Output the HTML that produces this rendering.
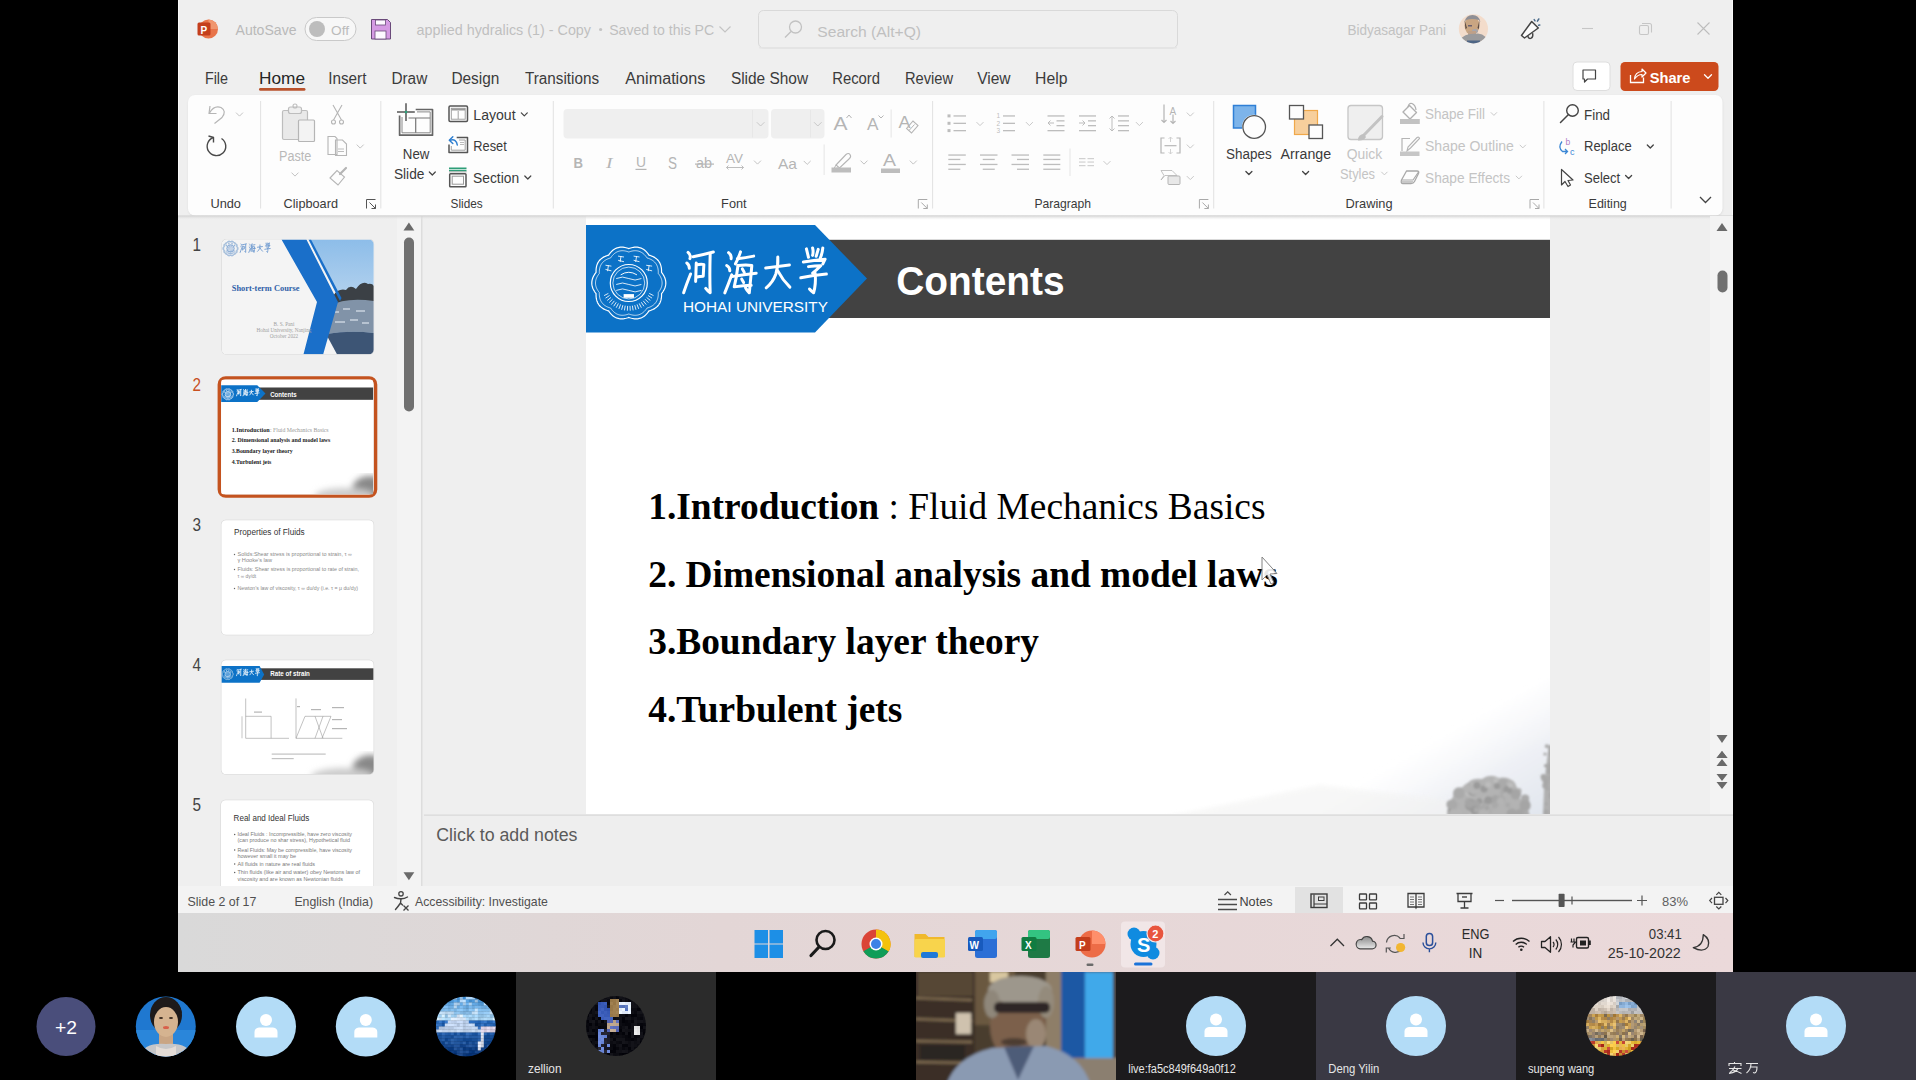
<!DOCTYPE html>
<html><head><meta charset="utf-8"><style>html,body{margin:0;padding:0;background:#000;overflow:hidden}svg{display:block;font-family:"Liberation Sans",sans-serif}</style></head><body><svg width="1916" height="1080" viewBox="0 0 1916 1080">
<rect x="0" y="0" width="1916" height="1080" fill="#000" />
<rect x="178" y="0" width="1555" height="972" fill="#efefef" />
<rect x="178" y="0" width="1" height="913" fill="#fafafa" />
<rect x="1732" y="0" width="1" height="913" fill="#fafafa" />
<circle cx="208.5" cy="29" r="9.5" fill="#e8744a" />
<path d="M208.5,19.5 A9.5,9.5 0 0 1 218,29 L208.5,29 Z" fill="#f0966e"/>
<rect x="197.5" y="22.5" width="13" height="13" fill="#c43e1c" rx="1.5" />
<text x="200.5" y="33.5" font-size="10" fill="#fff" font-weight="bold" >P</text>
<text x="235.5" y="35.0" font-size="15" fill="#b9b9b9" textLength="61.0" lengthAdjust="spacingAndGlyphs" >AutoSave</text>
<rect x="305" y="17.5" width="51" height="23" fill="#f7f7f7" rx="11.5" stroke="#c9c9c9" stroke-width="1" />
<circle cx="317" cy="29" r="8" fill="#bdbdbd" />
<text x="331.0" y="34.5" font-size="13" fill="#bbbbbb" textLength="18.0" lengthAdjust="spacingAndGlyphs" >Off</text>
<path d="M371.5,19.5 h16 l3,3 v16.5 h-19 z" fill="#d59ae3" stroke="#6a4a7a" stroke-width="1"/>
<rect x="375.5" y="20" width="10" height="5" fill="#fdf8ff" stroke="#6a4a7a" stroke-width="0.8" />
<rect x="375" y="31" width="11" height="8" fill="#fdf8ff" stroke="#6a4a7a" stroke-width="0.8" />
<text x="416.5" y="34.7" font-size="14.5" fill="#bfbfbf" textLength="174.5" lengthAdjust="spacingAndGlyphs" >applied hydralics (1) - Copy</text>
<circle cx="600.6" cy="29.5" r="1.6" fill="#c4c4c4" />
<text x="609.2" y="34.7" font-size="14.5" fill="#bfbfbf" textLength="105.0" lengthAdjust="spacingAndGlyphs" >Saved to this PC</text>
<path d="M719.5,26.5 L725,32 L730.5,26.5" stroke="#c4c4c4" stroke-width="1.2" fill="none" />
<rect x="758.5" y="10.5" width="419" height="37.5" fill="#efefef" rx="5" stroke="#d9d9d9" stroke-width="1" />
<rect x="759" y="47" width="418" height="1.5" fill="#e4e4e4" rx="0.7" />
<circle cx="795.5" cy="27" r="6" fill="none" stroke="#c2c2c2" stroke-width="1.3" />
<path d="M791,31.5 L785,37.5" stroke="#c2c2c2" stroke-width="1.5" fill="none" />
<text x="817.3" y="36.5" font-size="15.5" fill="#c0c0c0" textLength="103.7" lengthAdjust="spacingAndGlyphs" >Search (Alt+Q)</text>
<text x="1347.4" y="35.1" font-size="14.5" fill="#c2c2c2" textLength="98.6" lengthAdjust="spacingAndGlyphs" >Bidyasagar Pani</text>
<defs><clipPath id="avc"><circle cx="1473.4" cy="28.8" r="14.6"/></clipPath><filter id="avb"><feGaussianBlur stdDeviation="0.6"/></filter></defs>
<circle cx="1473.4" cy="28.8" r="14.6" fill="#f3dccb" />
<g clip-path="url(#avc)"><g filter="url(#avb)"><ellipse cx="1472" cy="25.5" rx="7.5" ry="9.5" fill="#c9a582"/><path d="M1464.5,22 Q1466,15 1472.5,15 Q1479,15 1480.5,22 L1479,20 Q1472,18 1466,20 Z" fill="#8f8f95"/><path d="M1464.5,20 L1465.5,29 L1467,28 Z M1479.5,20 L1479,29 L1477.5,28 Z" fill="#5b4a42"/><rect x="1468" y="25" width="4" height="1.5" fill="#6a6070"/><ellipse cx="1475" cy="31" rx="3" ry="2" fill="#a7a7ad"/><rect x="1468" y="31" width="8" height="6" fill="#bfa088"/><path d="M1458,46 Q1460,35 1470,34 L1478,33.5 Q1487,34 1490,46 Z" fill="#9a9a9c"/><rect x="1467" y="40.5" width="13" height="4" fill="#4d6585"/></g></g>
<path d="M1521.5,35.5 L1531.7,21.5 L1538.3,28 L1524.5,38 Z" stroke="#444" stroke-width="1.5" fill="#fbfbfb" stroke-linejoin="round"/>
<path d="M1527.8,36 Q1528.5,39.2 1531.2,38.2 Q1533.5,37 1532.6,33.2" stroke="#444" stroke-width="1.4" fill="none" />
<path d="M1534.2,19.6 L1535,20.8 M1538.8,19 L1537.4,21.2 M1539.8,25 L1538.6,25.2" stroke="#4a6a8a" stroke-width="1.5" fill="none" stroke-linecap="round"/>
<path d="M1582,28.5 L1593,28.5" stroke="#c6c6c6" stroke-width="1.1" fill="none" />
<rect x="1639.5" y="25.5" width="9" height="9" fill="none" rx="1.5" stroke="#c6c6c6" stroke-width="1.1" />
<path d="M1642,23.5 L1649.5,23.5 Q1651.5,23.5 1651.5,25.5 L1651.5,32.5" stroke="#c6c6c6" stroke-width="1.1" fill="none" />
<path d="M1697.5,22.5 L1709.5,34.5 M1709.5,22.5 L1697.5,34.5" stroke="#bdbdbd" stroke-width="1.1" fill="none" />
<text x="204.9" y="83.7" font-size="16" fill="#3b3b3b" textLength="23.1" lengthAdjust="spacingAndGlyphs" >File</text>
<text x="259.0" y="83.7" font-size="16" fill="#262626" textLength="46.0" lengthAdjust="spacingAndGlyphs" >Home</text>
<text x="328.2" y="83.7" font-size="16" fill="#3b3b3b" textLength="38.2" lengthAdjust="spacingAndGlyphs" >Insert</text>
<text x="391.4" y="83.7" font-size="16" fill="#3b3b3b" textLength="35.9" lengthAdjust="spacingAndGlyphs" >Draw</text>
<text x="451.4" y="83.7" font-size="16" fill="#3b3b3b" textLength="48.0" lengthAdjust="spacingAndGlyphs" >Design</text>
<text x="525.0" y="83.7" font-size="16" fill="#3b3b3b" textLength="74.0" lengthAdjust="spacingAndGlyphs" >Transitions</text>
<text x="625.3" y="83.7" font-size="16" fill="#3b3b3b" textLength="80.0" lengthAdjust="spacingAndGlyphs" >Animations</text>
<text x="730.9" y="83.7" font-size="16" fill="#3b3b3b" textLength="77.2" lengthAdjust="spacingAndGlyphs" >Slide Show</text>
<text x="832.2" y="83.7" font-size="16" fill="#3b3b3b" textLength="47.8" lengthAdjust="spacingAndGlyphs" >Record</text>
<text x="905.0" y="83.7" font-size="16" fill="#3b3b3b" textLength="48.0" lengthAdjust="spacingAndGlyphs" >Review</text>
<text x="977.2" y="83.7" font-size="16" fill="#3b3b3b" textLength="33.4" lengthAdjust="spacingAndGlyphs" >View</text>
<text x="1035.0" y="83.7" font-size="16" fill="#3b3b3b" textLength="32.4" lengthAdjust="spacingAndGlyphs" >Help</text>
<rect x="259" y="88" width="46.5" height="2.8" fill="#b9522c" rx="1.4" />
<rect x="1573" y="62" width="37" height="28.5" fill="#ffffff" rx="4" stroke="#dedede" stroke-width="1" />
<path d="M1583,70 h12.5 v9 h-8 l-3,3 v-3 h-1.5 z" stroke="#444" stroke-width="1.2" fill="none" stroke-linejoin="round"/>
<rect x="1620.5" y="62" width="98" height="29" fill="#cc4a1c" rx="4.5" />
<path d="M1630.5,75 v7.5 h13 v-5" stroke="#fff" stroke-width="1.3" fill="none" />
<path d="M1634.5,79 Q1635,72 1642,71.5 L1642,69 L1646,73 L1642,77 L1642,74.5 Q1637.5,74.5 1634.5,79 Z" stroke="#fff" stroke-width="1.2" fill="none" stroke-linejoin="round"/>
<text x="1649.7" y="82.5" font-size="15.5" fill="#ffffff" font-weight="bold" textLength="40.8" lengthAdjust="spacingAndGlyphs" >Share</text>
<path d="M1704.5,74.8 L1708.0,78.2 L1711.5,74.8" stroke="#fff" stroke-width="1.3" fill="none" stroke-linecap="round" stroke-linejoin="round"/>
<defs><filter id="rsh" x="-2%" y="-10%" width="104%" height="125%"><feGaussianBlur stdDeviation="1.2"/></filter></defs>
<rect x="188.5" y="96" width="1534" height="120.5" fill="#d0d0d0" rx="7" filter="url(#rsh)" opacity="0.7"/>
<defs><linearGradient id="rshg" x1="0" y1="0" x2="0" y2="1"><stop offset="0" stop-color="#cfcfcf"/><stop offset="1" stop-color="#efefef" stop-opacity="0"/></linearGradient></defs>
<rect x="188" y="95" width="1534.5" height="120.5" fill="#fdfdfd" rx="7" />
<rect x="260.1" y="101" width="1" height="107.5" fill="#e1e1e1" />
<rect x="380.3" y="101" width="1" height="107.5" fill="#e1e1e1" />
<rect x="552.8" y="101" width="1" height="107.5" fill="#e1e1e1" />
<rect x="932.1" y="101" width="1" height="107.5" fill="#e1e1e1" />
<rect x="1213.2" y="101" width="1" height="107.5" fill="#e1e1e1" />
<rect x="1543.4" y="101" width="1" height="107.5" fill="#e1e1e1" />
<rect x="1670.6" y="101" width="1" height="107.5" fill="#e1e1e1" />
<text x="210.4" y="208.3" font-size="13.5" fill="#3a3a3a" textLength="30.6" lengthAdjust="spacingAndGlyphs" >Undo</text>
<text x="283.6" y="208.3" font-size="13.5" fill="#3a3a3a" textLength="54.4" lengthAdjust="spacingAndGlyphs" >Clipboard</text>
<text x="450.6" y="208.3" font-size="13.5" fill="#3a3a3a" textLength="32.2" lengthAdjust="spacingAndGlyphs" >Slides</text>
<text x="721.1" y="208.3" font-size="13.5" fill="#3a3a3a" textLength="25.5" lengthAdjust="spacingAndGlyphs" >Font</text>
<text x="1034.4" y="208.3" font-size="13.5" fill="#3a3a3a" textLength="56.7" lengthAdjust="spacingAndGlyphs" >Paragraph</text>
<text x="1345.6" y="208.3" font-size="13.5" fill="#3a3a3a" textLength="47.0" lengthAdjust="spacingAndGlyphs" >Drawing</text>
<text x="1588.6" y="208.3" font-size="13.5" fill="#3a3a3a" textLength="38.2" lengthAdjust="spacingAndGlyphs" >Editing</text>
<path d="M366.5,208.5 L366.5,199.5 L375.5,199.5" stroke="#555" stroke-width="1" fill="none" />
<path d="M369.5,202.5 L375.5,208.5 M375.5,204.5 L375.5,208.5 L371.5,208.5" stroke="#555" stroke-width="1" fill="none" />
<path d="M918.3,208.5 L918.3,199.5 L927.3,199.5" stroke="#a9a9a9" stroke-width="1" fill="none" />
<path d="M921.3,202.5 L927.3,208.5 M927.3,204.5 L927.3,208.5 L923.3,208.5" stroke="#a9a9a9" stroke-width="1" fill="none" />
<path d="M1199.4,208.5 L1199.4,199.5 L1208.4,199.5" stroke="#a9a9a9" stroke-width="1" fill="none" />
<path d="M1202.4,202.5 L1208.4,208.5 M1208.4,204.5 L1208.4,208.5 L1204.4,208.5" stroke="#a9a9a9" stroke-width="1" fill="none" />
<path d="M1530,208.5 L1530,199.5 L1539,199.5" stroke="#a9a9a9" stroke-width="1" fill="none" />
<path d="M1533,202.5 L1539,208.5 M1539,204.5 L1539,208.5 L1535,208.5" stroke="#a9a9a9" stroke-width="1" fill="none" />
<path d="M210,106 L209,113.5 L216.5,113.5" stroke="#b5b5b5" stroke-width="1.2" fill="none" stroke-linejoin="round"/>
<path d="M209.5,113 Q214,105 221,107.5 Q227,111 222,117.5 L214.5,123.5" stroke="#b5b5b5" stroke-width="1.2" fill="none" />
<path d="M236.3,112.9 L239.5,116.1 L242.7,112.9" stroke="#c5c5c5" stroke-width="1" fill="none" stroke-linecap="round" stroke-linejoin="round"/>
<path d="M213.5,137.5 A9.3,9.3 0 1 0 221.5,138.5" stroke="#4a4a4a" stroke-width="1.4" fill="none" />
<path d="M208.5,136 L213.5,137.5 L213.5,142.5" stroke="#4a4a4a" stroke-width="1.4" fill="none" stroke-linejoin="round"/>
<rect x="282.5" y="110.5" width="25" height="29" fill="#e9e9e9" rx="1.5" stroke="#bdbdbd" stroke-width="1.2" />
<rect x="288.5" y="107" width="13" height="6.5" fill="#efefef" rx="2" stroke="#bdbdbd" stroke-width="1.2" />
<circle cx="295" cy="106" r="2" fill="none" stroke="#bdbdbd" stroke-width="1.1" />
<rect x="298.5" y="120" width="16" height="21.5" fill="#f3f3f3" rx="1" stroke="#b5b5b5" stroke-width="1.2" />
<text x="279.0" y="160.6" font-size="14" fill="#b9b9b9" textLength="32.3" lengthAdjust="spacingAndGlyphs" >Paste</text>
<path d="M291.8,172.9 L295.0,176.1 L298.2,172.9" stroke="#c3c3c3" stroke-width="1" fill="none" stroke-linecap="round" stroke-linejoin="round"/>
<path d="M333,105 L341.5,120 M342,105 L333.5,120" stroke="#b5b5b5" stroke-width="1.1" fill="none" />
<circle cx="333.5" cy="122" r="2" fill="none" stroke="#b5b5b5" stroke-width="1.1" />
<circle cx="341.5" cy="122" r="2" fill="none" stroke="#b5b5b5" stroke-width="1.1" />
<path d="M328,136.5 h7 l2,2 v16 h-9 z" stroke="#b5b5b5" stroke-width="1.1" fill="none" fill="#f4f4f4"/>
<path d="M335.5,140 h7 l4,4 v11.5 h-11 z" stroke="#b5b5b5" stroke-width="1.1" fill="none" fill="#f7f7f7"/>
<path d="M338,149 h6 M338,151.5 h6" stroke="#b5b5b5" stroke-width="0.9" fill="none" />
<path d="M357.0,144.9 L360.2,148.1 L363.4,144.9" stroke="#c3c3c3" stroke-width="1" fill="none" stroke-linecap="round" stroke-linejoin="round"/>
<path d="M330,178 L337,170.5 L344.5,177 L338,185 Z" stroke="#b5b5b5" stroke-width="1.1" fill="none" fill="#e9e9e9"/>
<path d="M340,174 L346,168" stroke="#b5b5b5" stroke-width="2.2" fill="none" stroke-linecap="round"/>
<path d="M415.7,109.5 L432.5,109.5 L432.5,135.2 L399.6,135.2 L399.6,115.5" stroke="#666" stroke-width="1.7" fill="none" stroke-linejoin="round"/>
<path d="M417,111.9 L430.2,111.9 L430.2,132.8 L402,132.8 L402,117" stroke="#8a8a8a" stroke-width="1.0" fill="none" />
<path d="M408.5,118 H430.2 M415.7,118 V132.8" stroke="#777" stroke-width="1.2" fill="none" />
<path d="M397,112.1 L414.8,112.1 M406,103.3 L406,121" stroke="#555" stroke-width="1.5" fill="none" />
<circle cx="406" cy="112.1" r="1.3" fill="#2ca27a" />
<text x="402.8" y="159.2" font-size="14" fill="#3a3a3a" textLength="26.6" lengthAdjust="spacingAndGlyphs" >New</text>
<text x="393.9" y="178.6" font-size="14" fill="#3a3a3a" textLength="30.5" lengthAdjust="spacingAndGlyphs" >Slide</text>
<path d="M429.3,172.0 L432.3,175.0 L435.3,172.0" stroke="#444" stroke-width="1.2" fill="none" stroke-linecap="round" stroke-linejoin="round"/>
<rect x="449" y="106" width="18.5" height="15.5" fill="none" rx="1.2" stroke="#555" stroke-width="1.5" />
<rect x="451.3" y="108.3" width="13.9" height="10.9" fill="none" stroke="#999" stroke-width="0.9" />
<rect x="451.5" y="108.5" width="13.5" height="2" fill="#999" />
<path d="M458.2,111 v8" stroke="#999" stroke-width="0.9" fill="none" />
<text x="473.3" y="119.7" font-size="14" fill="#3a3a3a" textLength="42.3" lengthAdjust="spacingAndGlyphs" >Layout</text>
<path d="M521.3,112.8 L524.3,115.8 L527.3,112.8" stroke="#444" stroke-width="1.2" fill="none" stroke-linecap="round" stroke-linejoin="round"/>
<path d="M456.7,137.5 H467.5 V152.5 H449 V144.5" stroke="#555" stroke-width="1.5" fill="none" stroke-linejoin="round"/>
<path d="M459,140 H465.2 V150.2 H451.3 V146" stroke="#999" stroke-width="0.9" fill="none" />
<path d="M460,142.5 h4 M460,144.5 h4" stroke="#aaa" stroke-width="0.8" fill="none" />
<path d="M450,140.2 Q456.5,138.5 457.3,145" stroke="#2f7fd0" stroke-width="1.5" fill="none" stroke-linecap="round"/>
<path d="M452.8,136.8 L449.3,140.2 L452.8,143.5" stroke="#2f7fd0" stroke-width="1.5" fill="none" stroke-linecap="round" stroke-linejoin="round"/>
<text x="473.3" y="151.1" font-size="14" fill="#3a3a3a" textLength="33.4" lengthAdjust="spacingAndGlyphs" >Reset</text>
<rect x="449" y="167.5" width="17.5" height="1.6" fill="#2e9e78" />
<rect x="449" y="169.8" width="17.5" height="1.6" fill="#2e9e78" />
<rect x="449" y="171.4" width="17.5" height="1" fill="#b0b0b0" />
<rect x="449.7" y="173.7" width="16.3" height="13" fill="none" rx="0.8" stroke="#555" stroke-width="1.5" />
<rect x="452.2" y="176.2" width="11.3" height="8" fill="none" stroke="#999" stroke-width="1" />
<text x="473.1" y="182.8" font-size="14" fill="#3a3a3a" textLength="46.0" lengthAdjust="spacingAndGlyphs" >Section</text>
<path d="M524.8,176.0 L527.8,179.0 L530.8,176.0" stroke="#444" stroke-width="1.2" fill="none" stroke-linecap="round" stroke-linejoin="round"/>
<rect x="563.5" y="109" width="205" height="29.5" fill="#efefef" rx="4" />
<rect x="752" y="110" width="1" height="27.5" fill="#e7e7e7" />
<path d="M757.1,122.5 L760.6,126.0 L764.1,122.5" stroke="#c8c8c8" stroke-width="1" fill="none" stroke-linecap="round" stroke-linejoin="round"/>
<rect x="771" y="109" width="53.5" height="29.5" fill="#efefef" rx="4" />
<rect x="810" y="110" width="1" height="27.5" fill="#e7e7e7" />
<path d="M814.3,122.5 L817.8,126.0 L821.3,122.5" stroke="#c8c8c8" stroke-width="1" fill="none" stroke-linecap="round" stroke-linejoin="round"/>
<text x="833.5" y="130.0" font-size="19" fill="#b5b5b5" textLength="14.0" lengthAdjust="spacingAndGlyphs" >A</text>
<path d="M846.5,118 L849,115 L851.5,118" stroke="#b5b5b5" stroke-width="1" fill="none" />
<text x="867.0" y="130.0" font-size="16" fill="#b5b5b5" textLength="11.5" lengthAdjust="spacingAndGlyphs" >A</text>
<path d="M878.5,115.5 L881,118 L883.5,115.5" stroke="#b5b5b5" stroke-width="1" fill="none" />
<rect x="890.6" y="109.5" width="1" height="28" fill="#e5e5e5" />
<text x="898.5" y="127.5" font-size="17" fill="#b5b5b5" textLength="12.0" lengthAdjust="spacingAndGlyphs" >A</text>
<path d="M906.5,128.5 L913,121 L918,125.5 L911.5,133 Z" stroke="#b5b5b5" stroke-width="1.1" fill="none" />
<path d="M909,130.5 L914.5,124.5" stroke="#b5b5b5" stroke-width="1" fill="none" />
<text x="573.5" y="167.8" font-size="15" fill="#b5b5b5" font-weight="bold" textLength="9.5" lengthAdjust="spacingAndGlyphs" >B</text>
<text x="606.0" y="167.8" font-size="15" fill="#b5b5b5" font-family="Liberation Serif" textLength="6.5" lengthAdjust="spacingAndGlyphs" font-style="italic">I</text>
<text x="636.0" y="166.5" font-size="14" fill="#b5b5b5" textLength="10.0" lengthAdjust="spacingAndGlyphs" >U</text>
<rect x="635.5" y="168.8" width="11" height="1.2" fill="#b5b5b5" />
<text x="668.0" y="168.5" font-size="16" fill="#b5b5b5" textLength="9.0" lengthAdjust="spacingAndGlyphs" >S</text>
<text x="696.0" y="167.5" font-size="14" fill="#b5b5b5" textLength="16.0" lengthAdjust="spacingAndGlyphs" >ab</text>
<rect x="695" y="163.5" width="19" height="1.2" fill="#b5b5b5" />
<text x="726.0" y="163.0" font-size="13" fill="#b5b5b5" textLength="17.0" lengthAdjust="spacingAndGlyphs" >AV</text>
<path d="M726.5,167.5 h17 M728.5,165.5 l-2,2 l2,2 M741.5,165.5 l2,2 l-2,2" stroke="#b5b5b5" stroke-width="0.9" fill="none" />
<path d="M754.3,160.9 L757.5,164.1 L760.7,160.9" stroke="#c3c3c3" stroke-width="1" fill="none" stroke-linecap="round" stroke-linejoin="round"/>
<text x="778.0" y="168.9" font-size="15" fill="#b5b5b5" textLength="19.0" lengthAdjust="spacingAndGlyphs" >Aa</text>
<path d="M804.0,161.2 L807.2,164.4 L810.4,161.2" stroke="#c3c3c3" stroke-width="1" fill="none" stroke-linecap="round" stroke-linejoin="round"/>
<rect x="823.6" y="144.5" width="1" height="30.5" fill="#e5e5e5" />
<path d="M836,165 L846,154.5 Q848.5,152.5 850,154.5 Q851.5,156.5 849.5,158.5 L839.5,168 Z" stroke="#b5b5b5" stroke-width="1.1" fill="none" />
<path d="M836,165 L834,168.5 L838,168" stroke="#b5b5b5" stroke-width="1" fill="none" />
<rect x="831.5" y="167.5" width="19.5" height="5" fill="#bdbdbd" />
<path d="M860.8,160.9 L864.0,164.1 L867.2,160.9" stroke="#c3c3c3" stroke-width="1" fill="none" stroke-linecap="round" stroke-linejoin="round"/>
<text x="883.0" y="166.0" font-size="16" fill="#b5b5b5" textLength="13.0" lengthAdjust="spacingAndGlyphs" >A</text>
<rect x="881" y="168.5" width="19" height="4.5" fill="#bdbdbd" />
<path d="M910.1,160.9 L913.3,164.1 L916.5,160.9" stroke="#c3c3c3" stroke-width="1" fill="none" stroke-linecap="round" stroke-linejoin="round"/>
<rect x="947.5" y="114.4" width="3" height="3" fill="#bdbdbd" />
<rect x="953.5" y="115.30000000000001" width="12.5" height="1.3" fill="#bdbdbd" />
<rect x="947.5" y="121.8" width="3" height="3" fill="#bdbdbd" />
<rect x="953.5" y="122.7" width="12.5" height="1.3" fill="#bdbdbd" />
<rect x="947.5" y="129.1" width="3" height="3" fill="#bdbdbd" />
<rect x="953.5" y="130.0" width="12.5" height="1.3" fill="#bdbdbd" />
<path d="M976.8,122.4 L980.0,125.6 L983.2,122.4" stroke="#c9c9c9" stroke-width="1" fill="none" stroke-linecap="round" stroke-linejoin="round"/>
<text x="996.5" y="118.4" font-size="6.5" fill="#bdbdbd" >1</text>
<rect x="1003" y="115.30000000000001" width="12" height="1.3" fill="#bdbdbd" />
<text x="996.5" y="125.8" font-size="6.5" fill="#bdbdbd" >2</text>
<rect x="1003" y="122.7" width="12" height="1.3" fill="#bdbdbd" />
<text x="996.5" y="133.1" font-size="6.5" fill="#bdbdbd" >3</text>
<rect x="1003" y="130.0" width="12" height="1.3" fill="#bdbdbd" />
<path d="M1026.2,122.4 L1029.4,125.6 L1032.6,122.4" stroke="#c9c9c9" stroke-width="1" fill="none" stroke-linecap="round" stroke-linejoin="round"/>
<rect x="1047.5" y="115.3" width="17" height="1.3" fill="#bdbdbd" />
<rect x="1056.5" y="120.2" width="8" height="1.3" fill="#bdbdbd" />
<rect x="1056.5" y="125" width="8" height="1.3" fill="#bdbdbd" />
<rect x="1047.5" y="130" width="17" height="1.3" fill="#bdbdbd" />
<path d="M1054,123 h-6 M1050.5,120.5 l-2.5,2.5 l2.5,2.5" stroke="#bdbdbd" stroke-width="1" fill="none" />
<rect x="1079" y="115.3" width="17" height="1.3" fill="#bdbdbd" />
<rect x="1088" y="120.2" width="8" height="1.3" fill="#bdbdbd" />
<rect x="1088" y="125" width="8" height="1.3" fill="#bdbdbd" />
<rect x="1079" y="130" width="17" height="1.3" fill="#bdbdbd" />
<path d="M1079,123 h6 M1082.5,120.5 l2.5,2.5 l-2.5,2.5" stroke="#bdbdbd" stroke-width="1" fill="none" />
<rect x="1118" y="115.3" width="11" height="1.3" fill="#bdbdbd" />
<rect x="1118" y="120.2" width="11" height="1.3" fill="#bdbdbd" />
<rect x="1118" y="125" width="11" height="1.3" fill="#bdbdbd" />
<rect x="1118" y="130" width="11" height="1.3" fill="#bdbdbd" />
<path d="M1112,116 v15 M1109.5,118.5 l2.5,-2.5 l2.5,2.5 M1109.5,128.5 l2.5,2.5 l2.5,-2.5" stroke="#bdbdbd" stroke-width="1" fill="none" />
<path d="M1136.2,122.4 L1139.4,125.6 L1142.6,122.4" stroke="#c9c9c9" stroke-width="1" fill="none" stroke-linecap="round" stroke-linejoin="round"/>
<rect x="948.3" y="154.4" width="17.5" height="1.3" fill="#bdbdbd" />
<rect x="948.3" y="158.8" width="12" height="1.3" fill="#bdbdbd" />
<rect x="948.3" y="163.8" width="17.5" height="1.3" fill="#bdbdbd" />
<rect x="948.3" y="168.6" width="12" height="1.3" fill="#bdbdbd" />
<rect x="980.0" y="154.4" width="17.5" height="1.3" fill="#bdbdbd" />
<rect x="982.75" y="158.8" width="12" height="1.3" fill="#bdbdbd" />
<rect x="980.0" y="163.8" width="17.5" height="1.3" fill="#bdbdbd" />
<rect x="982.75" y="168.6" width="12" height="1.3" fill="#bdbdbd" />
<rect x="1011.5" y="154.4" width="17.5" height="1.3" fill="#bdbdbd" />
<rect x="1017.0" y="158.8" width="12" height="1.3" fill="#bdbdbd" />
<rect x="1011.5" y="163.8" width="17.5" height="1.3" fill="#bdbdbd" />
<rect x="1017.0" y="168.6" width="12" height="1.3" fill="#bdbdbd" />
<rect x="1043.3" y="154.4" width="17" height="1.3" fill="#bdbdbd" />
<rect x="1043.3" y="158.8" width="17" height="1.3" fill="#bdbdbd" />
<rect x="1043.3" y="163.8" width="17" height="1.3" fill="#bdbdbd" />
<rect x="1043.3" y="168.6" width="17" height="1.3" fill="#bdbdbd" />
<rect x="1069.5" y="148.5" width="1" height="27.5" fill="#e5e5e5" />
<rect x="1079" y="158.1" width="6.5" height="1.1" fill="#cdcdcd" />
<rect x="1087.5" y="158.1" width="6.5" height="1.1" fill="#cdcdcd" />
<rect x="1079" y="161.5" width="6.5" height="1.1" fill="#cdcdcd" />
<rect x="1087.5" y="161.5" width="6.5" height="1.1" fill="#cdcdcd" />
<rect x="1079" y="165.1" width="6.5" height="1.1" fill="#cdcdcd" />
<rect x="1087.5" y="165.1" width="6.5" height="1.1" fill="#cdcdcd" />
<path d="M1103.8,161.4 L1107.0,164.6 L1110.2,161.4" stroke="#c9c9c9" stroke-width="1" fill="none" stroke-linecap="round" stroke-linejoin="round"/>
<path d="M1164,104.5 v18 M1161.5,120 l2.5,2.5 l2.5,-2.5" stroke="#b5b5b5" stroke-width="1.2" fill="none" />
<text x="1169.5" y="114.5" font-size="10" fill="#b5b5b5" >A</text>
<path d="M1173,114.5 v9 M1170.5,121 l2.5,2.5 l2.5,-2.5" stroke="#b5b5b5" stroke-width="1.2" fill="none" />
<path d="M1187.1,112.9 L1190.3,116.1 L1193.5,112.9" stroke="#c9c9c9" stroke-width="1" fill="none" stroke-linecap="round" stroke-linejoin="round"/>
<path d="M1164.5,138 h-3.5 v15 h3.5 M1176.5,138 h3.5 v15 h-3.5" stroke="#b5b5b5" stroke-width="1.2" fill="none" />
<rect x="1164.5" y="145" width="12" height="1.3" fill="#bdbdbd" />
<path d="M1170.5,137 v5 M1168.5,139 l2,-2 l2,2 M1170.5,149 v5 M1168.5,152 l2,2 l2,-2" stroke="#cdcdcd" stroke-width="0.9" fill="none" />
<path d="M1187.1,144.9 L1190.3,148.1 L1193.5,144.9" stroke="#c9c9c9" stroke-width="1" fill="none" stroke-linecap="round" stroke-linejoin="round"/>
<path d="M1161,170.5 h11 l5,5 h-8 l-4,0 l-4,4.5 l3,-4.5 z" stroke="#b5b5b5" stroke-width="0.8" fill="none" fill="#c8c8c8"/>
<rect x="1168" y="176" width="12" height="8.5" fill="#e8e8e8" rx="1" stroke="#b5b5b5" stroke-width="1" />
<path d="M1187.1,176.4 L1190.3,179.6 L1193.5,176.4" stroke="#c9c9c9" stroke-width="1" fill="none" stroke-linecap="round" stroke-linejoin="round"/>
<rect x="1233.5" y="105.5" width="22" height="22.5" fill="#7db4ea" stroke="#2f7fd6" stroke-width="1.5" />
<circle cx="1254.2" cy="127" r="12.2" fill="#ffffff" />
<circle cx="1254.2" cy="127" r="11.3" fill="#fdfdfd" stroke="#555" stroke-width="1.3" />
<text x="1226.1" y="159.4" font-size="14" fill="#3a3a3a" textLength="45.6" lengthAdjust="spacingAndGlyphs" >Shapes</text>
<path d="M1245.9,171.5 L1248.9,174.5 L1251.9,171.5" stroke="#444" stroke-width="1.3" fill="none" stroke-linecap="round" stroke-linejoin="round"/>
<rect x="1294.5" y="110.5" width="23" height="24" fill="#f7cf9c" stroke="#f0a84a" stroke-width="1.2" />
<rect x="1289.5" y="105.5" width="14" height="13.5" fill="#fdfdfd" stroke="#555" stroke-width="1.3" />
<rect x="1309" y="125" width="13.5" height="13.5" fill="#fdfdfd" stroke="#555" stroke-width="1.3" />
<text x="1280.6" y="159.4" font-size="14" fill="#3a3a3a" textLength="50.5" lengthAdjust="spacingAndGlyphs" >Arrange</text>
<path d="M1302.6,171.5 L1305.6,174.5 L1308.6,171.5" stroke="#444" stroke-width="1.3" fill="none" stroke-linecap="round" stroke-linejoin="round"/>
<rect x="1348" y="105.5" width="34.5" height="34" fill="#efefef" rx="3" stroke="#c6c6c6" stroke-width="1.3" />
<path d="M1363,136 L1382,116.5" stroke="#c3c3c3" stroke-width="3" fill="none" stroke-linecap="round"/>
<path d="M1358,140.5 Q1358,134 1364,134 L1366,137 Q1364,141 1358,140.5 Z" stroke="none" stroke-width="0" fill="#c0c0c0" />
<text x="1346.7" y="159.4" font-size="14" fill="#c4c4c4" textLength="35.5" lengthAdjust="spacingAndGlyphs" >Quick</text>
<text x="1340.0" y="178.9" font-size="14" fill="#c4c4c4" textLength="35.0" lengthAdjust="spacingAndGlyphs" >Styles</text>
<path d="M1381.6,172.1 L1384.4,174.9 L1387.2,172.1" stroke="#c9c9c9" stroke-width="1" fill="none" stroke-linecap="round" stroke-linejoin="round"/>
<path d="M1403,112 L1409.5,105.5 L1416.5,112.5 L1410,119 Z" stroke="#b0b0b0" stroke-width="1.4" fill="none" stroke-linejoin="round" fill="#f6f6f6"/>
<path d="M1408,107 Q1409,102.5 1412,103.5 Q1415.5,105 1416,110" stroke="#b0b0b0" stroke-width="1.2" fill="none" />
<rect x="1400" y="119" width="19.8" height="5" fill="#c2c2c2" />
<text x="1425.0" y="119.4" font-size="14" fill="#c4c4c4" textLength="60.0" lengthAdjust="spacingAndGlyphs" >Shape Fill</text>
<path d="M1491.1,112.6 L1493.9,115.4 L1496.7,112.6" stroke="#c9c9c9" stroke-width="1" fill="none" stroke-linecap="round" stroke-linejoin="round"/>
<path d="M1402,151 L1402,138.5 L1410,138.5" stroke="#b5b5b5" stroke-width="1.2" fill="none" />
<path d="M1407,151 L1408,147 L1417,137.5 Q1419,136.5 1419.5,138.5 L1410.5,148 Z" stroke="#b5b5b5" stroke-width="1.1" fill="none" />
<rect x="1400" y="151.5" width="19.5" height="4.5" fill="#c6c6c6" />
<text x="1425.0" y="151.1" font-size="14" fill="#c4c4c4" textLength="88.9" lengthAdjust="spacingAndGlyphs" >Shape Outline</text>
<path d="M1520.0,145.1 L1522.8,147.9 L1525.6,145.1" stroke="#c9c9c9" stroke-width="1" fill="none" stroke-linecap="round" stroke-linejoin="round"/>
<path d="M1401.5,180 L1406.5,171 H1417 Q1419.5,171 1418.5,173.5 L1414.5,181.5 Q1413.5,183.5 1411,183.5 H1403 Q1400.5,183.5 1401.5,180 Z" stroke="#a8a8a8" stroke-width="1.3" fill="none" fill="#f4f4f4" stroke-linejoin="round"/>
<path d="M1401.8,180 H1413 L1418.5,172" stroke="#a8a8a8" stroke-width="1.1" fill="none" />
<path d="M1402,182 H1413" stroke="#c8c8c8" stroke-width="2" fill="none" />
<text x="1425.0" y="182.8" font-size="14" fill="#c4c4c4" textLength="85.0" lengthAdjust="spacingAndGlyphs" >Shape Effects</text>
<path d="M1516.1,176.1 L1518.9,178.9 L1521.7,176.1" stroke="#c9c9c9" stroke-width="1" fill="none" stroke-linecap="round" stroke-linejoin="round"/>
<circle cx="1572.5" cy="110.5" r="5.8" fill="none" stroke="#444" stroke-width="1.4" />
<path d="M1568.5,114.5 L1560.5,122.5" stroke="#444" stroke-width="1.5" fill="none" stroke-linecap="round"/>
<text x="1584.0" y="120.0" font-size="14" fill="#3a3a3a" textLength="26.0" lengthAdjust="spacingAndGlyphs" >Find</text>
<text x="1565.5" y="144.5" font-size="8.5" fill="#b07cc6" >b</text>
<text x="1570.0" y="154.5" font-size="9" fill="#3b87d5" >c</text>
<path d="M1562,141.5 Q1557.5,147.5 1562.5,151.5 L1567.5,151.5 M1565,149 L1567.5,151.5 L1565,154" stroke="#3b87d5" stroke-width="1.3" fill="none" />
<text x="1584.0" y="151.3" font-size="14" fill="#3a3a3a" textLength="47.7" lengthAdjust="spacingAndGlyphs" >Replace</text>
<path d="M1647.3,145.0 L1650.3,148.0 L1653.3,145.0" stroke="#444" stroke-width="1.3" fill="none" stroke-linecap="round" stroke-linejoin="round"/>
<path d="M1561.5,169.5 L1561.5,185 L1565,181.5 L1568,186.5 L1570.5,185 L1568,180.5 L1573,180 Z" stroke="#444" stroke-width="1.2" fill="none" stroke-linejoin="round"/>
<text x="1584.0" y="182.6" font-size="14" fill="#3a3a3a" textLength="36.2" lengthAdjust="spacingAndGlyphs" >Select</text>
<path d="M1625.6,175.5 L1628.6,178.5 L1631.6,175.5" stroke="#444" stroke-width="1.3" fill="none" stroke-linecap="round" stroke-linejoin="round"/>
<path d="M1700,197 L1705.5,202.5 L1711,197" stroke="#444" stroke-width="1.3" fill="none" />
<rect x="178" y="216" width="219" height="670" fill="#efefef" />
<rect x="397" y="216" width="25" height="670" fill="#f3f3f3" />
<rect x="421" y="216" width="1.5" height="670" fill="#dddddd" />
<rect x="423" y="216" width="1310" height="598" fill="#efefef" />
<rect x="423" y="814" width="1310" height="72" fill="#eeeeee" />
<rect x="424" y="814.5" width="1309" height="1.3" fill="#dadada" />
<text x="436.3" y="841.0" font-size="17.5" fill="#5a5a5a" textLength="141.2" lengthAdjust="spacingAndGlyphs" >Click to add notes</text>
<polygon points="403.5,230.5 414.3,230.5 408.9,222.5" fill="#6a6a6a"/>
<rect x="404" y="237.5" width="10" height="174" fill="#707070" rx="5" />
<polygon points="403.5,872.3 414.3,872.3 408.9,880.3" fill="#6a6a6a"/>
<text x="192.5" y="250.8" font-size="17.5" fill="#444" textLength="8.5" lengthAdjust="spacingAndGlyphs" >1</text>
<text x="192.5" y="390.8" font-size="17.5" fill="#c8501f" textLength="8.5" lengthAdjust="spacingAndGlyphs" >2</text>
<text x="192.5" y="531.0" font-size="17.5" fill="#444" textLength="8.5" lengthAdjust="spacingAndGlyphs" >3</text>
<text x="192.5" y="671.0" font-size="17.5" fill="#444" textLength="8.5" lengthAdjust="spacingAndGlyphs" >4</text>
<text x="192.5" y="811.0" font-size="17.5" fill="#444" textLength="8.5" lengthAdjust="spacingAndGlyphs" >5</text>
<defs><clipPath id="thumbclip"><rect x="178" y="216" width="219" height="670"/></clipPath></defs>
<g clip-path="url(#thumbclip)">
<rect x="221.5" y="239.1" width="152.6" height="115.6" fill="#d4d4d4" rx="5" />
<rect x="222" y="239.6" width="151.6" height="114.6" fill="#ffffff" rx="4.5" />
<defs><clipPath id="t1"><rect x="222" y="239.6" width="151.6" height="114.6" rx="4.5"/></clipPath><linearGradient id="sky" x1="0" y1="0" x2="0" y2="1"><stop offset="0" stop-color="#8dbde9"/><stop offset="1" stop-color="#d8e6f3"/></linearGradient></defs>
<g clip-path="url(#t1)">
<rect x="222" y="239.6" width="151.6" height="114.6" fill="#f4f4f4" />
<defs><filter id="pb"><feGaussianBlur stdDeviation="0.7"/></filter></defs>
<g filter="url(#pb)">
<polygon points="310,239.6 374,239.6 374,354.2 337,354.2 324,328 341,302" fill="url(#sky)"/>
<path d="M333,296 Q338,288 346,290 Q350,284 356,289 Q362,280 368,284 Q372,283 374,286 L374,305 L332,305 Z" fill="#3a4045"/>
<path d="M330,306 Q345,297 374,301 L374,333 Q350,330 326,334 L330,318 Z" fill="#8193a8"/>
<path d="M331,312 h8 M343,309 h7 M356,311 h9 M335,322 h10 M350,320 h8 M362,323 h7" stroke="#c9d3de" stroke-width="1.6"/>
<path d="M326,334 Q350,330 374,333 L374,354.2 L337,354.2 Z" fill="#3c5475"/>
</g>
<polygon points="281.5,239.6 306.4,239.6 338,302 323.2,354.2 303.5,354.2 317,302" fill="#1a6fc9"/>
<polygon points="308.5,239.6 311,239.6 341.5,298 340,301" fill="#1a6fc9"/>
<polyline points="238.00,248.50 237.99,248.70 237.97,248.89 237.94,249.09 237.89,249.28 237.83,249.46 237.76,249.65 237.67,249.83 237.58,250.00 237.48,250.18 237.37,250.34 237.25,250.50 237.13,250.66 237.14,250.85 237.14,251.05 237.13,251.25 237.11,251.44 237.08,251.64 237.05,251.84 237.00,252.03 236.93,252.21 236.86,252.40 236.78,252.58 236.68,252.75 236.57,252.91 236.45,253.06 236.31,253.21 236.17,253.34 236.02,253.47 235.86,253.59 235.69,253.69 235.52,253.79 235.34,253.88 235.16,253.96 234.98,254.03 234.79,254.09 234.60,254.14 234.49,254.30 234.37,254.46 234.25,254.62 234.12,254.77 233.98,254.91 233.84,255.05 233.68,255.17 233.52,255.29 233.35,255.39 233.18,255.49 233.00,255.57 232.82,255.63 232.63,255.69 232.44,255.73 232.24,255.75 232.04,255.77 231.85,255.77 231.65,255.76 231.45,255.73 231.26,255.70 231.06,255.65 230.87,255.60 230.68,255.54 230.50,255.47 230.32,255.54 230.13,255.60 229.94,255.65 229.74,255.70 229.55,255.73 229.35,255.76 229.15,255.77 228.96,255.77 228.76,255.75 228.56,255.73 228.37,255.69 228.18,255.63 228.00,255.57 227.82,255.49 227.65,255.39 227.48,255.29 227.32,255.17 227.16,255.05 227.02,254.91 226.88,254.77 226.75,254.62 226.63,254.46 226.51,254.30 226.40,254.14 226.21,254.09 226.02,254.03 225.84,253.96 225.66,253.88 225.48,253.79 225.31,253.69 225.14,253.59 224.98,253.47 224.83,253.34 224.69,253.21 224.55,253.06 224.43,252.91 224.32,252.75 224.22,252.58 224.14,252.40 224.07,252.21 224.00,252.03 223.95,251.84 223.92,251.64 223.89,251.44 223.87,251.25 223.86,251.05 223.86,250.85 223.87,250.66 223.75,250.50 223.63,250.34 223.52,250.18 223.42,250.00 223.33,249.83 223.24,249.65 223.17,249.46 223.11,249.28 223.06,249.09 223.03,248.89 223.01,248.70 223.00,248.50 223.01,248.30 223.03,248.11 223.06,247.91 223.11,247.72 223.17,247.54 223.24,247.35 223.33,247.17 223.42,247.00 223.52,246.82 223.63,246.66 223.75,246.50 223.87,246.34 223.86,246.15 223.86,245.95 223.87,245.75 223.89,245.56 223.92,245.36 223.95,245.16 224.00,244.97 224.07,244.79 224.14,244.60 224.22,244.42 224.32,244.25 224.43,244.09 224.55,243.94 224.69,243.79 224.83,243.66 224.98,243.53 225.14,243.41 225.31,243.31 225.48,243.21 225.66,243.12 225.84,243.04 226.02,242.97 226.21,242.91 226.40,242.86 226.51,242.70 226.63,242.54 226.75,242.38 226.88,242.23 227.02,242.09 227.16,241.95 227.32,241.83 227.48,241.71 227.65,241.61 227.82,241.51 228.00,241.43 228.18,241.37 228.37,241.31 228.56,241.27 228.76,241.25 228.96,241.23 229.15,241.23 229.35,241.24 229.55,241.27 229.74,241.30 229.94,241.35 230.13,241.40 230.32,241.46 230.50,241.53 230.68,241.46 230.87,241.40 231.06,241.35 231.26,241.30 231.45,241.27 231.65,241.24 231.85,241.23 232.04,241.23 232.24,241.25 232.44,241.27 232.63,241.31 232.82,241.37 233.00,241.43 233.18,241.51 233.35,241.61 233.52,241.71 233.68,241.83 233.84,241.95 233.98,242.09 234.12,242.23 234.25,242.38 234.37,242.54 234.49,242.70 234.60,242.86 234.79,242.91 234.98,242.97 235.16,243.04 235.34,243.12 235.52,243.21 235.69,243.31 235.86,243.41 236.02,243.53 236.17,243.66 236.31,243.79 236.45,243.94 236.57,244.09 236.68,244.25 236.78,244.42 236.86,244.60 236.93,244.79 237.00,244.97 237.05,245.16 237.08,245.36 237.11,245.56 237.13,245.75 237.14,245.95 237.14,246.15 237.13,246.34 237.25,246.50 237.37,246.66 237.48,246.82 237.58,247.00 237.67,247.17 237.76,247.35 237.83,247.54 237.89,247.72 237.94,247.91 237.97,248.11 237.99,248.30 238.00,248.50" fill="none" stroke="#6f9bd0" stroke-width="0.7"/>
<polyline points="237.25,248.50 237.24,248.68 237.22,248.85 237.19,249.03 237.15,249.20 237.10,249.37 237.03,249.53 236.96,249.70 236.87,249.85 236.78,250.01 236.68,250.16 236.58,250.30 236.47,250.44 236.48,250.62 236.47,250.79 236.47,250.97 236.45,251.15 236.43,251.33 236.39,251.50 236.35,251.67 236.29,251.84 236.22,252.01 236.15,252.17 236.06,252.32 235.96,252.47 235.85,252.61 235.73,252.74 235.61,252.86 235.47,252.97 235.33,253.08 235.18,253.18 235.02,253.26 234.86,253.34 234.69,253.41 234.53,253.47 234.36,253.53 234.19,253.58 234.09,253.72 233.99,253.87 233.87,254.01 233.76,254.14 233.63,254.27 233.50,254.39 233.36,254.50 233.22,254.61 233.07,254.70 232.91,254.79 232.75,254.86 232.59,254.92 232.42,254.97 232.24,255.00 232.07,255.03 231.89,255.04 231.71,255.04 231.53,255.03 231.36,255.01 231.18,254.98 231.01,254.94 230.83,254.89 230.67,254.84 230.50,254.78 230.33,254.84 230.17,254.89 229.99,254.94 229.82,254.98 229.64,255.01 229.47,255.03 229.29,255.04 229.11,255.04 228.93,255.03 228.76,255.00 228.58,254.97 228.41,254.92 228.25,254.86 228.09,254.79 227.93,254.70 227.78,254.61 227.64,254.50 227.50,254.39 227.37,254.27 227.24,254.14 227.13,254.01 227.01,253.87 226.91,253.72 226.81,253.58 226.64,253.53 226.47,253.47 226.31,253.41 226.14,253.34 225.98,253.26 225.82,253.18 225.67,253.08 225.53,252.97 225.39,252.86 225.27,252.74 225.15,252.61 225.04,252.47 224.94,252.32 224.85,252.17 224.78,252.01 224.71,251.84 224.65,251.67 224.61,251.50 224.57,251.33 224.55,251.15 224.53,250.97 224.53,250.79 224.52,250.62 224.53,250.44 224.42,250.30 224.32,250.16 224.22,250.01 224.13,249.85 224.04,249.70 223.97,249.53 223.90,249.37 223.85,249.20 223.81,249.03 223.78,248.85 223.76,248.68 223.75,248.50 223.76,248.32 223.78,248.15 223.81,247.97 223.85,247.80 223.90,247.63 223.97,247.47 224.04,247.30 224.13,247.15 224.22,246.99 224.32,246.84 224.42,246.70 224.53,246.56 224.52,246.38 224.53,246.21 224.53,246.03 224.55,245.85 224.57,245.67 224.61,245.50 224.65,245.33 224.71,245.16 224.78,244.99 224.85,244.83 224.94,244.68 225.04,244.53 225.15,244.39 225.27,244.26 225.39,244.14 225.53,244.03 225.67,243.92 225.82,243.82 225.98,243.74 226.14,243.66 226.31,243.59 226.47,243.53 226.64,243.47 226.81,243.42 226.91,243.28 227.01,243.13 227.13,242.99 227.24,242.86 227.37,242.73 227.50,242.61 227.64,242.50 227.78,242.39 227.93,242.30 228.09,242.21 228.25,242.14 228.41,242.08 228.58,242.03 228.76,242.00 228.93,241.97 229.11,241.96 229.29,241.96 229.47,241.97 229.64,241.99 229.82,242.02 229.99,242.06 230.17,242.11 230.33,242.16 230.50,242.22 230.67,242.16 230.83,242.11 231.01,242.06 231.18,242.02 231.36,241.99 231.53,241.97 231.71,241.96 231.89,241.96 232.07,241.97 232.24,242.00 232.42,242.03 232.59,242.08 232.75,242.14 232.91,242.21 233.07,242.30 233.22,242.39 233.36,242.50 233.50,242.61 233.63,242.73 233.76,242.86 233.87,242.99 233.99,243.13 234.09,243.28 234.19,243.42 234.36,243.47 234.53,243.53 234.69,243.59 234.86,243.66 235.02,243.74 235.18,243.82 235.33,243.92 235.47,244.03 235.61,244.14 235.73,244.26 235.85,244.39 235.96,244.53 236.06,244.68 236.15,244.83 236.22,244.99 236.29,245.16 236.35,245.33 236.39,245.50 236.43,245.67 236.45,245.85 236.47,246.03 236.47,246.21 236.48,246.38 236.47,246.56 236.58,246.70 236.68,246.84 236.78,246.99 236.87,247.15 236.96,247.30 237.03,247.47 237.10,247.63 237.15,247.80 237.19,247.97 237.22,248.15 237.24,248.32 237.25,248.50" fill="none" stroke="#6f9bd0" stroke-width="0.42"/>
<circle cx="230.5" cy="248.5" r="3.75" fill="none" stroke="#6f9bd0" stroke-width="0.7" />
<circle cx="230.5" cy="248.5" r="3.225" fill="none" stroke="#6f9bd0" stroke-width="0.42" />
<line x1="234.64" y1="250.61" x2="235.51" y2="251.05" stroke="#6f9bd0" stroke-width="0.48999999999999994"/>
<line x1="234.40" y1="251.03" x2="235.22" y2="251.56" stroke="#6f9bd0" stroke-width="0.48999999999999994"/>
<line x1="234.11" y1="251.43" x2="234.87" y2="252.04" stroke="#6f9bd0" stroke-width="0.48999999999999994"/>
<line x1="233.79" y1="251.79" x2="234.48" y2="252.48" stroke="#6f9bd0" stroke-width="0.48999999999999994"/>
<line x1="233.43" y1="252.11" x2="234.04" y2="252.87" stroke="#6f9bd0" stroke-width="0.48999999999999994"/>
<line x1="233.03" y1="252.40" x2="233.56" y2="253.22" stroke="#6f9bd0" stroke-width="0.48999999999999994"/>
<line x1="232.61" y1="252.64" x2="233.05" y2="253.51" stroke="#6f9bd0" stroke-width="0.48999999999999994"/>
<line x1="232.17" y1="252.84" x2="232.52" y2="253.75" stroke="#6f9bd0" stroke-width="0.48999999999999994"/>
<line x1="231.70" y1="252.99" x2="231.96" y2="253.93" stroke="#6f9bd0" stroke-width="0.48999999999999994"/>
<line x1="231.23" y1="253.09" x2="231.38" y2="254.06" stroke="#6f9bd0" stroke-width="0.48999999999999994"/>
<line x1="230.74" y1="253.14" x2="230.79" y2="254.12" stroke="#6f9bd0" stroke-width="0.48999999999999994"/>
<line x1="230.26" y1="253.14" x2="230.21" y2="254.12" stroke="#6f9bd0" stroke-width="0.48999999999999994"/>
<line x1="229.77" y1="253.09" x2="229.62" y2="254.06" stroke="#6f9bd0" stroke-width="0.48999999999999994"/>
<line x1="229.30" y1="252.99" x2="229.04" y2="253.93" stroke="#6f9bd0" stroke-width="0.48999999999999994"/>
<line x1="228.83" y1="252.84" x2="228.48" y2="253.75" stroke="#6f9bd0" stroke-width="0.48999999999999994"/>
<line x1="228.39" y1="252.64" x2="227.95" y2="253.51" stroke="#6f9bd0" stroke-width="0.48999999999999994"/>
<line x1="227.97" y1="252.40" x2="227.44" y2="253.22" stroke="#6f9bd0" stroke-width="0.48999999999999994"/>
<line x1="227.57" y1="252.11" x2="226.96" y2="252.87" stroke="#6f9bd0" stroke-width="0.48999999999999994"/>
<line x1="227.21" y1="251.79" x2="226.52" y2="252.48" stroke="#6f9bd0" stroke-width="0.48999999999999994"/>
<line x1="226.89" y1="251.43" x2="226.13" y2="252.04" stroke="#6f9bd0" stroke-width="0.48999999999999994"/>
<line x1="226.60" y1="251.03" x2="225.78" y2="251.56" stroke="#6f9bd0" stroke-width="0.48999999999999994"/>
<line x1="226.36" y1="250.61" x2="225.49" y2="251.05" stroke="#6f9bd0" stroke-width="0.48999999999999994"/>
<path d="M225.77,244.90 l1.20,0.18 M226.37,244.90 l-0.18,1.20 M225.77,245.74 l1.20,0.30" stroke="#6f9bd0" stroke-width="0.48999999999999994" fill="none"/>
<path d="M228.32,243.05 l1.20,0.18 M228.92,243.05 l-0.18,1.20 M228.32,243.89 l1.20,0.30" stroke="#6f9bd0" stroke-width="0.48999999999999994" fill="none"/>
<path d="M231.48,243.05 l1.20,0.18 M232.08,243.05 l-0.18,1.20 M231.48,243.89 l1.20,0.30" stroke="#6f9bd0" stroke-width="0.48999999999999994" fill="none"/>
<path d="M234.03,244.90 l1.20,0.18 M234.63,244.90 l-0.18,1.20 M234.03,245.74 l1.20,0.30" stroke="#6f9bd0" stroke-width="0.48999999999999994" fill="none"/>
<path d="M227.95,247.60 q1.28,-0.60 2.55,0 t2.55,0" stroke="#6f9bd0" stroke-width="0.48999999999999994" fill="none"/>
<path d="M227.95,248.80 q1.28,-0.60 2.55,0 t2.55,0" stroke="#6f9bd0" stroke-width="0.48999999999999994" fill="none"/>
<path d="M227.95,250.00 q1.28,-0.60 2.55,0 t2.55,0" stroke="#6f9bd0" stroke-width="0.48999999999999994" fill="none"/>
<path d="M228.85,246.85 q1.65,-1.05 3.30,0" stroke="#6f9bd0" stroke-width="0.5599999999999999" fill="none"/>
<rect x="229.45" y="250.75" width="2.1" height="0.75" fill="#6f9bd0" />
<path d="M0.16,0.06 Q0.26,0.12 0.22,0.2" transform="translate(240.00,243.38) scale(6.662,9.255)" stroke="#6f9bd0" stroke-width="0.90" vector-effect="non-scaling-stroke" fill="none" stroke-linecap="round" stroke-linejoin="round"/>
<path d="M0.12,0.3 Q0.2,0.34 0.2,0.42" transform="translate(240.00,243.38) scale(6.662,9.255)" stroke="#6f9bd0" stroke-width="0.90" vector-effect="non-scaling-stroke" fill="none" stroke-linecap="round" stroke-linejoin="round"/>
<path d="M0.02,0.98 Q0.1,0.8 0.24,0.55" transform="translate(240.00,243.38) scale(6.662,9.255)" stroke="#6f9bd0" stroke-width="0.90" vector-effect="non-scaling-stroke" fill="none" stroke-linecap="round" stroke-linejoin="round"/>
<path d="M0.32,0.16 Q0.6,0.12 0.96,0.05" transform="translate(240.00,243.38) scale(6.662,9.255)" stroke="#6f9bd0" stroke-width="0.90" vector-effect="non-scaling-stroke" fill="none" stroke-linecap="round" stroke-linejoin="round"/>
<path d="M0.86,0.1 Q0.84,0.6 0.86,0.98 Q0.78,0.94 0.72,0.88" transform="translate(240.00,243.38) scale(6.662,9.255)" stroke="#6f9bd0" stroke-width="0.90" vector-effect="non-scaling-stroke" fill="none" stroke-linecap="round" stroke-linejoin="round"/>
<path d="M0.42,0.3 L0.4,0.72" transform="translate(240.00,243.38) scale(6.662,9.255)" stroke="#6f9bd0" stroke-width="0.90" vector-effect="non-scaling-stroke" fill="none" stroke-linecap="round" stroke-linejoin="round"/>
<path d="M0.44,0.34 Q0.6,0.32 0.66,0.34 L0.64,0.6 Q0.52,0.6 0.44,0.62" transform="translate(240.00,243.38) scale(6.662,9.255)" stroke="#6f9bd0" stroke-width="0.90" vector-effect="non-scaling-stroke" fill="none" stroke-linecap="round" stroke-linejoin="round"/>
<path d="M0.12,0.04 Q0.22,0.1 0.2,0.18" transform="translate(248.81,243.63) scale(6.619,9.002)" stroke="#6f9bd0" stroke-width="0.90" vector-effect="non-scaling-stroke" fill="none" stroke-linecap="round" stroke-linejoin="round"/>
<path d="M0.06,0.34 Q0.16,0.38 0.16,0.46" transform="translate(248.81,243.63) scale(6.619,9.002)" stroke="#6f9bd0" stroke-width="0.90" vector-effect="non-scaling-stroke" fill="none" stroke-linecap="round" stroke-linejoin="round"/>
<path d="M0.0,0.98 Q0.1,0.8 0.22,0.56" transform="translate(248.81,243.63) scale(6.619,9.002)" stroke="#6f9bd0" stroke-width="0.90" vector-effect="non-scaling-stroke" fill="none" stroke-linecap="round" stroke-linejoin="round"/>
<path d="M0.5,0.02 Q0.44,0.16 0.34,0.3" transform="translate(248.81,243.63) scale(6.619,9.002)" stroke="#6f9bd0" stroke-width="0.90" vector-effect="non-scaling-stroke" fill="none" stroke-linecap="round" stroke-linejoin="round"/>
<path d="M0.4,0.18 Q0.66,0.16 0.92,0.12" transform="translate(248.81,243.63) scale(6.619,9.002)" stroke="#6f9bd0" stroke-width="0.90" vector-effect="non-scaling-stroke" fill="none" stroke-linecap="round" stroke-linejoin="round"/>
<path d="M0.42,0.34 Q0.38,0.6 0.3,0.84 Q0.6,0.8 0.84,0.8" transform="translate(248.81,243.63) scale(6.619,9.002)" stroke="#6f9bd0" stroke-width="0.90" vector-effect="non-scaling-stroke" fill="none" stroke-linecap="round" stroke-linejoin="round"/>
<path d="M0.42,0.34 Q0.7,0.32 0.86,0.34 Q0.82,0.7 0.78,0.98 Q0.7,0.92 0.66,0.86" transform="translate(248.81,243.63) scale(6.619,9.002)" stroke="#6f9bd0" stroke-width="0.90" vector-effect="non-scaling-stroke" fill="none" stroke-linecap="round" stroke-linejoin="round"/>
<path d="M0.22,0.6 Q0.6,0.55 1.0,0.52" transform="translate(248.81,243.63) scale(6.619,9.002)" stroke="#6f9bd0" stroke-width="0.90" vector-effect="non-scaling-stroke" fill="none" stroke-linecap="round" stroke-linejoin="round"/>
<path d="M0.56,0.42 L0.62,0.5" transform="translate(248.81,243.63) scale(6.619,9.002)" stroke="#6f9bd0" stroke-width="0.90" vector-effect="non-scaling-stroke" fill="none" stroke-linecap="round" stroke-linejoin="round"/>
<path d="M0.54,0.66 L0.6,0.74" transform="translate(248.81,243.63) scale(6.619,9.002)" stroke="#6f9bd0" stroke-width="0.90" vector-effect="non-scaling-stroke" fill="none" stroke-linecap="round" stroke-linejoin="round"/>
<path d="M0.0,0.36 Q0.5,0.3 0.98,0.26" transform="translate(257.43,244.90) scale(5.102,6.493)" stroke="#6f9bd0" stroke-width="0.90" vector-effect="non-scaling-stroke" fill="none" stroke-linecap="round" stroke-linejoin="round"/>
<path d="M0.5,0.0 Q0.52,0.3 0.42,0.55 Q0.3,0.82 0.02,1.0" transform="translate(257.43,244.90) scale(5.102,6.493)" stroke="#6f9bd0" stroke-width="0.90" vector-effect="non-scaling-stroke" fill="none" stroke-linecap="round" stroke-linejoin="round"/>
<path d="M0.5,0.45 Q0.7,0.75 1.0,0.98" transform="translate(257.43,244.90) scale(5.102,6.493)" stroke="#6f9bd0" stroke-width="0.90" vector-effect="non-scaling-stroke" fill="none" stroke-linecap="round" stroke-linejoin="round"/>
<path d="M0.22,0.04 L0.3,0.22" transform="translate(264.83,242.79) scale(5.397,9.845)" stroke="#6f9bd0" stroke-width="0.90" vector-effect="non-scaling-stroke" fill="none" stroke-linecap="round" stroke-linejoin="round"/>
<path d="M0.46,0.02 Q0.5,0.1 0.46,0.18" transform="translate(264.83,242.79) scale(5.397,9.845)" stroke="#6f9bd0" stroke-width="0.90" vector-effect="non-scaling-stroke" fill="none" stroke-linecap="round" stroke-linejoin="round"/>
<path d="M0.68,0.05 L0.6,0.2" transform="translate(264.83,242.79) scale(5.397,9.845)" stroke="#6f9bd0" stroke-width="0.90" vector-effect="non-scaling-stroke" fill="none" stroke-linecap="round" stroke-linejoin="round"/>
<path d="M0.86,0.02 Q0.84,0.14 0.76,0.24" transform="translate(264.83,242.79) scale(5.397,9.845)" stroke="#6f9bd0" stroke-width="0.90" vector-effect="non-scaling-stroke" fill="none" stroke-linecap="round" stroke-linejoin="round"/>
<path d="M0.1,0.32 Q0.5,0.28 0.95,0.26 L0.86,0.36" transform="translate(264.83,242.79) scale(5.397,9.845)" stroke="#6f9bd0" stroke-width="0.90" vector-effect="non-scaling-stroke" fill="none" stroke-linecap="round" stroke-linejoin="round"/>
<path d="M0.3,0.42 Q0.55,0.4 0.78,0.4 Q0.6,0.5 0.46,0.56" transform="translate(264.83,242.79) scale(5.397,9.845)" stroke="#6f9bd0" stroke-width="0.90" vector-effect="non-scaling-stroke" fill="none" stroke-linecap="round" stroke-linejoin="round"/>
<path d="M0.0,0.66 Q0.5,0.6 1.0,0.58" transform="translate(264.83,242.79) scale(5.397,9.845)" stroke="#6f9bd0" stroke-width="0.90" vector-effect="non-scaling-stroke" fill="none" stroke-linecap="round" stroke-linejoin="round"/>
<path d="M0.56,0.56 Q0.6,0.8 0.5,0.98 Q0.4,0.94 0.34,0.9" transform="translate(264.83,242.79) scale(5.397,9.845)" stroke="#6f9bd0" stroke-width="0.90" vector-effect="non-scaling-stroke" fill="none" stroke-linecap="round" stroke-linejoin="round"/>
<text x="231.8" y="290.8" font-size="8.5" fill="#2f5fa8" font-family="Liberation Serif" font-weight="bold" textLength="67.7" lengthAdjust="spacingAndGlyphs" >Short-term Course</text>
<text x="284.0" y="326.0" font-size="5.2" fill="#a0a0a0" font-family="Liberation Serif" text-anchor="middle" >B. S. Pani</text>
<text x="284.0" y="332.0" font-size="5.2" fill="#a0a0a0" font-family="Liberation Serif" text-anchor="middle" >Hohai University, Nanjing</text>
<text x="284.0" y="338.0" font-size="5.2" fill="#a0a0a0" font-family="Liberation Serif" text-anchor="middle" >October 2022</text>
</g>
<rect x="219.3" y="377.9" width="156.3" height="118.2" fill="none" rx="6.5" stroke="#c4531f" stroke-width="3.4" />
<rect x="221.2" y="379.8" width="151.9" height="114.4" fill="#ffffff" rx="2" />
<rect x="257.28412863070537" y="387.48954356846474" width="115.81587136929465" height="12.322178423236494" fill="#424242" />
<polygon points="221.20,385.16 257.28,385.16 265.48,393.60 257.28,402.10 221.20,402.10" fill="#0c72c7"/>
<polyline points="233.57,394.30 233.56,394.45 233.55,394.59 233.52,394.74 233.49,394.88 233.44,395.03 233.38,395.17 233.32,395.30 233.25,395.43 233.17,395.56 233.09,395.69 233.00,395.81 232.91,395.93 232.92,396.07 232.92,396.22 232.91,396.37 232.90,396.52 232.88,396.67 232.85,396.82 232.81,396.96 232.76,397.11 232.71,397.24 232.64,397.38 232.57,397.51 232.49,397.63 232.39,397.75 232.29,397.86 232.19,397.96 232.07,398.06 231.95,398.14 231.83,398.23 231.69,398.30 231.56,398.36 231.42,398.42 231.28,398.48 231.14,398.52 231.00,398.56 230.91,398.69 230.83,398.81 230.73,398.92 230.63,399.04 230.53,399.15 230.42,399.25 230.30,399.34 230.18,399.43 230.06,399.51 229.92,399.58 229.79,399.64 229.65,399.69 229.51,399.73 229.36,399.76 229.21,399.78 229.07,399.79 228.92,399.79 228.77,399.78 228.62,399.77 228.47,399.74 228.32,399.71 228.18,399.67 228.04,399.62 227.90,399.57 227.76,399.62 227.62,399.67 227.47,399.71 227.32,399.74 227.18,399.77 227.03,399.78 226.88,399.79 226.73,399.79 226.58,399.78 226.43,399.76 226.29,399.73 226.14,399.69 226.00,399.64 225.87,399.58 225.74,399.51 225.61,399.43 225.49,399.34 225.37,399.25 225.26,399.15 225.16,399.04 225.06,398.92 224.97,398.81 224.88,398.69 224.80,398.56 224.65,398.52 224.51,398.48 224.37,398.42 224.23,398.36 224.10,398.30 223.97,398.23 223.84,398.14 223.72,398.06 223.61,397.96 223.50,397.86 223.40,397.75 223.31,397.63 223.22,397.51 223.15,397.38 223.09,397.24 223.03,397.11 222.98,396.96 222.95,396.82 222.92,396.67 222.90,396.52 222.88,396.37 222.88,396.22 222.88,396.07 222.88,395.93 222.79,395.81 222.70,395.69 222.62,395.56 222.54,395.43 222.47,395.30 222.41,395.17 222.35,395.03 222.31,394.88 222.27,394.74 222.25,394.59 222.23,394.45 222.22,394.30 222.23,394.15 222.25,394.00 222.27,393.85 222.31,393.71 222.35,393.57 222.41,393.43 222.47,393.29 222.54,393.16 222.62,393.03 222.70,392.90 222.79,392.78 222.88,392.67 222.88,392.52 222.88,392.37 222.88,392.22 222.90,392.07 222.92,391.92 222.95,391.77 222.98,391.63 223.03,391.49 223.09,391.35 223.15,391.21 223.22,391.09 223.31,390.96 223.40,390.85 223.50,390.74 223.61,390.63 223.72,390.54 223.84,390.45 223.97,390.37 224.10,390.29 224.23,390.23 224.37,390.17 224.51,390.12 224.65,390.07 224.80,390.03 224.88,389.91 224.97,389.79 225.06,389.67 225.16,389.56 225.26,389.45 225.37,389.35 225.49,389.25 225.61,389.16 225.74,389.08 225.87,389.01 226.00,388.95 226.14,388.90 226.29,388.86 226.43,388.83 226.58,388.81 226.73,388.80 226.88,388.80 227.03,388.81 227.18,388.83 227.32,388.85 227.47,388.89 227.62,388.93 227.76,388.97 227.90,389.02 228.04,388.97 228.18,388.93 228.32,388.89 228.47,388.85 228.62,388.83 228.77,388.81 228.92,388.80 229.07,388.80 229.21,388.81 229.36,388.83 229.51,388.86 229.65,388.90 229.79,388.95 229.92,389.01 230.06,389.08 230.18,389.16 230.30,389.25 230.42,389.35 230.53,389.45 230.63,389.56 230.73,389.67 230.83,389.79 230.91,389.91 231.00,390.03 231.14,390.07 231.28,390.12 231.42,390.17 231.56,390.23 231.69,390.29 231.83,390.37 231.95,390.45 232.07,390.54 232.19,390.63 232.29,390.74 232.39,390.85 232.49,390.96 232.57,391.09 232.64,391.21 232.71,391.35 232.76,391.49 232.81,391.63 232.85,391.77 232.88,391.92 232.90,392.07 232.91,392.22 232.92,392.37 232.92,392.52 232.91,392.67 233.00,392.78 233.09,392.90 233.17,393.03 233.25,393.16 233.32,393.29 233.38,393.43 233.44,393.57 233.49,393.71 233.52,393.85 233.55,394.00 233.56,394.15 233.57,394.30" fill="none" stroke="#e9f2fb" stroke-width="0.7"/>
<polyline points="233.00,394.30 233.00,394.43 232.98,394.56 232.96,394.70 232.93,394.83 232.89,394.95 232.84,395.08 232.78,395.20 232.72,395.32 232.65,395.44 232.57,395.55 232.49,395.66 232.41,395.76 232.42,395.90 232.42,396.03 232.41,396.17 232.40,396.30 232.38,396.43 232.35,396.57 232.32,396.70 232.28,396.83 232.23,396.95 232.17,397.07 232.10,397.19 232.03,397.30 231.94,397.40 231.85,397.50 231.76,397.59 231.66,397.68 231.55,397.76 231.43,397.83 231.31,397.90 231.19,397.96 231.07,398.01 230.94,398.06 230.82,398.10 230.69,398.14 230.61,398.25 230.53,398.36 230.45,398.46 230.36,398.56 230.27,398.66 230.17,398.75 230.06,398.84 229.95,398.92 229.84,398.99 229.72,399.05 229.60,399.11 229.47,399.15 229.35,399.19 229.22,399.22 229.08,399.23 228.95,399.24 228.81,399.24 228.68,399.24 228.54,399.22 228.41,399.20 228.28,399.17 228.15,399.13 228.02,399.09 227.90,399.04 227.77,399.09 227.64,399.13 227.51,399.17 227.38,399.20 227.25,399.22 227.11,399.24 226.98,399.24 226.85,399.24 226.71,399.23 226.58,399.22 226.45,399.19 226.32,399.15 226.19,399.11 226.07,399.05 225.95,398.99 225.84,398.92 225.73,398.84 225.63,398.75 225.53,398.66 225.43,398.56 225.34,398.46 225.26,398.36 225.18,398.25 225.11,398.14 224.98,398.10 224.85,398.06 224.72,398.01 224.60,397.96 224.48,397.90 224.36,397.83 224.25,397.76 224.14,397.68 224.04,397.59 223.94,397.50 223.85,397.40 223.77,397.30 223.69,397.19 223.63,397.07 223.57,396.95 223.52,396.83 223.48,396.70 223.44,396.57 223.42,396.43 223.40,396.30 223.38,396.17 223.38,396.03 223.38,395.90 223.38,395.76 223.30,395.66 223.22,395.55 223.15,395.44 223.08,395.32 223.01,395.20 222.96,395.08 222.91,394.95 222.87,394.83 222.83,394.70 222.81,394.56 222.80,394.43 222.79,394.30 222.80,394.16 222.81,394.03 222.83,393.90 222.87,393.77 222.91,393.64 222.96,393.51 223.01,393.39 223.08,393.27 223.15,393.16 223.22,393.04 223.30,392.93 223.38,392.83 223.38,392.70 223.38,392.56 223.38,392.43 223.40,392.29 223.42,392.16 223.44,392.03 223.48,391.90 223.52,391.77 223.57,391.64 223.63,391.52 223.69,391.41 223.77,391.30 223.85,391.19 223.94,391.09 224.04,391.00 224.14,390.91 224.25,390.83 224.36,390.76 224.48,390.69 224.60,390.64 224.72,390.58 224.85,390.53 224.98,390.49 225.11,390.46 225.18,390.35 225.26,390.24 225.34,390.13 225.43,390.03 225.53,389.93 225.63,389.84 225.73,389.76 225.84,389.68 225.95,389.61 226.07,389.54 226.19,389.49 226.32,389.44 226.45,389.40 226.58,389.38 226.71,389.36 226.85,389.35 226.98,389.35 227.11,389.36 227.25,389.37 227.38,389.40 227.51,389.43 227.64,389.46 227.77,389.50 227.90,389.55 228.02,389.50 228.15,389.46 228.28,389.43 228.41,389.40 228.54,389.37 228.68,389.36 228.81,389.35 228.95,389.35 229.08,389.36 229.22,389.38 229.35,389.40 229.47,389.44 229.60,389.49 229.72,389.54 229.84,389.61 229.95,389.68 230.06,389.76 230.17,389.84 230.27,389.93 230.36,390.03 230.45,390.13 230.53,390.24 230.61,390.35 230.69,390.46 230.82,390.49 230.94,390.53 231.07,390.58 231.19,390.64 231.31,390.69 231.43,390.76 231.55,390.83 231.66,390.91 231.76,391.00 231.85,391.09 231.94,391.19 232.03,391.30 232.10,391.41 232.17,391.52 232.23,391.64 232.28,391.77 232.32,391.90 232.35,392.03 232.38,392.16 232.40,392.29 232.41,392.43 232.42,392.56 232.42,392.70 232.41,392.83 232.49,392.93 232.57,393.04 232.65,393.16 232.72,393.27 232.78,393.39 232.84,393.51 232.89,393.64 232.93,393.77 232.96,393.90 232.98,394.03 233.00,394.16 233.00,394.30" fill="none" stroke="#e9f2fb" stroke-width="0.42"/>
<circle cx="227.89683609958504" cy="394.2966804979253" r="2.8363070539419084" fill="none" stroke="#e9f2fb" stroke-width="0.7" />
<circle cx="227.89683609958504" cy="394.2966804979253" r="2.4392240663900413" fill="none" stroke="#e9f2fb" stroke-width="0.42" />
<line x1="231.03" y1="395.89" x2="231.69" y2="396.23" stroke="#e9f2fb" stroke-width="0.48999999999999994"/>
<line x1="230.85" y1="396.21" x2="231.46" y2="396.61" stroke="#e9f2fb" stroke-width="0.48999999999999994"/>
<line x1="230.63" y1="396.51" x2="231.20" y2="396.97" stroke="#e9f2fb" stroke-width="0.48999999999999994"/>
<line x1="230.38" y1="396.78" x2="230.91" y2="397.31" stroke="#e9f2fb" stroke-width="0.48999999999999994"/>
<line x1="230.11" y1="397.03" x2="230.57" y2="397.60" stroke="#e9f2fb" stroke-width="0.48999999999999994"/>
<line x1="229.81" y1="397.25" x2="230.21" y2="397.86" stroke="#e9f2fb" stroke-width="0.48999999999999994"/>
<line x1="229.49" y1="397.43" x2="229.83" y2="398.09" stroke="#e9f2fb" stroke-width="0.48999999999999994"/>
<line x1="229.16" y1="397.58" x2="229.42" y2="398.27" stroke="#e9f2fb" stroke-width="0.48999999999999994"/>
<line x1="228.81" y1="397.69" x2="229.00" y2="398.41" stroke="#e9f2fb" stroke-width="0.48999999999999994"/>
<line x1="228.45" y1="397.77" x2="228.56" y2="398.50" stroke="#e9f2fb" stroke-width="0.48999999999999994"/>
<line x1="228.08" y1="397.81" x2="228.12" y2="398.55" stroke="#e9f2fb" stroke-width="0.48999999999999994"/>
<line x1="227.71" y1="397.81" x2="227.67" y2="398.55" stroke="#e9f2fb" stroke-width="0.48999999999999994"/>
<line x1="227.35" y1="397.77" x2="227.23" y2="398.50" stroke="#e9f2fb" stroke-width="0.48999999999999994"/>
<line x1="226.99" y1="397.69" x2="226.80" y2="398.41" stroke="#e9f2fb" stroke-width="0.48999999999999994"/>
<line x1="226.64" y1="397.58" x2="226.37" y2="398.27" stroke="#e9f2fb" stroke-width="0.48999999999999994"/>
<line x1="226.30" y1="397.43" x2="225.97" y2="398.09" stroke="#e9f2fb" stroke-width="0.48999999999999994"/>
<line x1="225.98" y1="397.25" x2="225.58" y2="397.86" stroke="#e9f2fb" stroke-width="0.48999999999999994"/>
<line x1="225.68" y1="397.03" x2="225.22" y2="397.60" stroke="#e9f2fb" stroke-width="0.48999999999999994"/>
<line x1="225.41" y1="396.78" x2="224.89" y2="397.31" stroke="#e9f2fb" stroke-width="0.48999999999999994"/>
<line x1="225.16" y1="396.51" x2="224.59" y2="396.97" stroke="#e9f2fb" stroke-width="0.48999999999999994"/>
<line x1="224.95" y1="396.21" x2="224.33" y2="396.61" stroke="#e9f2fb" stroke-width="0.48999999999999994"/>
<line x1="224.76" y1="395.89" x2="224.11" y2="396.23" stroke="#e9f2fb" stroke-width="0.48999999999999994"/>
<path d="M224.32,391.58 l0.91,0.14 M224.78,391.58 l-0.14,0.91 M224.32,392.21 l0.91,0.23" stroke="#e9f2fb" stroke-width="0.48999999999999994" fill="none"/>
<path d="M226.25,390.17 l0.91,0.14 M226.70,390.17 l-0.14,0.91 M226.25,390.81 l0.91,0.23" stroke="#e9f2fb" stroke-width="0.48999999999999994" fill="none"/>
<path d="M228.64,390.17 l0.91,0.14 M229.09,390.17 l-0.14,0.91 M228.64,390.81 l0.91,0.23" stroke="#e9f2fb" stroke-width="0.48999999999999994" fill="none"/>
<path d="M230.56,391.58 l0.91,0.14 M231.02,391.58 l-0.14,0.91 M230.56,392.21 l0.91,0.23" stroke="#e9f2fb" stroke-width="0.48999999999999994" fill="none"/>
<path d="M225.97,393.62 q0.96,-0.45 1.93,0 t1.93,0" stroke="#e9f2fb" stroke-width="0.48999999999999994" fill="none"/>
<path d="M225.97,394.52 q0.96,-0.45 1.93,0 t1.93,0" stroke="#e9f2fb" stroke-width="0.48999999999999994" fill="none"/>
<path d="M225.97,395.43 q0.96,-0.45 1.93,0 t1.93,0" stroke="#e9f2fb" stroke-width="0.48999999999999994" fill="none"/>
<path d="M226.65,393.05 q1.25,-0.79 2.50,0" stroke="#e9f2fb" stroke-width="0.5599999999999999" fill="none"/>
<rect x="227.1" y="396.0" width="1.59" height="0.57" fill="#e9f2fb" />
<path d="M0.16,0.06 Q0.26,0.12 0.22,0.2" transform="translate(236.48,389.07) scale(4.979,6.917)" stroke="#e9f2fb" stroke-width="0.90" vector-effect="non-scaling-stroke" fill="none" stroke-linecap="round" stroke-linejoin="round"/>
<path d="M0.12,0.3 Q0.2,0.34 0.2,0.42" transform="translate(236.48,389.07) scale(4.979,6.917)" stroke="#e9f2fb" stroke-width="0.90" vector-effect="non-scaling-stroke" fill="none" stroke-linecap="round" stroke-linejoin="round"/>
<path d="M0.02,0.98 Q0.1,0.8 0.24,0.55" transform="translate(236.48,389.07) scale(4.979,6.917)" stroke="#e9f2fb" stroke-width="0.90" vector-effect="non-scaling-stroke" fill="none" stroke-linecap="round" stroke-linejoin="round"/>
<path d="M0.32,0.16 Q0.6,0.12 0.96,0.05" transform="translate(236.48,389.07) scale(4.979,6.917)" stroke="#e9f2fb" stroke-width="0.90" vector-effect="non-scaling-stroke" fill="none" stroke-linecap="round" stroke-linejoin="round"/>
<path d="M0.86,0.1 Q0.84,0.6 0.86,0.98 Q0.78,0.94 0.72,0.88" transform="translate(236.48,389.07) scale(4.979,6.917)" stroke="#e9f2fb" stroke-width="0.90" vector-effect="non-scaling-stroke" fill="none" stroke-linecap="round" stroke-linejoin="round"/>
<path d="M0.42,0.3 L0.4,0.72" transform="translate(236.48,389.07) scale(4.979,6.917)" stroke="#e9f2fb" stroke-width="0.90" vector-effect="non-scaling-stroke" fill="none" stroke-linecap="round" stroke-linejoin="round"/>
<path d="M0.44,0.34 Q0.6,0.32 0.66,0.34 L0.64,0.6 Q0.52,0.6 0.44,0.62" transform="translate(236.48,389.07) scale(4.979,6.917)" stroke="#e9f2fb" stroke-width="0.90" vector-effect="non-scaling-stroke" fill="none" stroke-linecap="round" stroke-linejoin="round"/>
<path d="M0.12,0.04 Q0.22,0.1 0.2,0.18" transform="translate(243.07,389.25) scale(4.948,6.728)" stroke="#e9f2fb" stroke-width="0.90" vector-effect="non-scaling-stroke" fill="none" stroke-linecap="round" stroke-linejoin="round"/>
<path d="M0.06,0.34 Q0.16,0.38 0.16,0.46" transform="translate(243.07,389.25) scale(4.948,6.728)" stroke="#e9f2fb" stroke-width="0.90" vector-effect="non-scaling-stroke" fill="none" stroke-linecap="round" stroke-linejoin="round"/>
<path d="M0.0,0.98 Q0.1,0.8 0.22,0.56" transform="translate(243.07,389.25) scale(4.948,6.728)" stroke="#e9f2fb" stroke-width="0.90" vector-effect="non-scaling-stroke" fill="none" stroke-linecap="round" stroke-linejoin="round"/>
<path d="M0.5,0.02 Q0.44,0.16 0.34,0.3" transform="translate(243.07,389.25) scale(4.948,6.728)" stroke="#e9f2fb" stroke-width="0.90" vector-effect="non-scaling-stroke" fill="none" stroke-linecap="round" stroke-linejoin="round"/>
<path d="M0.4,0.18 Q0.66,0.16 0.92,0.12" transform="translate(243.07,389.25) scale(4.948,6.728)" stroke="#e9f2fb" stroke-width="0.90" vector-effect="non-scaling-stroke" fill="none" stroke-linecap="round" stroke-linejoin="round"/>
<path d="M0.42,0.34 Q0.38,0.6 0.3,0.84 Q0.6,0.8 0.84,0.8" transform="translate(243.07,389.25) scale(4.948,6.728)" stroke="#e9f2fb" stroke-width="0.90" vector-effect="non-scaling-stroke" fill="none" stroke-linecap="round" stroke-linejoin="round"/>
<path d="M0.42,0.34 Q0.7,0.32 0.86,0.34 Q0.82,0.7 0.78,0.98 Q0.7,0.92 0.66,0.86" transform="translate(243.07,389.25) scale(4.948,6.728)" stroke="#e9f2fb" stroke-width="0.90" vector-effect="non-scaling-stroke" fill="none" stroke-linecap="round" stroke-linejoin="round"/>
<path d="M0.22,0.6 Q0.6,0.55 1.0,0.52" transform="translate(243.07,389.25) scale(4.948,6.728)" stroke="#e9f2fb" stroke-width="0.90" vector-effect="non-scaling-stroke" fill="none" stroke-linecap="round" stroke-linejoin="round"/>
<path d="M0.56,0.42 L0.62,0.5" transform="translate(243.07,389.25) scale(4.948,6.728)" stroke="#e9f2fb" stroke-width="0.90" vector-effect="non-scaling-stroke" fill="none" stroke-linecap="round" stroke-linejoin="round"/>
<path d="M0.54,0.66 L0.6,0.74" transform="translate(243.07,389.25) scale(4.948,6.728)" stroke="#e9f2fb" stroke-width="0.90" vector-effect="non-scaling-stroke" fill="none" stroke-linecap="round" stroke-linejoin="round"/>
<path d="M0.0,0.36 Q0.5,0.3 0.98,0.26" transform="translate(249.52,390.20) scale(3.813,4.853)" stroke="#e9f2fb" stroke-width="0.90" vector-effect="non-scaling-stroke" fill="none" stroke-linecap="round" stroke-linejoin="round"/>
<path d="M0.5,0.0 Q0.52,0.3 0.42,0.55 Q0.3,0.82 0.02,1.0" transform="translate(249.52,390.20) scale(3.813,4.853)" stroke="#e9f2fb" stroke-width="0.90" vector-effect="non-scaling-stroke" fill="none" stroke-linecap="round" stroke-linejoin="round"/>
<path d="M0.5,0.45 Q0.7,0.75 1.0,0.98" transform="translate(249.52,390.20) scale(3.813,4.853)" stroke="#e9f2fb" stroke-width="0.90" vector-effect="non-scaling-stroke" fill="none" stroke-linecap="round" stroke-linejoin="round"/>
<path d="M0.22,0.04 L0.3,0.22" transform="translate(255.05,388.62) scale(4.034,7.359)" stroke="#e9f2fb" stroke-width="0.90" vector-effect="non-scaling-stroke" fill="none" stroke-linecap="round" stroke-linejoin="round"/>
<path d="M0.46,0.02 Q0.5,0.1 0.46,0.18" transform="translate(255.05,388.62) scale(4.034,7.359)" stroke="#e9f2fb" stroke-width="0.90" vector-effect="non-scaling-stroke" fill="none" stroke-linecap="round" stroke-linejoin="round"/>
<path d="M0.68,0.05 L0.6,0.2" transform="translate(255.05,388.62) scale(4.034,7.359)" stroke="#e9f2fb" stroke-width="0.90" vector-effect="non-scaling-stroke" fill="none" stroke-linecap="round" stroke-linejoin="round"/>
<path d="M0.86,0.02 Q0.84,0.14 0.76,0.24" transform="translate(255.05,388.62) scale(4.034,7.359)" stroke="#e9f2fb" stroke-width="0.90" vector-effect="non-scaling-stroke" fill="none" stroke-linecap="round" stroke-linejoin="round"/>
<path d="M0.1,0.32 Q0.5,0.28 0.95,0.26 L0.86,0.36" transform="translate(255.05,388.62) scale(4.034,7.359)" stroke="#e9f2fb" stroke-width="0.90" vector-effect="non-scaling-stroke" fill="none" stroke-linecap="round" stroke-linejoin="round"/>
<path d="M0.3,0.42 Q0.55,0.4 0.78,0.4 Q0.6,0.5 0.46,0.56" transform="translate(255.05,388.62) scale(4.034,7.359)" stroke="#e9f2fb" stroke-width="0.90" vector-effect="non-scaling-stroke" fill="none" stroke-linecap="round" stroke-linejoin="round"/>
<path d="M0.0,0.66 Q0.5,0.6 1.0,0.58" transform="translate(255.05,388.62) scale(4.034,7.359)" stroke="#e9f2fb" stroke-width="0.90" vector-effect="non-scaling-stroke" fill="none" stroke-linecap="round" stroke-linejoin="round"/>
<path d="M0.56,0.56 Q0.6,0.8 0.5,0.98 Q0.4,0.94 0.34,0.9" transform="translate(255.05,388.62) scale(4.034,7.359)" stroke="#e9f2fb" stroke-width="0.90" vector-effect="non-scaling-stroke" fill="none" stroke-linecap="round" stroke-linejoin="round"/>
<text x="270.2" y="396.7" font-size="7" fill="#fff" font-weight="bold" textLength="26.5" lengthAdjust="spacingAndGlyphs" >Contents</text>
<text x="231.7" y="431.6" font-size="5.9" fill="#222" font-family="Liberation Serif" font-weight="bold" textLength="38.0" lengthAdjust="spacingAndGlyphs" >1.Introduction</text>
<text x="270.0" y="431.6" font-size="5.9" fill="#9a9a9a" font-family="Liberation Serif" textLength="58.6" lengthAdjust="spacingAndGlyphs" > : Fluid Mechanics Basics</text>
<text x="231.7" y="442.2" font-size="5.9" fill="#222" font-family="Liberation Serif" font-weight="bold" textLength="98.7" lengthAdjust="spacingAndGlyphs" >2. Dimensional analysis and model laws</text>
<text x="231.7" y="453.3" font-size="5.9" fill="#222" font-family="Liberation Serif" font-weight="bold" textLength="61.0" lengthAdjust="spacingAndGlyphs" >3.Boundary layer theory</text>
<text x="231.7" y="463.9" font-size="5.9" fill="#222" font-family="Liberation Serif" font-weight="bold" textLength="39.7" lengthAdjust="spacingAndGlyphs" >4.Turbulent jets</text>
<defs><radialGradient id="fogt" cx="85%" cy="90%" r="60%"><stop offset="0" stop-color="#555"/><stop offset="0.35" stop-color="#999" stop-opacity="0.8"/><stop offset="1" stop-color="#fff" stop-opacity="0"/></radialGradient></defs>
<defs><clipPath id="t2"><rect x="221.2" y="379.8" width="151.9" height="114.4"/></clipPath><filter id="tb"><feGaussianBlur stdDeviation="3"/></filter></defs>
<g clip-path="url(#t2)"><g filter="url(#tb)"><ellipse cx="370" cy="490" rx="18" ry="14" fill="#888"/><ellipse cx="345" cy="496" rx="30" ry="8" fill="#ccc"/></g></g>
<rect x="220.9" y="519.7" width="153.2" height="115.6" fill="#d4d4d4" rx="5" />
<rect x="221.4" y="520.2" width="152.2" height="114.6" fill="#ffffff" rx="4.5" />
<text x="234.1" y="534.7" font-size="8.3" fill="#333" textLength="70.6" lengthAdjust="spacingAndGlyphs" >Properties of Fluids</text>
<circle cx="234.5" cy="554.5" r="0.7" fill="#666" />
<text x="237.5" y="556.0" font-size="4.6" fill="#8a8a8a" textLength="114.5" lengthAdjust="spacingAndGlyphs" >Solids:Shear stress is proportional to strain, τ ∞</text>
<text x="237.5" y="562.0" font-size="4.6" fill="#8a8a8a" textLength="34.5" lengthAdjust="spacingAndGlyphs" >γ  Hooke’s law</text>
<circle cx="234.5" cy="569.5" r="0.7" fill="#666" />
<text x="237.5" y="571.0" font-size="4.6" fill="#8a8a8a" textLength="121.5" lengthAdjust="spacingAndGlyphs" >Fluids: Shear stress is proportional to rate of strain,</text>
<text x="237.5" y="578.0" font-size="4.6" fill="#8a8a8a" textLength="18.5" lengthAdjust="spacingAndGlyphs" >τ ∞ dγ/dt</text>
<circle cx="234.5" cy="588.5" r="0.7" fill="#666" />
<text x="237.5" y="590.0" font-size="4.6" fill="#8a8a8a" textLength="120.5" lengthAdjust="spacingAndGlyphs" >Newton’s law of viscosity, τ ∞ du/dy (i.e. τ = μ du/dy)</text>
<rect x="220.9" y="659.7" width="153.2" height="115" fill="#d4d4d4" rx="5" />
<rect x="221.4" y="660.2" width="152.2" height="114" fill="#ffffff" rx="4.5" />
<defs><clipPath id="t4"><rect x="221.4" y="660.2" width="152.2" height="114" rx="4.5"/></clipPath></defs>
<g clip-path="url(#t4)">
<rect x="259.6" y="668.3" width="114" height="11.6" fill="#424242" />
<polygon points="221.4,666 259.6,666 264.2,674.4 259.6,682.8 221.4,682.8" fill="#0c72c7"/>
<polyline points="233.30,674.20 233.29,674.35 233.28,674.49 233.25,674.64 233.22,674.78 233.17,674.92 233.12,675.06 233.06,675.19 232.99,675.32 232.91,675.45 232.83,675.57 232.74,675.69 232.65,675.81 232.66,675.96 232.66,676.10 232.65,676.25 232.64,676.40 232.62,676.54 232.59,676.69 232.55,676.83 232.50,676.97 232.45,677.11 232.39,677.24 232.31,677.37 232.23,677.49 232.14,677.61 232.04,677.72 231.94,677.82 231.82,677.91 231.70,678.00 231.58,678.08 231.45,678.15 231.32,678.22 231.18,678.27 231.04,678.33 230.90,678.37 230.76,678.41 230.68,678.53 230.59,678.65 230.50,678.77 230.40,678.88 230.30,678.99 230.19,679.09 230.08,679.18 229.96,679.27 229.83,679.35 229.70,679.42 229.57,679.48 229.43,679.53 229.29,679.57 229.15,679.60 229.00,679.62 228.85,679.63 228.71,679.63 228.56,679.62 228.41,679.60 228.26,679.57 228.12,679.54 227.98,679.50 227.84,679.46 227.70,679.41 227.56,679.46 227.42,679.50 227.28,679.54 227.14,679.57 226.99,679.60 226.84,679.62 226.69,679.63 226.55,679.63 226.40,679.62 226.25,679.60 226.11,679.57 225.97,679.53 225.83,679.48 225.70,679.42 225.57,679.35 225.44,679.27 225.32,679.18 225.21,679.09 225.10,678.99 225.00,678.88 224.90,678.77 224.81,678.65 224.72,678.53 224.64,678.41 224.50,678.37 224.36,678.33 224.22,678.27 224.08,678.22 223.95,678.15 223.82,678.08 223.70,678.00 223.58,677.91 223.46,677.82 223.36,677.72 223.26,677.61 223.17,677.49 223.09,677.37 223.01,677.24 222.95,677.11 222.90,676.97 222.85,676.83 222.81,676.69 222.78,676.54 222.76,676.40 222.75,676.25 222.74,676.10 222.74,675.96 222.75,675.81 222.66,675.69 222.57,675.57 222.49,675.45 222.41,675.32 222.34,675.19 222.28,675.06 222.23,674.92 222.18,674.78 222.15,674.64 222.12,674.49 222.11,674.35 222.10,674.20 222.11,674.05 222.12,673.91 222.15,673.76 222.18,673.62 222.23,673.48 222.28,673.34 222.34,673.21 222.41,673.08 222.49,672.95 222.57,672.83 222.66,672.71 222.75,672.59 222.74,672.44 222.74,672.30 222.75,672.15 222.76,672.00 222.78,671.86 222.81,671.71 222.85,671.57 222.90,671.43 222.95,671.29 223.01,671.16 223.09,671.03 223.17,670.91 223.26,670.79 223.36,670.68 223.46,670.58 223.58,670.49 223.70,670.40 223.82,670.32 223.95,670.25 224.08,670.18 224.22,670.13 224.36,670.07 224.50,670.03 224.64,669.99 224.72,669.87 224.81,669.75 224.90,669.63 225.00,669.52 225.10,669.41 225.21,669.31 225.32,669.22 225.44,669.13 225.57,669.05 225.70,668.98 225.83,668.92 225.97,668.87 226.11,668.83 226.25,668.80 226.40,668.78 226.55,668.77 226.69,668.77 226.84,668.78 226.99,668.80 227.14,668.83 227.28,668.86 227.42,668.90 227.56,668.94 227.70,668.99 227.84,668.94 227.98,668.90 228.12,668.86 228.26,668.83 228.41,668.80 228.56,668.78 228.71,668.77 228.85,668.77 229.00,668.78 229.15,668.80 229.29,668.83 229.43,668.87 229.57,668.92 229.70,668.98 229.83,669.05 229.96,669.13 230.08,669.22 230.19,669.31 230.30,669.41 230.40,669.52 230.50,669.63 230.59,669.75 230.68,669.87 230.76,669.99 230.90,670.03 231.04,670.07 231.18,670.13 231.32,670.18 231.45,670.25 231.58,670.32 231.70,670.40 231.82,670.49 231.94,670.58 232.04,670.68 232.14,670.79 232.23,670.91 232.31,671.03 232.39,671.16 232.45,671.29 232.50,671.43 232.55,671.57 232.59,671.71 232.62,671.86 232.64,672.00 232.65,672.15 232.66,672.30 232.66,672.44 232.65,672.59 232.74,672.71 232.83,672.83 232.91,672.95 232.99,673.08 233.06,673.21 233.12,673.34 233.17,673.48 233.22,673.62 233.25,673.76 233.28,673.91 233.29,674.05 233.30,674.20" fill="none" stroke="#e9f2fb" stroke-width="0.55"/>
<polyline points="232.74,674.20 232.74,674.33 232.72,674.46 232.70,674.59 232.67,674.72 232.62,674.85 232.58,674.97 232.52,675.09 232.46,675.21 232.39,675.33 232.32,675.44 232.24,675.54 232.16,675.65 232.16,675.78 232.16,675.91 232.16,676.05 232.14,676.18 232.12,676.31 232.10,676.44 232.07,676.57 232.02,676.70 231.97,676.82 231.92,676.94 231.85,677.05 231.78,677.16 231.70,677.27 231.61,677.36 231.51,677.46 231.41,677.54 231.30,677.62 231.19,677.69 231.07,677.76 230.95,677.81 230.83,677.87 230.71,677.91 230.58,677.96 230.46,677.99 230.38,678.10 230.30,678.21 230.22,678.31 230.13,678.41 230.04,678.51 229.94,678.60 229.84,678.68 229.73,678.76 229.62,678.83 229.50,678.89 229.38,678.95 229.26,678.99 229.13,679.03 229.00,679.06 228.87,679.07 228.74,679.08 228.61,679.08 228.47,679.08 228.34,679.06 228.21,679.04 228.08,679.01 227.95,678.97 227.82,678.93 227.70,678.89 227.58,678.93 227.45,678.97 227.32,679.01 227.19,679.04 227.06,679.06 226.93,679.08 226.79,679.08 226.66,679.08 226.53,679.07 226.40,679.06 226.27,679.03 226.14,678.99 226.02,678.95 225.90,678.89 225.78,678.83 225.67,678.76 225.56,678.68 225.46,678.60 225.36,678.51 225.27,678.41 225.18,678.31 225.10,678.21 225.02,678.10 224.94,677.99 224.82,677.96 224.69,677.91 224.57,677.87 224.45,677.81 224.33,677.76 224.21,677.69 224.10,677.62 223.99,677.54 223.89,677.46 223.79,677.36 223.70,677.27 223.62,677.16 223.55,677.05 223.48,676.94 223.43,676.82 223.38,676.70 223.33,676.57 223.30,676.44 223.28,676.31 223.26,676.18 223.24,676.05 223.24,675.91 223.24,675.78 223.24,675.65 223.16,675.54 223.08,675.44 223.01,675.33 222.94,675.21 222.88,675.09 222.82,674.97 222.78,674.85 222.73,674.72 222.70,674.59 222.68,674.46 222.66,674.33 222.66,674.20 222.66,674.07 222.68,673.94 222.70,673.81 222.73,673.68 222.78,673.55 222.82,673.43 222.88,673.31 222.94,673.19 223.01,673.07 223.08,672.96 223.16,672.86 223.24,672.75 223.24,672.62 223.24,672.49 223.24,672.35 223.26,672.22 223.28,672.09 223.30,671.96 223.33,671.83 223.38,671.70 223.43,671.58 223.48,671.46 223.55,671.35 223.62,671.24 223.70,671.13 223.79,671.04 223.89,670.94 223.99,670.86 224.10,670.78 224.21,670.71 224.33,670.64 224.45,670.59 224.57,670.53 224.69,670.49 224.82,670.44 224.94,670.41 225.02,670.30 225.10,670.19 225.18,670.09 225.27,669.99 225.36,669.89 225.46,669.80 225.56,669.72 225.67,669.64 225.78,669.57 225.90,669.51 226.02,669.45 226.14,669.41 226.27,669.37 226.40,669.34 226.53,669.33 226.66,669.32 226.79,669.32 226.93,669.32 227.06,669.34 227.19,669.36 227.32,669.39 227.45,669.43 227.58,669.47 227.70,669.51 227.82,669.47 227.95,669.43 228.08,669.39 228.21,669.36 228.34,669.34 228.47,669.32 228.61,669.32 228.74,669.32 228.87,669.33 229.00,669.34 229.13,669.37 229.26,669.41 229.38,669.45 229.50,669.51 229.62,669.57 229.73,669.64 229.84,669.72 229.94,669.80 230.04,669.89 230.13,669.99 230.22,670.09 230.30,670.19 230.38,670.30 230.46,670.41 230.58,670.44 230.71,670.49 230.83,670.53 230.95,670.59 231.07,670.64 231.19,670.71 231.30,670.78 231.41,670.86 231.51,670.94 231.61,671.04 231.70,671.13 231.78,671.24 231.85,671.35 231.92,671.46 231.97,671.58 232.02,671.70 232.07,671.83 232.10,671.96 232.12,672.09 232.14,672.22 232.16,672.35 232.16,672.49 232.16,672.62 232.16,672.75 232.24,672.86 232.32,672.96 232.39,673.07 232.46,673.19 232.52,673.31 232.58,673.43 232.62,673.55 232.67,673.68 232.70,673.81 232.72,673.94 232.74,674.07 232.74,674.20" fill="none" stroke="#e9f2fb" stroke-width="0.33"/>
<circle cx="227.7" cy="674.2" r="2.8" fill="none" stroke="#e9f2fb" stroke-width="0.55" />
<circle cx="227.7" cy="674.2" r="2.408" fill="none" stroke="#e9f2fb" stroke-width="0.33" />
<line x1="230.79" y1="675.78" x2="231.44" y2="676.11" stroke="#e9f2fb" stroke-width="0.385"/>
<line x1="230.61" y1="676.09" x2="231.22" y2="676.49" stroke="#e9f2fb" stroke-width="0.385"/>
<line x1="230.40" y1="676.39" x2="230.96" y2="676.84" stroke="#e9f2fb" stroke-width="0.385"/>
<line x1="230.16" y1="676.66" x2="230.67" y2="677.17" stroke="#e9f2fb" stroke-width="0.385"/>
<line x1="229.89" y1="676.90" x2="230.34" y2="677.46" stroke="#e9f2fb" stroke-width="0.385"/>
<line x1="229.59" y1="677.11" x2="229.99" y2="677.72" stroke="#e9f2fb" stroke-width="0.385"/>
<line x1="229.28" y1="677.29" x2="229.61" y2="677.94" stroke="#e9f2fb" stroke-width="0.385"/>
<line x1="228.94" y1="677.44" x2="229.21" y2="678.12" stroke="#e9f2fb" stroke-width="0.385"/>
<line x1="228.60" y1="677.55" x2="228.79" y2="678.26" stroke="#e9f2fb" stroke-width="0.385"/>
<line x1="228.24" y1="677.63" x2="228.36" y2="678.35" stroke="#e9f2fb" stroke-width="0.385"/>
<line x1="227.88" y1="677.67" x2="227.92" y2="678.39" stroke="#e9f2fb" stroke-width="0.385"/>
<line x1="227.52" y1="677.67" x2="227.48" y2="678.39" stroke="#e9f2fb" stroke-width="0.385"/>
<line x1="227.16" y1="677.63" x2="227.04" y2="678.35" stroke="#e9f2fb" stroke-width="0.385"/>
<line x1="226.80" y1="677.55" x2="226.61" y2="678.26" stroke="#e9f2fb" stroke-width="0.385"/>
<line x1="226.46" y1="677.44" x2="226.19" y2="678.12" stroke="#e9f2fb" stroke-width="0.385"/>
<line x1="226.12" y1="677.29" x2="225.79" y2="677.94" stroke="#e9f2fb" stroke-width="0.385"/>
<line x1="225.81" y1="677.11" x2="225.41" y2="677.72" stroke="#e9f2fb" stroke-width="0.385"/>
<line x1="225.51" y1="676.90" x2="225.06" y2="677.46" stroke="#e9f2fb" stroke-width="0.385"/>
<line x1="225.24" y1="676.66" x2="224.73" y2="677.17" stroke="#e9f2fb" stroke-width="0.385"/>
<line x1="225.00" y1="676.39" x2="224.44" y2="676.84" stroke="#e9f2fb" stroke-width="0.385"/>
<line x1="224.79" y1="676.09" x2="224.18" y2="676.49" stroke="#e9f2fb" stroke-width="0.385"/>
<line x1="224.61" y1="675.78" x2="223.96" y2="676.11" stroke="#e9f2fb" stroke-width="0.385"/>
<path d="M224.17,671.51 l0.90,0.13 M224.62,671.51 l-0.13,0.90 M224.17,672.14 l0.90,0.22" stroke="#e9f2fb" stroke-width="0.385" fill="none"/>
<path d="M226.08,670.13 l0.90,0.13 M226.52,670.13 l-0.13,0.90 M226.08,670.76 l0.90,0.22" stroke="#e9f2fb" stroke-width="0.385" fill="none"/>
<path d="M228.43,670.13 l0.90,0.13 M228.88,670.13 l-0.13,0.90 M228.43,670.76 l0.90,0.22" stroke="#e9f2fb" stroke-width="0.385" fill="none"/>
<path d="M230.33,671.51 l0.90,0.13 M230.78,671.51 l-0.13,0.90 M230.33,672.14 l0.90,0.22" stroke="#e9f2fb" stroke-width="0.385" fill="none"/>
<path d="M225.80,673.53 q0.95,-0.45 1.90,0 t1.90,0" stroke="#e9f2fb" stroke-width="0.385" fill="none"/>
<path d="M225.80,674.42 q0.95,-0.45 1.90,0 t1.90,0" stroke="#e9f2fb" stroke-width="0.385" fill="none"/>
<path d="M225.80,675.32 q0.95,-0.45 1.90,0 t1.90,0" stroke="#e9f2fb" stroke-width="0.385" fill="none"/>
<path d="M226.47,672.97 q1.23,-0.78 2.46,0" stroke="#e9f2fb" stroke-width="0.44000000000000006" fill="none"/>
<rect x="226.92" y="675.88" width="1.57" height="0.56" fill="#e9f2fb" />
<path d="M0.16,0.06 Q0.26,0.12 0.22,0.2" transform="translate(236.40,668.79) scale(5.082,7.060)" stroke="#e9f2fb" stroke-width="0.80" vector-effect="non-scaling-stroke" fill="none" stroke-linecap="round" stroke-linejoin="round"/>
<path d="M0.12,0.3 Q0.2,0.34 0.2,0.42" transform="translate(236.40,668.79) scale(5.082,7.060)" stroke="#e9f2fb" stroke-width="0.80" vector-effect="non-scaling-stroke" fill="none" stroke-linecap="round" stroke-linejoin="round"/>
<path d="M0.02,0.98 Q0.1,0.8 0.24,0.55" transform="translate(236.40,668.79) scale(5.082,7.060)" stroke="#e9f2fb" stroke-width="0.80" vector-effect="non-scaling-stroke" fill="none" stroke-linecap="round" stroke-linejoin="round"/>
<path d="M0.32,0.16 Q0.6,0.12 0.96,0.05" transform="translate(236.40,668.79) scale(5.082,7.060)" stroke="#e9f2fb" stroke-width="0.80" vector-effect="non-scaling-stroke" fill="none" stroke-linecap="round" stroke-linejoin="round"/>
<path d="M0.86,0.1 Q0.84,0.6 0.86,0.98 Q0.78,0.94 0.72,0.88" transform="translate(236.40,668.79) scale(5.082,7.060)" stroke="#e9f2fb" stroke-width="0.80" vector-effect="non-scaling-stroke" fill="none" stroke-linecap="round" stroke-linejoin="round"/>
<path d="M0.42,0.3 L0.4,0.72" transform="translate(236.40,668.79) scale(5.082,7.060)" stroke="#e9f2fb" stroke-width="0.80" vector-effect="non-scaling-stroke" fill="none" stroke-linecap="round" stroke-linejoin="round"/>
<path d="M0.44,0.34 Q0.6,0.32 0.66,0.34 L0.64,0.6 Q0.52,0.6 0.44,0.62" transform="translate(236.40,668.79) scale(5.082,7.060)" stroke="#e9f2fb" stroke-width="0.80" vector-effect="non-scaling-stroke" fill="none" stroke-linecap="round" stroke-linejoin="round"/>
<path d="M0.12,0.04 Q0.22,0.1 0.2,0.18" transform="translate(243.12,668.98) scale(5.049,6.867)" stroke="#e9f2fb" stroke-width="0.80" vector-effect="non-scaling-stroke" fill="none" stroke-linecap="round" stroke-linejoin="round"/>
<path d="M0.06,0.34 Q0.16,0.38 0.16,0.46" transform="translate(243.12,668.98) scale(5.049,6.867)" stroke="#e9f2fb" stroke-width="0.80" vector-effect="non-scaling-stroke" fill="none" stroke-linecap="round" stroke-linejoin="round"/>
<path d="M0.0,0.98 Q0.1,0.8 0.22,0.56" transform="translate(243.12,668.98) scale(5.049,6.867)" stroke="#e9f2fb" stroke-width="0.80" vector-effect="non-scaling-stroke" fill="none" stroke-linecap="round" stroke-linejoin="round"/>
<path d="M0.5,0.02 Q0.44,0.16 0.34,0.3" transform="translate(243.12,668.98) scale(5.049,6.867)" stroke="#e9f2fb" stroke-width="0.80" vector-effect="non-scaling-stroke" fill="none" stroke-linecap="round" stroke-linejoin="round"/>
<path d="M0.4,0.18 Q0.66,0.16 0.92,0.12" transform="translate(243.12,668.98) scale(5.049,6.867)" stroke="#e9f2fb" stroke-width="0.80" vector-effect="non-scaling-stroke" fill="none" stroke-linecap="round" stroke-linejoin="round"/>
<path d="M0.42,0.34 Q0.38,0.6 0.3,0.84 Q0.6,0.8 0.84,0.8" transform="translate(243.12,668.98) scale(5.049,6.867)" stroke="#e9f2fb" stroke-width="0.80" vector-effect="non-scaling-stroke" fill="none" stroke-linecap="round" stroke-linejoin="round"/>
<path d="M0.42,0.34 Q0.7,0.32 0.86,0.34 Q0.82,0.7 0.78,0.98 Q0.7,0.92 0.66,0.86" transform="translate(243.12,668.98) scale(5.049,6.867)" stroke="#e9f2fb" stroke-width="0.80" vector-effect="non-scaling-stroke" fill="none" stroke-linecap="round" stroke-linejoin="round"/>
<path d="M0.22,0.6 Q0.6,0.55 1.0,0.52" transform="translate(243.12,668.98) scale(5.049,6.867)" stroke="#e9f2fb" stroke-width="0.80" vector-effect="non-scaling-stroke" fill="none" stroke-linecap="round" stroke-linejoin="round"/>
<path d="M0.56,0.42 L0.62,0.5" transform="translate(243.12,668.98) scale(5.049,6.867)" stroke="#e9f2fb" stroke-width="0.80" vector-effect="non-scaling-stroke" fill="none" stroke-linecap="round" stroke-linejoin="round"/>
<path d="M0.54,0.66 L0.6,0.74" transform="translate(243.12,668.98) scale(5.049,6.867)" stroke="#e9f2fb" stroke-width="0.80" vector-effect="non-scaling-stroke" fill="none" stroke-linecap="round" stroke-linejoin="round"/>
<path d="M0.0,0.36 Q0.5,0.3 0.98,0.26" transform="translate(249.70,669.95) scale(3.892,4.953)" stroke="#e9f2fb" stroke-width="0.80" vector-effect="non-scaling-stroke" fill="none" stroke-linecap="round" stroke-linejoin="round"/>
<path d="M0.5,0.0 Q0.52,0.3 0.42,0.55 Q0.3,0.82 0.02,1.0" transform="translate(249.70,669.95) scale(3.892,4.953)" stroke="#e9f2fb" stroke-width="0.80" vector-effect="non-scaling-stroke" fill="none" stroke-linecap="round" stroke-linejoin="round"/>
<path d="M0.5,0.45 Q0.7,0.75 1.0,0.98" transform="translate(249.70,669.95) scale(3.892,4.953)" stroke="#e9f2fb" stroke-width="0.80" vector-effect="non-scaling-stroke" fill="none" stroke-linecap="round" stroke-linejoin="round"/>
<path d="M0.22,0.04 L0.3,0.22" transform="translate(255.34,668.34) scale(4.117,7.510)" stroke="#e9f2fb" stroke-width="0.80" vector-effect="non-scaling-stroke" fill="none" stroke-linecap="round" stroke-linejoin="round"/>
<path d="M0.46,0.02 Q0.5,0.1 0.46,0.18" transform="translate(255.34,668.34) scale(4.117,7.510)" stroke="#e9f2fb" stroke-width="0.80" vector-effect="non-scaling-stroke" fill="none" stroke-linecap="round" stroke-linejoin="round"/>
<path d="M0.68,0.05 L0.6,0.2" transform="translate(255.34,668.34) scale(4.117,7.510)" stroke="#e9f2fb" stroke-width="0.80" vector-effect="non-scaling-stroke" fill="none" stroke-linecap="round" stroke-linejoin="round"/>
<path d="M0.86,0.02 Q0.84,0.14 0.76,0.24" transform="translate(255.34,668.34) scale(4.117,7.510)" stroke="#e9f2fb" stroke-width="0.80" vector-effect="non-scaling-stroke" fill="none" stroke-linecap="round" stroke-linejoin="round"/>
<path d="M0.1,0.32 Q0.5,0.28 0.95,0.26 L0.86,0.36" transform="translate(255.34,668.34) scale(4.117,7.510)" stroke="#e9f2fb" stroke-width="0.80" vector-effect="non-scaling-stroke" fill="none" stroke-linecap="round" stroke-linejoin="round"/>
<path d="M0.3,0.42 Q0.55,0.4 0.78,0.4 Q0.6,0.5 0.46,0.56" transform="translate(255.34,668.34) scale(4.117,7.510)" stroke="#e9f2fb" stroke-width="0.80" vector-effect="non-scaling-stroke" fill="none" stroke-linecap="round" stroke-linejoin="round"/>
<path d="M0.0,0.66 Q0.5,0.6 1.0,0.58" transform="translate(255.34,668.34) scale(4.117,7.510)" stroke="#e9f2fb" stroke-width="0.80" vector-effect="non-scaling-stroke" fill="none" stroke-linecap="round" stroke-linejoin="round"/>
<path d="M0.56,0.56 Q0.6,0.8 0.5,0.98 Q0.4,0.94 0.34,0.9" transform="translate(255.34,668.34) scale(4.117,7.510)" stroke="#e9f2fb" stroke-width="0.80" vector-effect="non-scaling-stroke" fill="none" stroke-linecap="round" stroke-linejoin="round"/>
<text x="270.3" y="676.4" font-size="6.8" fill="#fff" font-weight="bold" textLength="39.6" lengthAdjust="spacingAndGlyphs" >Rate of strain</text>
<path d="M245.7,698.5 L245.7,738.3 L289,738.3 M245.7,716.3 L271.1,716.3 L271.1,738.3" stroke="#999" stroke-width="0.6" fill="none" />
<path d="M242,716.3 L242,738.3" stroke="#888" stroke-width="0.5" fill="none" />
<path d="M296,698.4 L296,738.3 L342.3,738.3 M296,738.3 L305,716.3 L323,716.3 L315,738.3 M315,716.3 L323,738.3" stroke="#999" stroke-width="0.6" fill="none" />
<path d="M323,716.3 L331,716.3 L322,738.3" stroke="#999" stroke-width="0.6" fill="none" />
<rect x="254" y="711.5" width="8" height="1.2" fill="#b5b5b5" />
<rect x="311" y="709" width="10" height="1.2" fill="#b5b5b5" />
<rect x="332" y="707" width="12" height="1.2" fill="#b5b5b5" />
<rect x="332" y="719" width="10" height="1.2" fill="#b5b5b5" />
<rect x="332" y="728" width="15" height="1.2" fill="#b5b5b5" />
<rect x="297" y="706" width="3" height="1.2" fill="#b5b5b5" />
<rect x="271.7" y="753.5" width="54" height="1.2" fill="#c2c2c2" />
<rect x="271.7" y="758" width="22" height="1.2" fill="#c2c2c2" />
<g filter="url(#tb)"><ellipse cx="370" cy="770" rx="18" ry="15" fill="#888"/><ellipse cx="343" cy="777" rx="32" ry="9" fill="#ccc"/></g>
</g>
<rect x="220.5" y="799.8" width="153.4" height="115" fill="#d4d4d4" rx="5" />
<rect x="221" y="800.3" width="152.4" height="114" fill="#ffffff" rx="4.5" />
<text x="233.6" y="820.8" font-size="8.3" fill="#333" textLength="75.7" lengthAdjust="spacingAndGlyphs" >Real and Ideal Fluids</text>
<circle cx="234.7" cy="834.5" r="0.7" fill="#555" />
<text x="237.5" y="836.0" font-size="4.8" fill="#7a7a7a" textLength="114.5" lengthAdjust="spacingAndGlyphs" >Ideal Fluids : Incompressible, have zero viscosity</text>
<text x="237.5" y="842.3" font-size="4.8" fill="#7a7a7a" textLength="112.5" lengthAdjust="spacingAndGlyphs" >(can produce no shar stress), Hypothetical fluid</text>
<circle cx="234.7" cy="850.0" r="0.7" fill="#555" />
<text x="237.5" y="851.5" font-size="4.8" fill="#7a7a7a" textLength="114.5" lengthAdjust="spacingAndGlyphs" >Real Fluids: May be compressible, have viscosity</text>
<text x="237.5" y="857.8" font-size="4.8" fill="#7a7a7a" textLength="58.5" lengthAdjust="spacingAndGlyphs" >however small it may be</text>
<circle cx="234.7" cy="864.0" r="0.7" fill="#555" />
<text x="237.5" y="865.5" font-size="4.8" fill="#7a7a7a" textLength="77.5" lengthAdjust="spacingAndGlyphs" >All fluids in nature are real fluids</text>
<circle cx="234.7" cy="872.5" r="0.7" fill="#555" />
<text x="237.5" y="874.0" font-size="4.8" fill="#7a7a7a" textLength="122.5" lengthAdjust="spacingAndGlyphs" >Thin fluids (like air and water) obey Newtons law of</text>
<text x="237.5" y="880.5" font-size="4.8" fill="#7a7a7a" textLength="105.5" lengthAdjust="spacingAndGlyphs" >viscosity and are known as Newtonian fluids</text>
</g>
<defs><clipPath id="slideclip"><rect x="586" y="216" width="964" height="598"/></clipPath><radialGradient id="fogm" cx="0.5" cy="0.5" r="0.5"><stop offset="0" stop-color="#dfe3ea"/><stop offset="1" stop-color="#ffffff" stop-opacity="0"/></radialGradient></defs>
<g clip-path="url(#slideclip)">
<rect x="586" y="191" width="964" height="723" fill="#ffffff" />
<defs><linearGradient id="fogl" x1="1430" y1="740" x2="1500" y2="860" gradientUnits="userSpaceOnUse"><stop offset="0" stop-color="#f4f5f8" stop-opacity="0"/><stop offset="0.45" stop-color="#eef0f5"/><stop offset="1" stop-color="#dde3ec"/></linearGradient><filter id="blur2"><feGaussianBlur stdDeviation="2"/></filter><filter id="blur1"><feGaussianBlur stdDeviation="0.8"/></filter></defs>
<polygon points="1280,820 1560,672 1560,820" fill="url(#fogl)" filter="url(#blur2)"/>
<polygon points="1150,820 1320,785 1450,800 1450,820" fill="#f3f3f2" filter="url(#blur2)" opacity="0.6"/>
<g filter="url(#blur1)"><path d="M1447,816 Q1447,803 1453,797 Q1455,788 1466,786 Q1470,777 1482,779 Q1490,773 1499,778 Q1508,776 1515,783 Q1519,790 1517,796 Q1526,802 1530,816 Z" fill="#b3b3b3"/><path d="M1543,816 L1544,790 Q1546,765 1549,745 L1552,745 L1552,816 Z" fill="#b0b0b0"/><circle cx="1468.6" cy="801.5" r="3.8" fill="#aaaaaa"/><circle cx="1487.0" cy="800.5" r="4.6" fill="#bdbdbd"/><circle cx="1470.2" cy="791.0" r="6.0" fill="#bdbdbd"/><circle cx="1492.2" cy="799.4" r="3.9" fill="#b4b4b4"/><circle cx="1468.1" cy="789.2" r="5.7" fill="#bdbdbd"/><circle cx="1507.8" cy="805.0" r="2.7" fill="#aaaaaa"/><circle cx="1453.3" cy="811.2" r="5.4" fill="#9a9a9a"/><circle cx="1486.9" cy="805.6" r="5.6" fill="#bdbdbd"/><circle cx="1480.8" cy="808.8" r="4.1" fill="#b4b4b4"/><circle cx="1518.6" cy="790.9" r="3.0" fill="#b4b4b4"/><circle cx="1470.1" cy="805.3" r="5.2" fill="#9a9a9a"/><circle cx="1482.8" cy="809.9" r="4.5" fill="#aaaaaa"/><circle cx="1495.6" cy="800.8" r="5.7" fill="#a5a5a5"/><circle cx="1516.8" cy="815.7" r="4.8" fill="#b4b4b4"/><circle cx="1504.5" cy="792.7" r="4.4" fill="#aaaaaa"/><circle cx="1494.4" cy="805.5" r="3.2" fill="#aaaaaa"/><circle cx="1470.8" cy="787.2" r="4.2" fill="#bdbdbd"/><circle cx="1456.9" cy="811.1" r="3.9" fill="#b4b4b4"/><circle cx="1451.6" cy="804.3" r="4.0" fill="#a5a5a5"/><circle cx="1453.4" cy="807.5" r="2.7" fill="#aaaaaa"/><circle cx="1475.8" cy="811.9" r="5.9" fill="#aaaaaa"/><circle cx="1468.4" cy="785.4" r="2.5" fill="#a5a5a5"/><circle cx="1496.8" cy="780.7" r="3.2" fill="#bdbdbd"/><circle cx="1472.7" cy="791.2" r="4.9" fill="#9a9a9a"/><circle cx="1474.5" cy="814.6" r="5.6" fill="#bdbdbd"/><circle cx="1479.4" cy="811.4" r="3.9" fill="#aaaaaa"/><circle cx="1503.1" cy="784.5" r="5.9" fill="#aaaaaa"/><circle cx="1471.2" cy="803.9" r="5.0" fill="#9a9a9a"/><circle cx="1484.1" cy="788.8" r="3.6" fill="#9a9a9a"/><circle cx="1450.9" cy="804.4" r="4.5" fill="#a5a5a5"/><circle cx="1479.4" cy="801.3" r="3.0" fill="#9a9a9a"/><circle cx="1486.4" cy="804.2" r="3.7" fill="#9a9a9a"/><circle cx="1507.6" cy="783.2" r="2.7" fill="#a5a5a5"/><circle cx="1525.1" cy="798.7" r="4.1" fill="#aaaaaa"/><circle cx="1496.9" cy="786.0" r="3.1" fill="#9a9a9a"/><circle cx="1515.8" cy="794.3" r="5.3" fill="#a5a5a5"/><circle cx="1510.2" cy="784.5" r="4.5" fill="#b4b4b4"/><circle cx="1474.2" cy="789.4" r="5.3" fill="#b4b4b4"/><circle cx="1475.6" cy="804.8" r="4.8" fill="#a5a5a5"/><circle cx="1457.9" cy="798.8" r="3.7" fill="#b4b4b4"/><circle cx="1484.2" cy="810.7" r="3.1" fill="#9a9a9a"/><circle cx="1507.9" cy="789.9" r="4.5" fill="#9a9a9a"/><circle cx="1467.6" cy="788.5" r="4.4" fill="#b4b4b4"/><circle cx="1474.6" cy="810.4" r="4.5" fill="#9a9a9a"/><circle cx="1476.5" cy="810.0" r="2.8" fill="#aaaaaa"/><circle cx="1476.9" cy="785.5" r="3.5" fill="#9a9a9a"/><circle cx="1486.2" cy="802.5" r="3.5" fill="#aaaaaa"/><circle cx="1481.9" cy="813.1" r="3.0" fill="#a5a5a5"/><circle cx="1487.2" cy="809.8" r="4.7" fill="#aaaaaa"/><circle cx="1483.9" cy="814.2" r="5.7" fill="#b4b4b4"/><circle cx="1452.5" cy="804.5" r="5.1" fill="#aaaaaa"/><circle cx="1525.1" cy="805.5" r="5.6" fill="#a5a5a5"/><circle cx="1516.9" cy="815.2" r="2.9" fill="#b4b4b4"/><circle cx="1453.5" cy="813.9" r="4.9" fill="#b4b4b4"/><circle cx="1519.9" cy="813.3" r="4.5" fill="#a5a5a5"/><circle cx="1487.5" cy="783.5" r="4.3" fill="#b4b4b4"/><circle cx="1501.7" cy="799.2" r="3.9" fill="#aaaaaa"/><circle cx="1458.9" cy="793.2" r="5.9" fill="#aaaaaa"/><circle cx="1487.2" cy="808.0" r="3.7" fill="#b4b4b4"/><circle cx="1459.5" cy="813.0" r="2.9" fill="#b4b4b4"/><circle cx="1511.8" cy="813.5" r="5.3" fill="#a5a5a5"/><circle cx="1488.0" cy="800.1" r="3.9" fill="#9a9a9a"/><circle cx="1469.4" cy="803.7" r="4.3" fill="#a5a5a5"/><circle cx="1486.9" cy="807.8" r="2.5" fill="#a5a5a5"/><circle cx="1510.5" cy="785.2" r="2.7" fill="#bdbdbd"/><circle cx="1526.0" cy="812.7" r="2.8" fill="#aaaaaa"/><circle cx="1488.2" cy="784.8" r="2.8" fill="#bdbdbd"/><circle cx="1500.5" cy="801.2" r="3.8" fill="#b4b4b4"/><circle cx="1527.1" cy="803.7" r="2.9" fill="#a5a5a5"/><circle cx="1505.9" cy="794.8" r="2.8" fill="#b4b4b4"/><circle cx="1543.4" cy="776.8" r="2.8" fill="#a8a8a8"/><circle cx="1547.9" cy="788.9" r="1.6" fill="#a8a8a8"/><circle cx="1551.0" cy="748.7" r="2.8" fill="#a8a8a8"/><circle cx="1549.8" cy="766.7" r="3.4" fill="#a8a8a8"/><circle cx="1546.8" cy="746.2" r="1.9" fill="#a8a8a8"/><circle cx="1545.4" cy="785.7" r="3.1" fill="#a8a8a8"/><circle cx="1545.0" cy="754.0" r="1.6" fill="#a8a8a8"/><circle cx="1545.9" cy="811.8" r="2.6" fill="#a8a8a8"/><circle cx="1550.8" cy="753.4" r="2.9" fill="#a8a8a8"/><circle cx="1551.5" cy="795.5" r="3.2" fill="#a8a8a8"/><circle cx="1547.8" cy="771.0" r="1.7" fill="#a8a8a8"/><circle cx="1545.9" cy="781.7" r="3.1" fill="#a8a8a8"/><circle cx="1549.4" cy="777.7" r="2.0" fill="#a8a8a8"/><circle cx="1546.5" cy="781.4" r="2.6" fill="#a8a8a8"/><circle cx="1548.9" cy="770.9" r="3.1" fill="#a8a8a8"/><circle cx="1546.1" cy="803.8" r="1.6" fill="#a8a8a8"/><circle cx="1544.0" cy="778.3" r="2.9" fill="#a8a8a8"/><circle cx="1545.6" cy="765.7" r="1.7" fill="#a8a8a8"/></g>
<rect x="815.0" y="239.8" width="735.0" height="78.19999999999999" fill="#424242" />
<polygon points="586.00,225.00 815.00,225.00 867.00,278.60 815.00,332.50 586.00,332.50" fill="#0c72c7"/>
<polyline points="665.80,283.00 665.77,283.97 665.66,284.93 665.49,285.89 665.25,286.83 664.95,287.76 664.60,288.67 664.18,289.56 663.72,290.42 663.22,291.26 662.69,292.08 662.12,292.87 661.53,293.63 661.55,294.60 661.55,295.57 661.51,296.55 661.42,297.52 661.28,298.49 661.09,299.45 660.85,300.40 660.54,301.33 660.18,302.23 659.76,303.10 659.27,303.94 658.73,304.75 658.14,305.51 657.49,306.23 656.79,306.90 656.04,307.53 655.25,308.10 654.43,308.63 653.57,309.10 652.69,309.53 651.79,309.92 650.88,310.26 649.95,310.57 649.03,310.84 648.48,311.64 647.91,312.42 647.30,313.18 646.65,313.92 645.97,314.63 645.25,315.29 644.50,315.91 643.71,316.48 642.88,317.00 642.03,317.46 641.14,317.86 640.23,318.19 639.30,318.46 638.35,318.65 637.39,318.79 636.42,318.85 635.45,318.85 634.47,318.80 633.50,318.68 632.53,318.51 631.58,318.29 630.64,318.03 629.71,317.74 628.80,317.41 627.89,317.74 626.96,318.03 626.02,318.29 625.07,318.51 624.10,318.68 623.13,318.80 622.15,318.85 621.18,318.85 620.21,318.79 619.25,318.65 618.30,318.46 617.37,318.19 616.46,317.86 615.57,317.46 614.72,317.00 613.89,316.48 613.10,315.91 612.35,315.29 611.63,314.63 610.95,313.92 610.30,313.18 609.69,312.42 609.12,311.64 608.57,310.84 607.65,310.57 606.72,310.26 605.81,309.92 604.91,309.53 604.03,309.10 603.17,308.63 602.35,308.10 601.56,307.53 600.81,306.90 600.11,306.23 599.46,305.51 598.87,304.75 598.33,303.94 597.84,303.10 597.42,302.23 597.06,301.33 596.75,300.40 596.51,299.45 596.32,298.49 596.18,297.52 596.09,296.55 596.05,295.57 596.05,294.60 596.07,293.63 595.48,292.87 594.91,292.08 594.38,291.26 593.88,290.42 593.42,289.56 593.00,288.67 592.65,287.76 592.35,286.83 592.11,285.89 591.94,284.93 591.83,283.97 591.80,283.00 591.83,282.03 591.94,281.07 592.11,280.11 592.35,279.17 592.65,278.24 593.00,277.33 593.42,276.44 593.88,275.58 594.38,274.74 594.91,273.92 595.48,273.13 596.07,272.37 596.05,271.40 596.05,270.43 596.09,269.45 596.18,268.48 596.32,267.51 596.51,266.55 596.75,265.60 597.06,264.67 597.42,263.77 597.84,262.90 598.33,262.06 598.87,261.25 599.46,260.49 600.11,259.77 600.81,259.10 601.56,258.47 602.35,257.90 603.17,257.37 604.03,256.90 604.91,256.47 605.81,256.08 606.72,255.74 607.65,255.43 608.57,255.16 609.12,254.36 609.69,253.58 610.30,252.82 610.95,252.08 611.63,251.37 612.35,250.71 613.10,250.09 613.89,249.52 614.72,249.00 615.57,248.54 616.46,248.14 617.37,247.81 618.30,247.54 619.25,247.35 620.21,247.21 621.18,247.15 622.15,247.15 623.13,247.20 624.10,247.32 625.07,247.49 626.02,247.71 626.96,247.97 627.89,248.26 628.80,248.59 629.71,248.26 630.64,247.97 631.58,247.71 632.53,247.49 633.50,247.32 634.47,247.20 635.45,247.15 636.42,247.15 637.39,247.21 638.35,247.35 639.30,247.54 640.23,247.81 641.14,248.14 642.03,248.54 642.88,249.00 643.71,249.52 644.50,250.09 645.25,250.71 645.97,251.37 646.65,252.08 647.30,252.82 647.91,253.58 648.48,254.36 649.03,255.16 649.95,255.43 650.88,255.74 651.79,256.08 652.69,256.47 653.57,256.90 654.43,257.37 655.25,257.90 656.04,258.47 656.79,259.10 657.49,259.77 658.14,260.49 658.73,261.25 659.27,262.06 659.76,262.90 660.18,263.77 660.54,264.67 660.85,265.60 661.09,266.55 661.28,267.51 661.42,268.48 661.51,269.45 661.55,270.43 661.55,271.40 661.53,272.37 662.12,273.13 662.69,273.92 663.22,274.74 663.72,275.58 664.18,276.44 664.60,277.33 664.95,278.24 665.25,279.17 665.49,280.11 665.66,281.07 665.77,282.03 665.80,283.00" fill="none" stroke="#ffffff" stroke-width="1.2"/>
<polyline points="662.10,283.00 662.07,283.87 661.98,284.74 661.82,285.60 661.61,286.45 661.34,287.28 661.02,288.10 660.65,288.90 660.23,289.68 659.78,290.44 659.30,291.17 658.79,291.88 658.25,292.57 658.28,293.44 658.28,294.31 658.24,295.19 658.16,296.07 658.03,296.94 657.86,297.81 657.64,298.66 657.37,299.49 657.04,300.31 656.66,301.09 656.23,301.85 655.74,302.57 655.20,303.26 654.62,303.91 653.99,304.51 653.31,305.07 652.61,305.59 651.86,306.06 651.09,306.49 650.30,306.88 649.49,307.23 648.67,307.54 647.84,307.81 647.00,308.05 646.51,308.77 646.00,309.48 645.45,310.17 644.87,310.83 644.25,311.46 643.61,312.06 642.93,312.62 642.22,313.14 641.48,313.60 640.71,314.01 639.91,314.37 639.09,314.67 638.25,314.91 637.40,315.09 636.53,315.21 635.66,315.27 634.78,315.27 633.90,315.22 633.03,315.11 632.16,314.96 631.30,314.76 630.45,314.53 629.62,314.26 628.80,313.97 627.98,314.26 627.15,314.53 626.30,314.76 625.44,314.96 624.57,315.11 623.70,315.22 622.82,315.27 621.94,315.27 621.07,315.21 620.20,315.09 619.35,314.91 618.51,314.67 617.69,314.37 616.89,314.01 616.12,313.60 615.38,313.14 614.67,312.62 613.99,312.06 613.35,311.46 612.73,310.83 612.15,310.17 611.60,309.48 611.09,308.77 610.60,308.05 609.76,307.81 608.93,307.54 608.11,307.23 607.30,306.88 606.51,306.49 605.74,306.06 604.99,305.59 604.29,305.07 603.61,304.51 602.98,303.91 602.40,303.26 601.86,302.57 601.37,301.85 600.94,301.09 600.56,300.31 600.23,299.49 599.96,298.66 599.74,297.81 599.57,296.94 599.44,296.07 599.36,295.19 599.32,294.31 599.32,293.44 599.35,292.57 598.81,291.88 598.30,291.17 597.82,290.44 597.37,289.68 596.95,288.90 596.58,288.10 596.26,287.28 595.99,286.45 595.78,285.60 595.62,284.74 595.53,283.87 595.50,283.00 595.53,282.13 595.62,281.26 595.78,280.40 595.99,279.55 596.26,278.72 596.58,277.90 596.95,277.10 597.37,276.32 597.82,275.56 598.30,274.83 598.81,274.12 599.35,273.43 599.32,272.56 599.32,271.69 599.36,270.81 599.44,269.93 599.57,269.06 599.74,268.19 599.96,267.34 600.23,266.51 600.56,265.69 600.94,264.91 601.37,264.15 601.86,263.43 602.40,262.74 602.98,262.09 603.61,261.49 604.29,260.93 604.99,260.41 605.74,259.94 606.51,259.51 607.30,259.12 608.11,258.77 608.93,258.46 609.76,258.19 610.60,257.95 611.09,257.23 611.60,256.52 612.15,255.83 612.73,255.17 613.35,254.54 613.99,253.94 614.67,253.38 615.38,252.86 616.12,252.40 616.89,251.99 617.69,251.63 618.51,251.33 619.35,251.09 620.20,250.91 621.07,250.79 621.94,250.73 622.82,250.73 623.70,250.78 624.57,250.89 625.44,251.04 626.30,251.24 627.15,251.47 627.98,251.74 628.80,252.03 629.62,251.74 630.45,251.47 631.30,251.24 632.16,251.04 633.03,250.89 633.90,250.78 634.78,250.73 635.66,250.73 636.53,250.79 637.40,250.91 638.25,251.09 639.09,251.33 639.91,251.63 640.71,251.99 641.48,252.40 642.22,252.86 642.93,253.38 643.61,253.94 644.25,254.54 644.87,255.17 645.45,255.83 646.00,256.52 646.51,257.23 647.00,257.95 647.84,258.19 648.67,258.46 649.49,258.77 650.30,259.12 651.09,259.51 651.86,259.94 652.61,260.41 653.31,260.93 653.99,261.49 654.62,262.09 655.20,262.74 655.74,263.43 656.23,264.15 656.66,264.91 657.04,265.69 657.37,266.51 657.64,267.34 657.86,268.19 658.03,269.06 658.16,269.93 658.24,270.81 658.28,271.69 658.28,272.56 658.25,273.43 658.79,274.12 659.30,274.83 659.78,275.56 660.23,276.32 660.65,277.10 661.02,277.90 661.34,278.72 661.61,279.55 661.82,280.40 661.98,281.26 662.07,282.13 662.10,283.00" fill="none" stroke="#ffffff" stroke-width="0.72"/>
<circle cx="628.8" cy="283" r="18.5" fill="none" stroke="#ffffff" stroke-width="1.2" />
<circle cx="628.8" cy="283" r="15.91" fill="none" stroke="#ffffff" stroke-width="0.72" />
<line x1="649.24" y1="293.41" x2="653.53" y2="295.60" stroke="#ffffff" stroke-width="0.84"/>
<line x1="648.04" y1="295.49" x2="652.07" y2="298.11" stroke="#ffffff" stroke-width="0.84"/>
<line x1="646.63" y1="297.44" x2="650.37" y2="300.46" stroke="#ffffff" stroke-width="0.84"/>
<line x1="645.02" y1="299.22" x2="648.42" y2="302.62" stroke="#ffffff" stroke-width="0.84"/>
<line x1="643.24" y1="300.83" x2="646.26" y2="304.57" stroke="#ffffff" stroke-width="0.84"/>
<line x1="641.29" y1="302.24" x2="643.91" y2="306.27" stroke="#ffffff" stroke-width="0.84"/>
<line x1="639.21" y1="303.44" x2="641.40" y2="307.73" stroke="#ffffff" stroke-width="0.84"/>
<line x1="637.02" y1="304.42" x2="638.74" y2="308.91" stroke="#ffffff" stroke-width="0.84"/>
<line x1="634.74" y1="305.16" x2="635.98" y2="309.80" stroke="#ffffff" stroke-width="0.84"/>
<line x1="632.39" y1="305.66" x2="633.14" y2="310.41" stroke="#ffffff" stroke-width="0.84"/>
<line x1="630.00" y1="305.91" x2="630.25" y2="310.71" stroke="#ffffff" stroke-width="0.84"/>
<line x1="627.60" y1="305.91" x2="627.35" y2="310.71" stroke="#ffffff" stroke-width="0.84"/>
<line x1="625.21" y1="305.66" x2="624.46" y2="310.41" stroke="#ffffff" stroke-width="0.84"/>
<line x1="622.86" y1="305.16" x2="621.62" y2="309.80" stroke="#ffffff" stroke-width="0.84"/>
<line x1="620.58" y1="304.42" x2="618.86" y2="308.91" stroke="#ffffff" stroke-width="0.84"/>
<line x1="618.39" y1="303.44" x2="616.20" y2="307.73" stroke="#ffffff" stroke-width="0.84"/>
<line x1="616.31" y1="302.24" x2="613.69" y2="306.27" stroke="#ffffff" stroke-width="0.84"/>
<line x1="614.36" y1="300.83" x2="611.34" y2="304.57" stroke="#ffffff" stroke-width="0.84"/>
<line x1="612.58" y1="299.22" x2="609.18" y2="302.62" stroke="#ffffff" stroke-width="0.84"/>
<line x1="610.97" y1="297.44" x2="607.23" y2="300.46" stroke="#ffffff" stroke-width="0.84"/>
<line x1="609.56" y1="295.49" x2="605.53" y2="298.11" stroke="#ffffff" stroke-width="0.84"/>
<line x1="608.36" y1="293.41" x2="604.07" y2="295.60" stroke="#ffffff" stroke-width="0.84"/>
<path d="M605.49,265.25 l5.92,0.89 M608.45,265.25 l-0.89,5.92 M605.49,269.40 l5.92,1.48" stroke="#ffffff" stroke-width="0.84" fill="none"/>
<path d="M618.07,256.11 l5.92,0.89 M621.03,256.11 l-0.89,5.92 M618.07,260.26 l5.92,1.48" stroke="#ffffff" stroke-width="0.84" fill="none"/>
<path d="M633.61,256.11 l5.92,0.89 M636.57,256.11 l-0.89,5.92 M633.61,260.26 l5.92,1.48" stroke="#ffffff" stroke-width="0.84" fill="none"/>
<path d="M646.19,265.25 l5.92,0.89 M649.15,265.25 l-0.89,5.92 M646.19,269.40 l5.92,1.48" stroke="#ffffff" stroke-width="0.84" fill="none"/>
<path d="M616.22,278.56 q6.29,-2.96 12.58,0 t12.58,0" stroke="#ffffff" stroke-width="0.84" fill="none"/>
<path d="M616.22,284.48 q6.29,-2.96 12.58,0 t12.58,0" stroke="#ffffff" stroke-width="0.84" fill="none"/>
<path d="M616.22,290.40 q6.29,-2.96 12.58,0 t12.58,0" stroke="#ffffff" stroke-width="0.84" fill="none"/>
<path d="M620.66,274.86 q8.14,-5.18 16.28,0" stroke="#ffffff" stroke-width="0.96" fill="none"/>
<rect x="623.62" y="294.1" width="10.36" height="3.7" fill="#ffffff" />
<path d="M0.16,0.06 Q0.26,0.12 0.22,0.2" transform="translate(683.00,249.80) scale(31.600,43.900)" stroke="#ffffff" stroke-width="3.00" vector-effect="non-scaling-stroke" fill="none" stroke-linecap="round" stroke-linejoin="round"/>
<path d="M0.12,0.3 Q0.2,0.34 0.2,0.42" transform="translate(683.00,249.80) scale(31.600,43.900)" stroke="#ffffff" stroke-width="3.00" vector-effect="non-scaling-stroke" fill="none" stroke-linecap="round" stroke-linejoin="round"/>
<path d="M0.02,0.98 Q0.1,0.8 0.24,0.55" transform="translate(683.00,249.80) scale(31.600,43.900)" stroke="#ffffff" stroke-width="3.00" vector-effect="non-scaling-stroke" fill="none" stroke-linecap="round" stroke-linejoin="round"/>
<path d="M0.32,0.16 Q0.6,0.12 0.96,0.05" transform="translate(683.00,249.80) scale(31.600,43.900)" stroke="#ffffff" stroke-width="3.00" vector-effect="non-scaling-stroke" fill="none" stroke-linecap="round" stroke-linejoin="round"/>
<path d="M0.86,0.1 Q0.84,0.6 0.86,0.98 Q0.78,0.94 0.72,0.88" transform="translate(683.00,249.80) scale(31.600,43.900)" stroke="#ffffff" stroke-width="3.00" vector-effect="non-scaling-stroke" fill="none" stroke-linecap="round" stroke-linejoin="round"/>
<path d="M0.42,0.3 L0.4,0.72" transform="translate(683.00,249.80) scale(31.600,43.900)" stroke="#ffffff" stroke-width="3.00" vector-effect="non-scaling-stroke" fill="none" stroke-linecap="round" stroke-linejoin="round"/>
<path d="M0.44,0.34 Q0.6,0.32 0.66,0.34 L0.64,0.6 Q0.52,0.6 0.44,0.62" transform="translate(683.00,249.80) scale(31.600,43.900)" stroke="#ffffff" stroke-width="3.00" vector-effect="non-scaling-stroke" fill="none" stroke-linecap="round" stroke-linejoin="round"/>
<path d="M0.12,0.04 Q0.22,0.1 0.2,0.18" transform="translate(724.80,251.00) scale(31.400,42.700)" stroke="#ffffff" stroke-width="3.00" vector-effect="non-scaling-stroke" fill="none" stroke-linecap="round" stroke-linejoin="round"/>
<path d="M0.06,0.34 Q0.16,0.38 0.16,0.46" transform="translate(724.80,251.00) scale(31.400,42.700)" stroke="#ffffff" stroke-width="3.00" vector-effect="non-scaling-stroke" fill="none" stroke-linecap="round" stroke-linejoin="round"/>
<path d="M0.0,0.98 Q0.1,0.8 0.22,0.56" transform="translate(724.80,251.00) scale(31.400,42.700)" stroke="#ffffff" stroke-width="3.00" vector-effect="non-scaling-stroke" fill="none" stroke-linecap="round" stroke-linejoin="round"/>
<path d="M0.5,0.02 Q0.44,0.16 0.34,0.3" transform="translate(724.80,251.00) scale(31.400,42.700)" stroke="#ffffff" stroke-width="3.00" vector-effect="non-scaling-stroke" fill="none" stroke-linecap="round" stroke-linejoin="round"/>
<path d="M0.4,0.18 Q0.66,0.16 0.92,0.12" transform="translate(724.80,251.00) scale(31.400,42.700)" stroke="#ffffff" stroke-width="3.00" vector-effect="non-scaling-stroke" fill="none" stroke-linecap="round" stroke-linejoin="round"/>
<path d="M0.42,0.34 Q0.38,0.6 0.3,0.84 Q0.6,0.8 0.84,0.8" transform="translate(724.80,251.00) scale(31.400,42.700)" stroke="#ffffff" stroke-width="3.00" vector-effect="non-scaling-stroke" fill="none" stroke-linecap="round" stroke-linejoin="round"/>
<path d="M0.42,0.34 Q0.7,0.32 0.86,0.34 Q0.82,0.7 0.78,0.98 Q0.7,0.92 0.66,0.86" transform="translate(724.80,251.00) scale(31.400,42.700)" stroke="#ffffff" stroke-width="3.00" vector-effect="non-scaling-stroke" fill="none" stroke-linecap="round" stroke-linejoin="round"/>
<path d="M0.22,0.6 Q0.6,0.55 1.0,0.52" transform="translate(724.80,251.00) scale(31.400,42.700)" stroke="#ffffff" stroke-width="3.00" vector-effect="non-scaling-stroke" fill="none" stroke-linecap="round" stroke-linejoin="round"/>
<path d="M0.56,0.42 L0.62,0.5" transform="translate(724.80,251.00) scale(31.400,42.700)" stroke="#ffffff" stroke-width="3.00" vector-effect="non-scaling-stroke" fill="none" stroke-linecap="round" stroke-linejoin="round"/>
<path d="M0.54,0.66 L0.6,0.74" transform="translate(724.80,251.00) scale(31.400,42.700)" stroke="#ffffff" stroke-width="3.00" vector-effect="non-scaling-stroke" fill="none" stroke-linecap="round" stroke-linejoin="round"/>
<path d="M0.0,0.36 Q0.5,0.3 0.98,0.26" transform="translate(765.70,257.00) scale(24.200,30.800)" stroke="#ffffff" stroke-width="3.00" vector-effect="non-scaling-stroke" fill="none" stroke-linecap="round" stroke-linejoin="round"/>
<path d="M0.5,0.0 Q0.52,0.3 0.42,0.55 Q0.3,0.82 0.02,1.0" transform="translate(765.70,257.00) scale(24.200,30.800)" stroke="#ffffff" stroke-width="3.00" vector-effect="non-scaling-stroke" fill="none" stroke-linecap="round" stroke-linejoin="round"/>
<path d="M0.5,0.45 Q0.7,0.75 1.0,0.98" transform="translate(765.70,257.00) scale(24.200,30.800)" stroke="#ffffff" stroke-width="3.00" vector-effect="non-scaling-stroke" fill="none" stroke-linecap="round" stroke-linejoin="round"/>
<path d="M0.22,0.04 L0.3,0.22" transform="translate(800.80,247.00) scale(25.600,46.700)" stroke="#ffffff" stroke-width="3.00" vector-effect="non-scaling-stroke" fill="none" stroke-linecap="round" stroke-linejoin="round"/>
<path d="M0.46,0.02 Q0.5,0.1 0.46,0.18" transform="translate(800.80,247.00) scale(25.600,46.700)" stroke="#ffffff" stroke-width="3.00" vector-effect="non-scaling-stroke" fill="none" stroke-linecap="round" stroke-linejoin="round"/>
<path d="M0.68,0.05 L0.6,0.2" transform="translate(800.80,247.00) scale(25.600,46.700)" stroke="#ffffff" stroke-width="3.00" vector-effect="non-scaling-stroke" fill="none" stroke-linecap="round" stroke-linejoin="round"/>
<path d="M0.86,0.02 Q0.84,0.14 0.76,0.24" transform="translate(800.80,247.00) scale(25.600,46.700)" stroke="#ffffff" stroke-width="3.00" vector-effect="non-scaling-stroke" fill="none" stroke-linecap="round" stroke-linejoin="round"/>
<path d="M0.1,0.32 Q0.5,0.28 0.95,0.26 L0.86,0.36" transform="translate(800.80,247.00) scale(25.600,46.700)" stroke="#ffffff" stroke-width="3.00" vector-effect="non-scaling-stroke" fill="none" stroke-linecap="round" stroke-linejoin="round"/>
<path d="M0.3,0.42 Q0.55,0.4 0.78,0.4 Q0.6,0.5 0.46,0.56" transform="translate(800.80,247.00) scale(25.600,46.700)" stroke="#ffffff" stroke-width="3.00" vector-effect="non-scaling-stroke" fill="none" stroke-linecap="round" stroke-linejoin="round"/>
<path d="M0.0,0.66 Q0.5,0.6 1.0,0.58" transform="translate(800.80,247.00) scale(25.600,46.700)" stroke="#ffffff" stroke-width="3.00" vector-effect="non-scaling-stroke" fill="none" stroke-linecap="round" stroke-linejoin="round"/>
<path d="M0.56,0.56 Q0.6,0.8 0.5,0.98 Q0.4,0.94 0.34,0.9" transform="translate(800.80,247.00) scale(25.600,46.700)" stroke="#ffffff" stroke-width="3.00" vector-effect="non-scaling-stroke" fill="none" stroke-linecap="round" stroke-linejoin="round"/>
<text x="683.0" y="312.0" font-size="15.5" fill="#ffffff" textLength="145.0" lengthAdjust="spacingAndGlyphs" >HOHAI UNIVERSITY</text>
<text x="896.2" y="295.4" font-size="41" fill="#ffffff" font-weight="bold" textLength="168.5" lengthAdjust="spacingAndGlyphs" >Contents</text>
<text x="648.2" y="519.2" font-size="37.4" fill="#000" font-family="Liberation Serif" font-weight="bold" >1.Introduction</text>
<text x="888.5" y="519.2" font-size="37.4" fill="#000" font-family="Liberation Serif" > : Fluid Mechanics Basics</text>
<text x="648.2" y="587.1" font-size="37.4" fill="#000" font-family="Liberation Serif" font-weight="bold" >2. Dimensional analysis and model laws</text>
<text x="648.2" y="654.4" font-size="37.4" fill="#000" font-family="Liberation Serif" font-weight="bold" >3.Boundary layer theory</text>
<text x="648.2" y="722.3" font-size="37.4" fill="#000" font-family="Liberation Serif" font-weight="bold" >4.Turbulent jets</text>
</g>
<rect x="178" y="215.5" width="1555" height="4.5" fill="url(#rshg)" />
<path d="M1262,557 L1262,580 L1267,575 L1271,584 L1274,582.5 L1270,574 L1277,573.5 Z" stroke="#777" stroke-width="1" fill="#fff" stroke-linejoin="round" opacity="0.9"/>
<rect x="1710" y="216" width="23" height="598" fill="#f3f3f3" />
<polygon points="1716.5,231 1727.5,231 1722,223" fill="#6a6a6a"/>
<rect x="1717.5" y="270.5" width="10" height="22" fill="#707070" rx="5" />
<polygon points="1716.5,735 1727.5,735 1722,743" fill="#6a6a6a"/>
<polygon points="1716.5,758 1727.5,758 1722,751 M" fill="#6a6a6a"/>
<path d="M1716.5,758 L1722,751 L1727.5,758 Z M1716.5,766 L1722,759 L1727.5,766 Z" fill="#6a6a6a"/>
<path d="M1716.5,774 L1722,781 L1727.5,774 Z M1716.5,782 L1722,789 L1727.5,782 Z" fill="#6a6a6a"/>
<rect x="178" y="886" width="1555" height="27" fill="#f3f3f3" />
<text x="187.5" y="905.5" font-size="13.5" fill="#505050" textLength="68.8" lengthAdjust="spacingAndGlyphs" >Slide 2 of 17</text>
<text x="294.4" y="905.5" font-size="13.5" fill="#505050" textLength="78.6" lengthAdjust="spacingAndGlyphs" >English (India)</text>
<circle cx="401" cy="893.8" r="2.2" fill="none" stroke="#444" stroke-width="1.3" />
<path d="M394.5,897.5 Q398,899 401,898.8 Q404,899 407.5,897 M401,899 L400.5,903 Q398.5,906 395.5,909.5 M400.5,903 L402.5,905" stroke="#444" stroke-width="1.4" fill="none" stroke-linecap="round" stroke-linejoin="round"/>
<path d="M403.5,905.5 L408.5,910.5 M408.5,905.5 L403.5,910.5" stroke="#444" stroke-width="1.3" fill="none" />
<text x="415.0" y="905.5" font-size="13.5" fill="#505050" textLength="132.9" lengthAdjust="spacingAndGlyphs" >Accessibility: Investigate</text>
<path d="M1218,899.5 h19 M1218,904.5 h19 M1218,909.5 h19 M1224.5,895 l3.2,-3.2 l3.2,3.2" stroke="#4a4a4a" stroke-width="1.3" fill="none" />
<text x="1239.5" y="905.5" font-size="13.5" fill="#404040" textLength="33.0" lengthAdjust="spacingAndGlyphs" >Notes</text>
<rect x="1295" y="887" width="48" height="26" fill="#e2e2e2" />
<rect x="1311" y="894" width="16" height="13.5" fill="none" stroke="#3c3c3c" stroke-width="1.4" />
<path d="M1314,894.5 v12.5 M1314,904 h13" stroke="#3c3c3c" stroke-width="1.2" fill="none" />
<rect x="1318.5" y="897" width="5.5" height="3.5" fill="none" stroke="#3c3c3c" stroke-width="1" />
<rect x="1359.5" y="894" width="7" height="5.8" fill="none" rx="0.6" stroke="#3c3c3c" stroke-width="1.3" />
<rect x="1359.5" y="903" width="7" height="5.8" fill="none" rx="0.6" stroke="#3c3c3c" stroke-width="1.3" />
<rect x="1369.5" y="894" width="7" height="5.8" fill="none" rx="0.6" stroke="#3c3c3c" stroke-width="1.3" />
<rect x="1369.5" y="903" width="7" height="5.8" fill="none" rx="0.6" stroke="#3c3c3c" stroke-width="1.3" />
<path d="M1408,893.5 v13.5 h7.5 l0.5,1 l0.5,-1 h7.5 v-13.5 h-7.5 l-0.5,0.5 l-0.5,-0.5 z M1416,894 v13" stroke="#3c3c3c" stroke-width="1.3" fill="none" />
<path d="M1410,897 h4 M1410,899.5 h4 M1410,902 h4 M1410,904.5 h4 M1418,897 h4 M1418,899.5 h4 M1418,902 h4 M1418,904.5 h4" stroke="#555" stroke-width="0.8" fill="none" />
<path d="M1456.5,893.5 h16 M1458,893.5 v8 h13 v-8 M1464.5,901.5 v6.5 M1460.5,908 h8" stroke="#3c3c3c" stroke-width="1.3" fill="none" />
<rect x="1462" y="896" width="5" height="2" fill="#777" />
<path d="M1495,900.5 h9" stroke="#555" stroke-width="1.2" fill="none" />
<rect x="1512" y="899.8" width="120" height="1.4" fill="#555" />
<rect x="1558.6" y="893.8" width="6" height="13.2" fill="#555" rx="0.8" />
<rect x="1571.4" y="896.5" width="1.2" height="8" fill="#555" />
<path d="M1637,900.5 h10 M1642,895.5 v10" stroke="#555" stroke-width="1.2" fill="none" />
<text x="1662.0" y="905.5" font-size="13.5" fill="#606060" textLength="26.0" lengthAdjust="spacingAndGlyphs" >83%</text>
<rect x="1714.5" y="897.3" width="8.5" height="7" fill="none" stroke="#444" stroke-width="1.3" />
<path d="M1712,898 l-2.3,2.6 l2.3,2.6 M1725.5,898 l2.3,2.6 l-2.3,2.6 M1716.3,894.8 l2.5,-2.5 l2.5,2.5 M1716.3,906.5 l2.5,2.5 l2.5,-2.5" stroke="#444" stroke-width="1.2" fill="none" />
<defs><linearGradient id="tbg" x1="0" y1="0" x2="1" y2="0"><stop offset="0" stop-color="#d9d9d9"/><stop offset="0.35" stop-color="#e3d6d6"/><stop offset="1" stop-color="#ebd9da"/></linearGradient></defs>
<rect x="178" y="913" width="1555" height="59" fill="url(#tbg)" />
<rect x="754.5" y="930" width="13.5" height="13.5" fill="#1d8fe6"/>
<rect x="769.5" y="930" width="13.5" height="13.5" fill="#1d8fe6"/>
<rect x="754.5" y="944.5" width="13.5" height="13.5" fill="#1d8fe6"/>
<rect x="769.5" y="944.5" width="13.5" height="13.5" fill="#1d8fe6"/>
<rect x="754.5" y="930" width="28.5" height="28" fill="none"/>
<circle cx="825.5" cy="940" r="9" fill="none" stroke="#1a1a1a" stroke-width="2.6" />
<path d="M819,947 L811,955.5" stroke="#1a1a1a" stroke-width="3.2" fill="none" stroke-linecap="round"/>
<circle cx="876" cy="944" r="14.5" fill="#db4437" />
<path d="M876,944 L876,929.5 A14.5,14.5 0 0 1 888.6,951.3 Z" fill="#f4c20d"/>
<path d="M876,944 L888.6,951.3 A14.5,14.5 0 0 1 863.4,951.3 Z" fill="#0f9d58"/>
<path d="M876,944 L888.6,951.3 A14.5,14.5 0 0 0 890.5,944 L876,929.5 Z" fill="#f4c20d"/>
<circle cx="876" cy="944" r="6.5" fill="#ffffff" />
<circle cx="876" cy="944" r="5" fill="#3b82e6" />
<path d="M914.5,934 h11 l3,3 h16 v20 h-30 z" fill="#f0b92c"/>
<rect x="914.5" y="939" width="30.5" height="18.5" fill="#f8d44c" rx="1.5" />
<rect x="921" y="952" width="17" height="6" fill="#1f79d8" rx="2" />
<rect x="975" y="930" width="22" height="28" fill="#2b6fd6" rx="2.5" />
<rect x="975" y="930" width="22" height="9" fill="#41a5ee" rx="2" />
<rect x="968" y="937" width="15" height="14" fill="#185abd" rx="1.5" />
<text x="969.5" y="948.5" font-size="10" fill="#fff" font-weight="bold" >W</text>
<rect x="1028" y="930" width="22" height="28" fill="#1e7a45" rx="2.5" />
<rect x="1028" y="930" width="22" height="9" fill="#33c481" rx="2" />
<rect x="1021.5" y="937" width="15" height="14" fill="#107c41" rx="1.5" />
<text x="1025.0" y="948.5" font-size="10" fill="#fff" font-weight="bold" >X</text>
<circle cx="1092" cy="944" r="13.5" fill="#ed6c47" />
<path d="M1092,930.5 A13.5,13.5 0 0 1 1105.5,944 L1092,944 Z" fill="#ff8f6b"/>
<rect x="1075.5" y="937" width="15" height="14" fill="#c43e1c" rx="1.5" />
<text x="1079.0" y="948.5" font-size="10" fill="#fff" font-weight="bold" >P</text>
<rect x="1086.5" y="963.5" width="7" height="2.5" fill="#6b6b6b" rx="1.2" />
<rect x="1121" y="921.5" width="44" height="46" fill="#f1e6e7" rx="4" />
<circle cx="1143.5" cy="944" r="13" fill="#0f8be0" />
<circle cx="1134" cy="934" r="6.5" fill="#0f8be0" />
<circle cx="1153" cy="953" r="6.5" fill="#0f8be0" />
<text x="1137.0" y="951.5" font-size="20" fill="#fff" font-weight="bold" >S</text>
<circle cx="1155.5" cy="933.5" r="8.5" fill="#e8553e" />
<circle cx="1155.5" cy="933.5" r="8.5" fill="none" stroke="#f4e7e8" stroke-width="1.2" />
<text x="1152.2" y="937.8" font-size="11" fill="#fff" font-weight="bold" >2</text>
<rect x="1134" y="962.5" width="18.5" height="3" fill="#1a73d9" rx="1.5" />
<path d="M1330.5,946 L1337.3,939.2 L1344,946" stroke="#333" stroke-width="1.3" fill="none" />
<defs><linearGradient id="cloudg" x1="0" y1="0" x2="0" y2="1"><stop offset="0" stop-color="#8a8a8a"/><stop offset="1" stop-color="#e8e8e8"/></linearGradient></defs>
<path d="M1360,948.8 h12 a3.8,3.8 0 0 0 0.5,-7.6 a5.8,5.8 0 0 0 -10.8,-1.6 a4.6,4.6 0 0 0 -1.7,9.2 z" fill="url(#cloudg)" stroke="#444" stroke-width="1.2"/>
<path d="M1386.5,942.5 a7.8,7.8 0 0 1 13.5,-4.5 M1404,934 v4.5 h-4.5 M1401.5,949.5 a7.8,7.8 0 0 1 -13,-1.5 M1386.3,952.5 v-4.5 h4.5" stroke="#555" stroke-width="1.2" fill="none" />
<circle cx="1400.6" cy="947.5" r="4.6" fill="#f2b632" />
<rect x="1426.3" y="933.5" width="6.3" height="12" fill="none" rx="3.1" stroke="#2a4f9a" stroke-width="1.5" />
<path d="M1423,942.5 a6.4,6.4 0 0 0 12.8,0 M1429.4,948.9 v3.3" stroke="#2a4f9a" stroke-width="1.4" fill="none" />
<text x="1461.8" y="939.2" font-size="14" fill="#2a2a2a" textLength="27.8" lengthAdjust="spacingAndGlyphs" >ENG</text>
<text x="1468.8" y="958.0" font-size="14" fill="#2a2a2a" textLength="13.5" lengthAdjust="spacingAndGlyphs" >IN</text>
<path d="M1513,941.5 a12,12 0 0 1 16.5,0 M1515.7,944.5 a8,8 0 0 1 11,0 M1518.4,947.3 a4,4 0 0 1 5.6,0" stroke="#222" stroke-width="1.4" fill="none" />
<circle cx="1521.3" cy="949.8" r="1.3" fill="#222" />
<path d="M1541.5,941.5 h3.5 l5.5,-4.8 v15.6 l-5.5,-4.8 h-3.5 z" stroke="#222" stroke-width="1.3" fill="none" stroke-linejoin="round"/>
<path d="M1553,942 a3.5,3.5 0 0 1 0,5 M1555.8,939.5 a7.5,7.5 0 0 1 0,10 M1558.5,937 a11,11 0 0 1 0,15" stroke="#222" stroke-width="1.2" fill="none" />
<rect x="1576.5" y="937.5" width="12" height="10.5" fill="none" rx="1.5" stroke="#222" stroke-width="1.4" />
<rect x="1580" y="940.5" width="6" height="5" fill="#222" />
<rect x="1589" y="940.5" width="1.8" height="4.5" fill="#222" />
<path d="M1571.5,938.5 v3.5 M1574,938.5 v3.5 M1570.5,942 h5 l-2.5,3 v2.5" stroke="#222" stroke-width="1.2" fill="none" />
<text x="1665.3" y="938.6" font-size="14.5" fill="#333" text-anchor="middle" textLength="33.0" lengthAdjust="spacingAndGlyphs" >03:41</text>
<text x="1644.3" y="957.6" font-size="14.5" fill="#333" text-anchor="middle" textLength="73.0" lengthAdjust="spacingAndGlyphs" >25-10-2022</text>
<path d="M1703.3,934.6 Q1710.5,939 1708,946.5 Q1703.5,953 1693.3,947.6 Q1703.2,946.5 1703.3,934.6 Z" stroke="#333" stroke-width="1.3" fill="none" stroke-linejoin="round"/>
<rect x="0" y="972" width="1916" height="108" fill="#000" />
<circle cx="66" cy="1026.5" r="29.5" fill="#4a4e7b" />
<text x="66.0" y="1033.5" font-size="19" fill="#ffffff" text-anchor="middle" textLength="22.0" lengthAdjust="spacingAndGlyphs" >+2</text>
<defs><clipPath id="av2"><circle cx="165.8" cy="1026.5" r="30"/></clipPath><clipPath id="av5"><circle cx="465.8" cy="1026.5" r="30"/></clipPath><clipPath id="av6"><circle cx="616" cy="1026" r="30"/></clipPath><clipPath id="av7"><circle cx="1616" cy="1026" r="30"/></clipPath><clipPath id="vid"><rect x="916" y="972" width="200" height="108"/></clipPath><linearGradient id="sea" x1="0" y1="0" x2="1" y2="1"><stop offset="0" stop-color="#aad4f5"/><stop offset="0.5" stop-color="#2f6fb5"/><stop offset="1" stop-color="#0c2f66"/></linearGradient><linearGradient id="aut" x1="0" y1="0" x2="0" y2="1"><stop offset="0" stop-color="#d9dde3"/><stop offset="0.35" stop-color="#b89a62"/><stop offset="0.7" stop-color="#8d7a55"/><stop offset="1" stop-color="#d8a52a"/></linearGradient></defs>
<g clip-path="url(#av2)"><rect x="135" y="996" width="62" height="62" fill="#1f78d0"/><rect x="135" y="1030" width="62" height="30" fill="#2a86da"/><ellipse cx="166" cy="1015" rx="16" ry="18" fill="#1e1a1a"/><rect x="159" y="1034" width="14" height="12" fill="#c9a584"/><ellipse cx="166" cy="1022" rx="12" ry="15" fill="#d5b390"/><path d="M151,1012 Q156,998 168,999 Q180,1000 182,1014 Q176,1004 166,1006 Q158,1007 151,1014 Z" fill="#1e1a1a"/><ellipse cx="161" cy="1018" rx="2" ry="1" fill="#3a2a20"/><ellipse cx="171" cy="1018" rx="2" ry="1" fill="#3a2a20"/><ellipse cx="166" cy="1027.5" rx="3" ry="1.5" fill="#d8604a"/><path d="M137,1060 Q142,1042 166,1044 Q190,1042 195,1060 Z" fill="#c6c6c8"/><path d="M156,1046 Q166,1052 176,1046 L176,1060 L156,1060 Z" fill="#e4dcd6"/></g>
<circle cx="266" cy="1026.5" r="30" fill="#b3dcf7" />
<circle cx="266" cy="1020.0" r="6" fill="#ffffff" />
<path d="M254.5,1037.5 L254.5,1032.0 Q254.5,1028.0 259,1027.5 L273,1027.5 Q277.5,1028.0 277.5,1032.0 L277.5,1037.5 Z" fill="#ffffff"/>
<circle cx="365.8" cy="1026.5" r="30" fill="#b3dcf7" />
<circle cx="365.8" cy="1020.0" r="6" fill="#ffffff" />
<path d="M354.3,1037.5 L354.3,1032.0 Q354.3,1028.0 358.8,1027.5 L372.8,1027.5 Q377.3,1028.0 377.3,1032.0 L377.3,1037.5 Z" fill="#ffffff"/>
<g clip-path="url(#av5)">
<rect x="435.8" y="996.5" width="3.3" height="3.3" fill="#4897dd"/><rect x="438.8" y="996.5" width="3.3" height="3.3" fill="#4e9de3"/><rect x="441.8" y="996.5" width="3.3" height="3.3" fill="#4c9be1"/><rect x="444.8" y="996.5" width="3.3" height="3.3" fill="#3382c8"/><rect x="447.8" y="996.5" width="3.3" height="3.3" fill="#53a2e8"/><rect x="450.8" y="996.5" width="3.3" height="3.3" fill="#b6dbfd"/><rect x="453.8" y="996.5" width="3.3" height="3.3" fill="#a6cbed"/><rect x="456.8" y="996.5" width="3.3" height="3.3" fill="#4594da"/><rect x="459.8" y="996.5" width="3.3" height="3.3" fill="#96bbdd"/><rect x="462.8" y="996.5" width="3.3" height="3.3" fill="#3c8bd1"/><rect x="465.8" y="996.5" width="3.3" height="3.3" fill="#b1d6f8"/><rect x="468.8" y="996.5" width="3.3" height="3.3" fill="#b2d7f9"/><rect x="471.8" y="996.5" width="3.3" height="3.3" fill="#acd1f3"/><rect x="474.8" y="996.5" width="3.3" height="3.3" fill="#3281c7"/><rect x="477.8" y="996.5" width="3.3" height="3.3" fill="#9dc2e4"/><rect x="480.8" y="996.5" width="3.3" height="3.3" fill="#55a4ea"/><rect x="483.8" y="996.5" width="3.3" height="3.3" fill="#3c8bd1"/><rect x="486.8" y="996.5" width="3.3" height="3.3" fill="#4594da"/><rect x="489.8" y="996.5" width="3.3" height="3.3" fill="#3988ce"/><rect x="492.8" y="996.5" width="3.3" height="3.3" fill="#4a99df"/><rect x="435.8" y="999.5" width="3.3" height="3.3" fill="#61abeb"/><rect x="438.8" y="999.5" width="3.3" height="3.3" fill="#a9ccec"/><rect x="441.8" y="999.5" width="3.3" height="3.3" fill="#a1c4e4"/><rect x="444.8" y="999.5" width="3.3" height="3.3" fill="#4b95d5"/><rect x="447.8" y="999.5" width="3.3" height="3.3" fill="#418bcb"/><rect x="450.8" y="999.5" width="3.3" height="3.3" fill="#4d97d7"/><rect x="453.8" y="999.5" width="3.3" height="3.3" fill="#5ea8e8"/><rect x="456.8" y="999.5" width="3.3" height="3.3" fill="#4c96d6"/><rect x="459.8" y="999.5" width="3.3" height="3.3" fill="#b5d8f8"/><rect x="462.8" y="999.5" width="3.3" height="3.3" fill="#bfe2ff"/><rect x="465.8" y="999.5" width="3.3" height="3.3" fill="#5ba5e5"/><rect x="468.8" y="999.5" width="3.3" height="3.3" fill="#418bcb"/><rect x="471.8" y="999.5" width="3.3" height="3.3" fill="#4e98d8"/><rect x="474.8" y="999.5" width="3.3" height="3.3" fill="#9cbfdf"/><rect x="477.8" y="999.5" width="3.3" height="3.3" fill="#4791d1"/><rect x="480.8" y="999.5" width="3.3" height="3.3" fill="#4892d2"/><rect x="483.8" y="999.5" width="3.3" height="3.3" fill="#62acec"/><rect x="486.8" y="999.5" width="3.3" height="3.3" fill="#4d97d7"/><rect x="489.8" y="999.5" width="3.3" height="3.3" fill="#539ddd"/><rect x="492.8" y="999.5" width="3.3" height="3.3" fill="#448ece"/><rect x="435.8" y="1002.5" width="3.3" height="3.3" fill="#6bb0eb"/><rect x="438.8" y="1002.5" width="3.3" height="3.3" fill="#5095d0"/><rect x="441.8" y="1002.5" width="3.3" height="3.3" fill="#5297d2"/><rect x="444.8" y="1002.5" width="3.3" height="3.3" fill="#64a9e4"/><rect x="447.8" y="1002.5" width="3.3" height="3.3" fill="#5ba0db"/><rect x="450.8" y="1002.5" width="3.3" height="3.3" fill="#62a7e2"/><rect x="453.8" y="1002.5" width="3.3" height="3.3" fill="#acceec"/><rect x="456.8" y="1002.5" width="3.3" height="3.3" fill="#a3c5e3"/><rect x="459.8" y="1002.5" width="3.3" height="3.3" fill="#67ace7"/><rect x="462.8" y="1002.5" width="3.3" height="3.3" fill="#a6c8e6"/><rect x="465.8" y="1002.5" width="3.3" height="3.3" fill="#72b7f2"/><rect x="468.8" y="1002.5" width="3.3" height="3.3" fill="#afd1ef"/><rect x="471.8" y="1002.5" width="3.3" height="3.3" fill="#64a9e4"/><rect x="474.8" y="1002.5" width="3.3" height="3.3" fill="#5fa4df"/><rect x="477.8" y="1002.5" width="3.3" height="3.3" fill="#5196d1"/><rect x="480.8" y="1002.5" width="3.3" height="3.3" fill="#5095d0"/><rect x="483.8" y="1002.5" width="3.3" height="3.3" fill="#bfe1ff"/><rect x="486.8" y="1002.5" width="3.3" height="3.3" fill="#69aee9"/><rect x="489.8" y="1002.5" width="3.3" height="3.3" fill="#65aae5"/><rect x="492.8" y="1002.5" width="3.3" height="3.3" fill="#5297d2"/><rect x="435.8" y="1005.5" width="3.3" height="3.3" fill="#63a2d7"/><rect x="438.8" y="1005.5" width="3.3" height="3.3" fill="#68a7dc"/><rect x="441.8" y="1005.5" width="3.3" height="3.3" fill="#81c0f5"/><rect x="444.8" y="1005.5" width="3.3" height="3.3" fill="#81c0f5"/><rect x="447.8" y="1005.5" width="3.3" height="3.3" fill="#6faee3"/><rect x="450.8" y="1005.5" width="3.3" height="3.3" fill="#6faee3"/><rect x="453.8" y="1005.5" width="3.3" height="3.3" fill="#b5d5f0"/><rect x="456.8" y="1005.5" width="3.3" height="3.3" fill="#6baadf"/><rect x="459.8" y="1005.5" width="3.3" height="3.3" fill="#80bff4"/><rect x="462.8" y="1005.5" width="3.3" height="3.3" fill="#6faee3"/><rect x="465.8" y="1005.5" width="3.3" height="3.3" fill="#61a0d5"/><rect x="468.8" y="1005.5" width="3.3" height="3.3" fill="#7ab9ee"/><rect x="471.8" y="1005.5" width="3.3" height="3.3" fill="#6baadf"/><rect x="474.8" y="1005.5" width="3.3" height="3.3" fill="#79b8ed"/><rect x="477.8" y="1005.5" width="3.3" height="3.3" fill="#75b4e9"/><rect x="480.8" y="1005.5" width="3.3" height="3.3" fill="#6baadf"/><rect x="483.8" y="1005.5" width="3.3" height="3.3" fill="#68a7dc"/><rect x="486.8" y="1005.5" width="3.3" height="3.3" fill="#79b8ed"/><rect x="489.8" y="1005.5" width="3.3" height="3.3" fill="#68a7dc"/><rect x="492.8" y="1005.5" width="3.3" height="3.3" fill="#75b4e9"/><rect x="435.8" y="1008.5" width="3.3" height="3.3" fill="#6da7d6"/><rect x="438.8" y="1008.5" width="3.3" height="3.3" fill="#76b0df"/><rect x="441.8" y="1008.5" width="3.3" height="3.3" fill="#7db7e6"/><rect x="444.8" y="1008.5" width="3.3" height="3.3" fill="#84beed"/><rect x="447.8" y="1008.5" width="3.3" height="3.3" fill="#79b3e2"/><rect x="450.8" y="1008.5" width="3.3" height="3.3" fill="#87c1f0"/><rect x="453.8" y="1008.5" width="3.3" height="3.3" fill="#79b3e2"/><rect x="456.8" y="1008.5" width="3.3" height="3.3" fill="#8cc6f5"/><rect x="459.8" y="1008.5" width="3.3" height="3.3" fill="#90caf9"/><rect x="462.8" y="1008.5" width="3.3" height="3.3" fill="#7fb9e8"/><rect x="465.8" y="1008.5" width="3.3" height="3.3" fill="#72acdb"/><rect x="468.8" y="1008.5" width="3.3" height="3.3" fill="#8ec8f7"/><rect x="471.8" y="1008.5" width="3.3" height="3.3" fill="#85bfee"/><rect x="474.8" y="1008.5" width="3.3" height="3.3" fill="#c7e5fd"/><rect x="477.8" y="1008.5" width="3.3" height="3.3" fill="#89c3f2"/><rect x="480.8" y="1008.5" width="3.3" height="3.3" fill="#84beed"/><rect x="483.8" y="1008.5" width="3.3" height="3.3" fill="#83bdec"/><rect x="486.8" y="1008.5" width="3.3" height="3.3" fill="#83bdec"/><rect x="489.8" y="1008.5" width="3.3" height="3.3" fill="#adcbe3"/><rect x="492.8" y="1008.5" width="3.3" height="3.3" fill="#7cb6e5"/><rect x="435.8" y="1011.5" width="3.3" height="3.3" fill="#83b7e1"/><rect x="438.8" y="1011.5" width="3.3" height="3.3" fill="#c9e4fb"/><rect x="441.8" y="1011.5" width="3.3" height="3.3" fill="#c3def5"/><rect x="444.8" y="1011.5" width="3.3" height="3.3" fill="#b4cfe6"/><rect x="447.8" y="1011.5" width="3.3" height="3.3" fill="#bed9f0"/><rect x="450.8" y="1011.5" width="3.3" height="3.3" fill="#b9d4eb"/><rect x="453.8" y="1011.5" width="3.3" height="3.3" fill="#8cc0ea"/><rect x="456.8" y="1011.5" width="3.3" height="3.3" fill="#92c6f0"/><rect x="459.8" y="1011.5" width="3.3" height="3.3" fill="#84b8e2"/><rect x="462.8" y="1011.5" width="3.3" height="3.3" fill="#7cb0da"/><rect x="465.8" y="1011.5" width="3.3" height="3.3" fill="#86bae4"/><rect x="468.8" y="1011.5" width="3.3" height="3.3" fill="#80b4de"/><rect x="471.8" y="1011.5" width="3.3" height="3.3" fill="#c0dbf2"/><rect x="474.8" y="1011.5" width="3.3" height="3.3" fill="#c9e4fb"/><rect x="477.8" y="1011.5" width="3.3" height="3.3" fill="#8fc3ed"/><rect x="480.8" y="1011.5" width="3.3" height="3.3" fill="#90c4ee"/><rect x="483.8" y="1011.5" width="3.3" height="3.3" fill="#99cdf7"/><rect x="486.8" y="1011.5" width="3.3" height="3.3" fill="#99cdf7"/><rect x="489.8" y="1011.5" width="3.3" height="3.3" fill="#c0dbf2"/><rect x="492.8" y="1011.5" width="3.3" height="3.3" fill="#91c5ef"/><rect x="435.8" y="1014.5" width="3.3" height="3.3" fill="#acdcff"/><rect x="438.8" y="1014.5" width="3.3" height="3.3" fill="#9fcff2"/><rect x="441.8" y="1014.5" width="3.3" height="3.3" fill="#d9f2ff"/><rect x="444.8" y="1014.5" width="3.3" height="3.3" fill="#8dbde0"/><rect x="447.8" y="1014.5" width="3.3" height="3.3" fill="#cfe8fc"/><rect x="450.8" y="1014.5" width="3.3" height="3.3" fill="#a0d0f3"/><rect x="453.8" y="1014.5" width="3.3" height="3.3" fill="#97c7ea"/><rect x="456.8" y="1014.5" width="3.3" height="3.3" fill="#cbdbed"/><rect x="459.8" y="1014.5" width="3.3" height="3.3" fill="#e6f6ff"/><rect x="462.8" y="1014.5" width="3.3" height="3.3" fill="#acdcff"/><rect x="465.8" y="1014.5" width="3.3" height="3.3" fill="#9fcff2"/><rect x="468.8" y="1014.5" width="3.3" height="3.3" fill="#adddff"/><rect x="471.8" y="1014.5" width="3.3" height="3.3" fill="#98c8eb"/><rect x="474.8" y="1014.5" width="3.3" height="3.3" fill="#adddff"/><rect x="477.8" y="1014.5" width="3.3" height="3.3" fill="#94c4e7"/><rect x="480.8" y="1014.5" width="3.3" height="3.3" fill="#8ebee1"/><rect x="483.8" y="1014.5" width="3.3" height="3.3" fill="#99c9ec"/><rect x="486.8" y="1014.5" width="3.3" height="3.3" fill="#a6d6f9"/><rect x="489.8" y="1014.5" width="3.3" height="3.3" fill="#8abadd"/><rect x="492.8" y="1014.5" width="3.3" height="3.3" fill="#93c3e6"/><rect x="435.8" y="1017.5" width="3.3" height="3.3" fill="#dbf2ff"/><rect x="438.8" y="1017.5" width="3.3" height="3.3" fill="#c8dff1"/><rect x="441.8" y="1017.5" width="3.3" height="3.3" fill="#bce6ff"/><rect x="444.8" y="1017.5" width="3.3" height="3.3" fill="#aed8f6"/><rect x="447.8" y="1017.5" width="3.3" height="3.3" fill="#b0daf8"/><rect x="450.8" y="1017.5" width="3.3" height="3.3" fill="#e8f3ff"/><rect x="453.8" y="1017.5" width="3.3" height="3.3" fill="#e1f0ff"/><rect x="456.8" y="1017.5" width="3.3" height="3.3" fill="#d9e8f9"/><rect x="459.8" y="1017.5" width="3.3" height="3.3" fill="#d0dff0"/><rect x="462.8" y="1017.5" width="3.3" height="3.3" fill="#d6e5f6"/><rect x="465.8" y="1017.5" width="3.3" height="3.3" fill="#b3ddfb"/><rect x="468.8" y="1017.5" width="3.3" height="3.3" fill="#9ac4e2"/><rect x="471.8" y="1017.5" width="3.3" height="3.3" fill="#a9d3f1"/><rect x="474.8" y="1017.5" width="3.3" height="3.3" fill="#b8e2ff"/><rect x="477.8" y="1017.5" width="3.3" height="3.3" fill="#99c3e1"/><rect x="480.8" y="1017.5" width="3.3" height="3.3" fill="#a8d2f0"/><rect x="483.8" y="1017.5" width="3.3" height="3.3" fill="#b2dcfa"/><rect x="486.8" y="1017.5" width="3.3" height="3.3" fill="#aad4f2"/><rect x="489.8" y="1017.5" width="3.3" height="3.3" fill="#a6d0ee"/><rect x="492.8" y="1017.5" width="3.3" height="3.3" fill="#ddf4ff"/><rect x="435.8" y="1020.5" width="3.3" height="3.3" fill="#2566b7"/><rect x="438.8" y="1020.5" width="3.3" height="3.3" fill="#3879ca"/><rect x="441.8" y="1020.5" width="3.3" height="3.3" fill="#1d5eaf"/><rect x="444.8" y="1020.5" width="3.3" height="3.3" fill="#397acb"/><rect x="447.8" y="1020.5" width="3.3" height="3.3" fill="#c6d9f5"/><rect x="450.8" y="1020.5" width="3.3" height="3.3" fill="#bccfeb"/><rect x="453.8" y="1020.5" width="3.3" height="3.3" fill="#b7cae6"/><rect x="456.8" y="1020.5" width="3.3" height="3.3" fill="#c9dcf8"/><rect x="459.8" y="1020.5" width="3.3" height="3.3" fill="#cde0fc"/><rect x="462.8" y="1020.5" width="3.3" height="3.3" fill="#b2c5e1"/><rect x="465.8" y="1020.5" width="3.3" height="3.3" fill="#bed1ed"/><rect x="468.8" y="1020.5" width="3.3" height="3.3" fill="#2e6fc0"/><rect x="471.8" y="1020.5" width="3.3" height="3.3" fill="#2c6dbe"/><rect x="474.8" y="1020.5" width="3.3" height="3.3" fill="#2667b8"/><rect x="477.8" y="1020.5" width="3.3" height="3.3" fill="#2061b2"/><rect x="480.8" y="1020.5" width="3.3" height="3.3" fill="#3071c2"/><rect x="483.8" y="1020.5" width="3.3" height="3.3" fill="#3879ca"/><rect x="486.8" y="1020.5" width="3.3" height="3.3" fill="#1d5eaf"/><rect x="489.8" y="1020.5" width="3.3" height="3.3" fill="#2364b5"/><rect x="492.8" y="1020.5" width="3.3" height="3.3" fill="#3879ca"/><rect x="435.8" y="1023.5" width="3.3" height="3.3" fill="#3574c3"/><rect x="438.8" y="1023.5" width="3.3" height="3.3" fill="#306fbe"/><rect x="441.8" y="1023.5" width="3.3" height="3.3" fill="#1958a7"/><rect x="444.8" y="1023.5" width="3.3" height="3.3" fill="#c7daf5"/><rect x="447.8" y="1023.5" width="3.3" height="3.3" fill="#d0e3fe"/><rect x="450.8" y="1023.5" width="3.3" height="3.3" fill="#d0e3fe"/><rect x="453.8" y="1023.5" width="3.3" height="3.3" fill="#c6d9f4"/><rect x="456.8" y="1023.5" width="3.3" height="3.3" fill="#aec1dc"/><rect x="459.8" y="1023.5" width="3.3" height="3.3" fill="#cbdef9"/><rect x="462.8" y="1023.5" width="3.3" height="3.3" fill="#b4c7e2"/><rect x="465.8" y="1023.5" width="3.3" height="3.3" fill="#c4d7f2"/><rect x="468.8" y="1023.5" width="3.3" height="3.3" fill="#cfe2fd"/><rect x="471.8" y="1023.5" width="3.3" height="3.3" fill="#c6d9f4"/><rect x="474.8" y="1023.5" width="3.3" height="3.3" fill="#1d5cab"/><rect x="477.8" y="1023.5" width="3.3" height="3.3" fill="#2362b1"/><rect x="480.8" y="1023.5" width="3.3" height="3.3" fill="#3a79c8"/><rect x="483.8" y="1023.5" width="3.3" height="3.3" fill="#1e5dac"/><rect x="486.8" y="1023.5" width="3.3" height="3.3" fill="#2e6dbc"/><rect x="489.8" y="1023.5" width="3.3" height="3.3" fill="#2766b5"/><rect x="492.8" y="1023.5" width="3.3" height="3.3" fill="#1e5dac"/><rect x="435.8" y="1026.5" width="3.3" height="3.3" fill="#2d6ab8"/><rect x="438.8" y="1026.5" width="3.3" height="3.3" fill="#adc0db"/><rect x="441.8" y="1026.5" width="3.3" height="3.3" fill="#afc2dd"/><rect x="444.8" y="1026.5" width="3.3" height="3.3" fill="#b9cce7"/><rect x="447.8" y="1026.5" width="3.3" height="3.3" fill="#b3c6e0"/><rect x="450.8" y="1026.5" width="3.3" height="3.3" fill="#b3c6e0"/><rect x="453.8" y="1026.5" width="3.3" height="3.3" fill="#c5d8f2"/><rect x="456.8" y="1026.5" width="3.3" height="3.3" fill="#cbdef8"/><rect x="459.8" y="1026.5" width="3.3" height="3.3" fill="#d0e3fd"/><rect x="462.8" y="1026.5" width="3.3" height="3.3" fill="#b5c8e2"/><rect x="465.8" y="1026.5" width="3.3" height="3.3" fill="#c0d3ed"/><rect x="468.8" y="1026.5" width="3.3" height="3.3" fill="#bccfe9"/><rect x="471.8" y="1026.5" width="3.3" height="3.3" fill="#c6d9f3"/><rect x="474.8" y="1026.5" width="3.3" height="3.3" fill="#c2d5ef"/><rect x="477.8" y="1026.5" width="3.3" height="3.3" fill="#3875c3"/><rect x="480.8" y="1026.5" width="3.3" height="3.3" fill="#dcd2e6"/><rect x="483.8" y="1026.5" width="3.3" height="3.3" fill="#d1c7db"/><rect x="486.8" y="1026.5" width="3.3" height="3.3" fill="#e8def2"/><rect x="489.8" y="1026.5" width="3.3" height="3.3" fill="#d4cade"/><rect x="492.8" y="1026.5" width="3.3" height="3.3" fill="#e5dbef"/><rect x="435.8" y="1029.5" width="3.3" height="3.3" fill="#bed0ea"/><rect x="438.8" y="1029.5" width="3.3" height="3.3" fill="#ccdef8"/><rect x="441.8" y="1029.5" width="3.3" height="3.3" fill="#bfd1eb"/><rect x="444.8" y="1029.5" width="3.3" height="3.3" fill="#c2d4ee"/><rect x="447.8" y="1029.5" width="3.3" height="3.3" fill="#bacde6"/><rect x="450.8" y="1029.5" width="3.3" height="3.3" fill="#c4d7f0"/><rect x="453.8" y="1029.5" width="3.3" height="3.3" fill="#bacde6"/><rect x="456.8" y="1029.5" width="3.3" height="3.3" fill="#ccdff8"/><rect x="459.8" y="1029.5" width="3.3" height="3.3" fill="#c3d6ef"/><rect x="462.8" y="1029.5" width="3.3" height="3.3" fill="#b5c8e1"/><rect x="465.8" y="1029.5" width="3.3" height="3.3" fill="#b9cce5"/><rect x="468.8" y="1029.5" width="3.3" height="3.3" fill="#bed1ea"/><rect x="471.8" y="1029.5" width="3.3" height="3.3" fill="#cbdef7"/><rect x="474.8" y="1029.5" width="3.3" height="3.3" fill="#b7cae3"/><rect x="477.8" y="1029.5" width="3.3" height="3.3" fill="#c5d7f1"/><rect x="480.8" y="1029.5" width="3.3" height="3.3" fill="#e6dcf0"/><rect x="483.8" y="1029.5" width="3.3" height="3.3" fill="#d2c8dc"/><rect x="486.8" y="1029.5" width="3.3" height="3.3" fill="#e7ddf1"/><rect x="489.8" y="1029.5" width="3.3" height="3.3" fill="#d2c8dc"/><rect x="492.8" y="1029.5" width="3.3" height="3.3" fill="#d3c9dd"/><rect x="435.8" y="1032.5" width="3.3" height="3.3" fill="#2760ac"/><rect x="438.8" y="1032.5" width="3.3" height="3.3" fill="#1a539f"/><rect x="441.8" y="1032.5" width="3.3" height="3.3" fill="#316ab6"/><rect x="444.8" y="1032.5" width="3.3" height="3.3" fill="#235ca8"/><rect x="447.8" y="1032.5" width="3.3" height="3.3" fill="#1d56a2"/><rect x="450.8" y="1032.5" width="3.3" height="3.3" fill="#2e67b3"/><rect x="453.8" y="1032.5" width="3.3" height="3.3" fill="#134c98"/><rect x="456.8" y="1032.5" width="3.3" height="3.3" fill="#2c65b1"/><rect x="459.8" y="1032.5" width="3.3" height="3.3" fill="#134c98"/><rect x="462.8" y="1032.5" width="3.3" height="3.3" fill="#17509c"/><rect x="465.8" y="1032.5" width="3.3" height="3.3" fill="#346db9"/><rect x="468.8" y="1032.5" width="3.3" height="3.3" fill="#2a63af"/><rect x="471.8" y="1032.5" width="3.3" height="3.3" fill="#1a539f"/><rect x="474.8" y="1032.5" width="3.3" height="3.3" fill="#164f9b"/><rect x="477.8" y="1032.5" width="3.3" height="3.3" fill="#356eba"/><rect x="480.8" y="1032.5" width="3.3" height="3.3" fill="#e1e6f5"/><rect x="483.8" y="1032.5" width="3.3" height="3.3" fill="#2f68b4"/><rect x="486.8" y="1032.5" width="3.3" height="3.3" fill="#17509c"/><rect x="489.8" y="1032.5" width="3.3" height="3.3" fill="#2861ad"/><rect x="492.8" y="1032.5" width="3.3" height="3.3" fill="#1e57a3"/><rect x="435.8" y="1035.5" width="3.3" height="3.3" fill="#184f99"/><rect x="438.8" y="1035.5" width="3.3" height="3.3" fill="#1b529c"/><rect x="441.8" y="1035.5" width="3.3" height="3.3" fill="#265da7"/><rect x="444.8" y="1035.5" width="3.3" height="3.3" fill="#1c539d"/><rect x="447.8" y="1035.5" width="3.3" height="3.3" fill="#1d549e"/><rect x="450.8" y="1035.5" width="3.3" height="3.3" fill="#144b95"/><rect x="453.8" y="1035.5" width="3.3" height="3.3" fill="#2d64ae"/><rect x="456.8" y="1035.5" width="3.3" height="3.3" fill="#275ea8"/><rect x="459.8" y="1035.5" width="3.3" height="3.3" fill="#2c63ad"/><rect x="462.8" y="1035.5" width="3.3" height="3.3" fill="#1f56a0"/><rect x="465.8" y="1035.5" width="3.3" height="3.3" fill="#2e65af"/><rect x="468.8" y="1035.5" width="3.3" height="3.3" fill="#2259a3"/><rect x="471.8" y="1035.5" width="3.3" height="3.3" fill="#255ca6"/><rect x="474.8" y="1035.5" width="3.3" height="3.3" fill="#245ba5"/><rect x="477.8" y="1035.5" width="3.3" height="3.3" fill="#2a61ab"/><rect x="480.8" y="1035.5" width="3.3" height="3.3" fill="#d8ddec"/><rect x="483.8" y="1035.5" width="3.3" height="3.3" fill="#134a94"/><rect x="486.8" y="1035.5" width="3.3" height="3.3" fill="#114892"/><rect x="489.8" y="1035.5" width="3.3" height="3.3" fill="#174e98"/><rect x="492.8" y="1035.5" width="3.3" height="3.3" fill="#114892"/><rect x="435.8" y="1038.5" width="3.3" height="3.3" fill="#2d63ac"/><rect x="438.8" y="1038.5" width="3.3" height="3.3" fill="#1e549d"/><rect x="441.8" y="1038.5" width="3.3" height="3.3" fill="#285ea7"/><rect x="444.8" y="1038.5" width="3.3" height="3.3" fill="#0d438c"/><rect x="447.8" y="1038.5" width="3.3" height="3.3" fill="#1d539c"/><rect x="450.8" y="1038.5" width="3.3" height="3.3" fill="#2d63ac"/><rect x="453.8" y="1038.5" width="3.3" height="3.3" fill="#2359a2"/><rect x="456.8" y="1038.5" width="3.3" height="3.3" fill="#1c529b"/><rect x="459.8" y="1038.5" width="3.3" height="3.3" fill="#1d539c"/><rect x="462.8" y="1038.5" width="3.3" height="3.3" fill="#10468f"/><rect x="465.8" y="1038.5" width="3.3" height="3.3" fill="#124891"/><rect x="468.8" y="1038.5" width="3.3" height="3.3" fill="#124891"/><rect x="471.8" y="1038.5" width="3.3" height="3.3" fill="#1a5099"/><rect x="474.8" y="1038.5" width="3.3" height="3.3" fill="#1a5099"/><rect x="477.8" y="1038.5" width="3.3" height="3.3" fill="#2c62ab"/><rect x="480.8" y="1038.5" width="3.3" height="3.3" fill="#cfd4e3"/><rect x="483.8" y="1038.5" width="3.3" height="3.3" fill="#164c95"/><rect x="486.8" y="1038.5" width="3.3" height="3.3" fill="#164c95"/><rect x="489.8" y="1038.5" width="3.3" height="3.3" fill="#124891"/><rect x="492.8" y="1038.5" width="3.3" height="3.3" fill="#174d96"/><rect x="435.8" y="1041.5" width="3.3" height="3.3" fill="#13478e"/><rect x="438.8" y="1041.5" width="3.3" height="3.3" fill="#1c5097"/><rect x="441.8" y="1041.5" width="3.3" height="3.3" fill="#0c4087"/><rect x="444.8" y="1041.5" width="3.3" height="3.3" fill="#2c60a7"/><rect x="447.8" y="1041.5" width="3.3" height="3.3" fill="#184c93"/><rect x="450.8" y="1041.5" width="3.3" height="3.3" fill="#2c60a7"/><rect x="453.8" y="1041.5" width="3.3" height="3.3" fill="#23579e"/><rect x="456.8" y="1041.5" width="3.3" height="3.3" fill="#23579e"/><rect x="459.8" y="1041.5" width="3.3" height="3.3" fill="#1b4f96"/><rect x="462.8" y="1041.5" width="3.3" height="3.3" fill="#2d61a8"/><rect x="465.8" y="1041.5" width="3.3" height="3.3" fill="#0f438a"/><rect x="468.8" y="1041.5" width="3.3" height="3.3" fill="#23579e"/><rect x="471.8" y="1041.5" width="3.3" height="3.3" fill="#154990"/><rect x="474.8" y="1041.5" width="3.3" height="3.3" fill="#23579e"/><rect x="477.8" y="1041.5" width="3.3" height="3.3" fill="#e4e9f8"/><rect x="480.8" y="1041.5" width="3.3" height="3.3" fill="#cfd4e3"/><rect x="483.8" y="1041.5" width="3.3" height="3.3" fill="#12468d"/><rect x="486.8" y="1041.5" width="3.3" height="3.3" fill="#0b3f86"/><rect x="489.8" y="1041.5" width="3.3" height="3.3" fill="#13478e"/><rect x="492.8" y="1041.5" width="3.3" height="3.3" fill="#0d4188"/><rect x="435.8" y="1044.5" width="3.3" height="3.3" fill="#17488f"/><rect x="438.8" y="1044.5" width="3.3" height="3.3" fill="#2c5da4"/><rect x="441.8" y="1044.5" width="3.3" height="3.3" fill="#16478e"/><rect x="444.8" y="1044.5" width="3.3" height="3.3" fill="#14458c"/><rect x="447.8" y="1044.5" width="3.3" height="3.3" fill="#194a91"/><rect x="450.8" y="1044.5" width="3.3" height="3.3" fill="#13448b"/><rect x="453.8" y="1044.5" width="3.3" height="3.3" fill="#23549b"/><rect x="456.8" y="1044.5" width="3.3" height="3.3" fill="#22539a"/><rect x="459.8" y="1044.5" width="3.3" height="3.3" fill="#0e3f86"/><rect x="462.8" y="1044.5" width="3.3" height="3.3" fill="#114289"/><rect x="465.8" y="1044.5" width="3.3" height="3.3" fill="#215299"/><rect x="468.8" y="1044.5" width="3.3" height="3.3" fill="#2a5ba2"/><rect x="471.8" y="1044.5" width="3.3" height="3.3" fill="#205198"/><rect x="474.8" y="1044.5" width="3.3" height="3.3" fill="#184990"/><rect x="477.8" y="1044.5" width="3.3" height="3.3" fill="#edf2ff"/><rect x="480.8" y="1044.5" width="3.3" height="3.3" fill="#cacfde"/><rect x="483.8" y="1044.5" width="3.3" height="3.3" fill="#0b3c83"/><rect x="486.8" y="1044.5" width="3.3" height="3.3" fill="#25569d"/><rect x="489.8" y="1044.5" width="3.3" height="3.3" fill="#17488f"/><rect x="492.8" y="1044.5" width="3.3" height="3.3" fill="#0a3b82"/><rect x="435.8" y="1047.5" width="3.3" height="3.3" fill="#19498e"/><rect x="438.8" y="1047.5" width="3.3" height="3.3" fill="#29599e"/><rect x="441.8" y="1047.5" width="3.3" height="3.3" fill="#18488d"/><rect x="444.8" y="1047.5" width="3.3" height="3.3" fill="#124287"/><rect x="447.8" y="1047.5" width="3.3" height="3.3" fill="#09397e"/><rect x="450.8" y="1047.5" width="3.3" height="3.3" fill="#08387d"/><rect x="453.8" y="1047.5" width="3.3" height="3.3" fill="#26569b"/><rect x="456.8" y="1047.5" width="3.3" height="3.3" fill="#17478c"/><rect x="459.8" y="1047.5" width="3.3" height="3.3" fill="#27579c"/><rect x="462.8" y="1047.5" width="3.3" height="3.3" fill="#07377c"/><rect x="465.8" y="1047.5" width="3.3" height="3.3" fill="#0e3e83"/><rect x="468.8" y="1047.5" width="3.3" height="3.3" fill="#07377c"/><rect x="471.8" y="1047.5" width="3.3" height="3.3" fill="#144489"/><rect x="474.8" y="1047.5" width="3.3" height="3.3" fill="#08387d"/><rect x="477.8" y="1047.5" width="3.3" height="3.3" fill="#d3d8e7"/><rect x="480.8" y="1047.5" width="3.3" height="3.3" fill="#144489"/><rect x="483.8" y="1047.5" width="3.3" height="3.3" fill="#114186"/><rect x="486.8" y="1047.5" width="3.3" height="3.3" fill="#07377c"/><rect x="489.8" y="1047.5" width="3.3" height="3.3" fill="#07377c"/><rect x="492.8" y="1047.5" width="3.3" height="3.3" fill="#28589d"/><rect x="435.8" y="1050.5" width="3.3" height="3.3" fill="#0a387c"/><rect x="438.8" y="1050.5" width="3.3" height="3.3" fill="#164488"/><rect x="441.8" y="1050.5" width="3.3" height="3.3" fill="#124084"/><rect x="444.8" y="1050.5" width="3.3" height="3.3" fill="#174589"/><rect x="447.8" y="1050.5" width="3.3" height="3.3" fill="#073579"/><rect x="450.8" y="1050.5" width="3.3" height="3.3" fill="#0f3d81"/><rect x="453.8" y="1050.5" width="3.3" height="3.3" fill="#073579"/><rect x="456.8" y="1050.5" width="3.3" height="3.3" fill="#174589"/><rect x="459.8" y="1050.5" width="3.3" height="3.3" fill="#255397"/><rect x="462.8" y="1050.5" width="3.3" height="3.3" fill="#19478b"/><rect x="465.8" y="1050.5" width="3.3" height="3.3" fill="#225094"/><rect x="468.8" y="1050.5" width="3.3" height="3.3" fill="#0b397d"/><rect x="471.8" y="1050.5" width="3.3" height="3.3" fill="#043276"/><rect x="474.8" y="1050.5" width="3.3" height="3.3" fill="#174589"/><rect x="477.8" y="1050.5" width="3.3" height="3.3" fill="#154387"/><rect x="480.8" y="1050.5" width="3.3" height="3.3" fill="#18468a"/><rect x="483.8" y="1050.5" width="3.3" height="3.3" fill="#113f83"/><rect x="486.8" y="1050.5" width="3.3" height="3.3" fill="#1a488c"/><rect x="489.8" y="1050.5" width="3.3" height="3.3" fill="#1e4c90"/><rect x="492.8" y="1050.5" width="3.3" height="3.3" fill="#245296"/><rect x="435.8" y="1053.5" width="3.3" height="3.3" fill="#0d397b"/><rect x="438.8" y="1053.5" width="3.3" height="3.3" fill="#123e80"/><rect x="441.8" y="1053.5" width="3.3" height="3.3" fill="#1f4b8d"/><rect x="444.8" y="1053.5" width="3.3" height="3.3" fill="#0a3678"/><rect x="447.8" y="1053.5" width="3.3" height="3.3" fill="#063274"/><rect x="450.8" y="1053.5" width="3.3" height="3.3" fill="#0d397b"/><rect x="453.8" y="1053.5" width="3.3" height="3.3" fill="#053173"/><rect x="456.8" y="1053.5" width="3.3" height="3.3" fill="#1d498b"/><rect x="459.8" y="1053.5" width="3.3" height="3.3" fill="#1f4b8d"/><rect x="462.8" y="1053.5" width="3.3" height="3.3" fill="#0d397b"/><rect x="465.8" y="1053.5" width="3.3" height="3.3" fill="#063274"/><rect x="468.8" y="1053.5" width="3.3" height="3.3" fill="#043072"/><rect x="471.8" y="1053.5" width="3.3" height="3.3" fill="#0a3678"/><rect x="474.8" y="1053.5" width="3.3" height="3.3" fill="#053173"/><rect x="477.8" y="1053.5" width="3.3" height="3.3" fill="#113d7f"/><rect x="480.8" y="1053.5" width="3.3" height="3.3" fill="#164284"/><rect x="483.8" y="1053.5" width="3.3" height="3.3" fill="#0a3678"/><rect x="486.8" y="1053.5" width="3.3" height="3.3" fill="#043072"/><rect x="489.8" y="1053.5" width="3.3" height="3.3" fill="#1b4789"/><rect x="492.8" y="1053.5" width="3.3" height="3.3" fill="#032f71"/>
</g>
<rect x="516" y="972" width="200" height="108" fill="#2b2b2b" />
<g clip-path="url(#av6)">
<rect x="586.0" y="996.0" width="3.3" height="3.3" fill="#111117"/><rect x="589.0" y="996.0" width="3.3" height="3.3" fill="#121218"/><rect x="592.0" y="996.0" width="3.3" height="3.3" fill="#0b0b11"/><rect x="595.0" y="996.0" width="3.3" height="3.3" fill="#07070d"/><rect x="598.0" y="996.0" width="3.3" height="3.3" fill="#020208"/><rect x="601.0" y="996.0" width="3.3" height="3.3" fill="#0f0f15"/><rect x="604.0" y="996.0" width="3.3" height="3.3" fill="#0b0b11"/><rect x="607.0" y="996.0" width="3.3" height="3.3" fill="#111117"/><rect x="610.0" y="996.0" width="3.3" height="3.3" fill="#09090f"/><rect x="613.0" y="996.0" width="3.3" height="3.3" fill="#111117"/><rect x="616.0" y="996.0" width="3.3" height="3.3" fill="#07070d"/><rect x="619.0" y="996.0" width="3.3" height="3.3" fill="#121218"/><rect x="622.0" y="996.0" width="3.3" height="3.3" fill="#101016"/><rect x="625.0" y="996.0" width="3.3" height="3.3" fill="#0a0a10"/><rect x="628.0" y="996.0" width="3.3" height="3.3" fill="#0c0c12"/><rect x="631.0" y="996.0" width="3.3" height="3.3" fill="#0f0f15"/><rect x="634.0" y="996.0" width="3.3" height="3.3" fill="#05050b"/><rect x="637.0" y="996.0" width="3.3" height="3.3" fill="#0d0d13"/><rect x="640.0" y="996.0" width="3.3" height="3.3" fill="#121218"/><rect x="643.0" y="996.0" width="3.3" height="3.3" fill="#07070d"/><rect x="586.0" y="999.0" width="3.3" height="3.3" fill="#121218"/><rect x="589.0" y="999.0" width="3.3" height="3.3" fill="#0f0f15"/><rect x="592.0" y="999.0" width="3.3" height="3.3" fill="#121218"/><rect x="595.0" y="999.0" width="3.3" height="3.3" fill="#08080e"/><rect x="598.0" y="999.0" width="3.3" height="3.3" fill="#030309"/><rect x="601.0" y="999.0" width="3.3" height="3.3" fill="#121218"/><rect x="604.0" y="999.0" width="3.3" height="3.3" fill="#121218"/><rect x="607.0" y="999.0" width="3.3" height="3.3" fill="#0a0a10"/><rect x="610.0" y="999.0" width="3.3" height="3.3" fill="#977747"/><rect x="613.0" y="999.0" width="3.3" height="3.3" fill="#997949"/><rect x="616.0" y="999.0" width="3.3" height="3.3" fill="#a28252"/><rect x="619.0" y="999.0" width="3.3" height="3.3" fill="#07070d"/><rect x="622.0" y="999.0" width="3.3" height="3.3" fill="#15151b"/><rect x="625.0" y="999.0" width="3.3" height="3.3" fill="#0d0d13"/><rect x="628.0" y="999.0" width="3.3" height="3.3" fill="#06060c"/><rect x="631.0" y="999.0" width="3.3" height="3.3" fill="#0f0f15"/><rect x="634.0" y="999.0" width="3.3" height="3.3" fill="#09090f"/><rect x="637.0" y="999.0" width="3.3" height="3.3" fill="#14141a"/><rect x="640.0" y="999.0" width="3.3" height="3.3" fill="#14141a"/><rect x="643.0" y="999.0" width="3.3" height="3.3" fill="#0c0c12"/><rect x="586.0" y="1002.0" width="3.3" height="3.3" fill="#0e0e14"/><rect x="589.0" y="1002.0" width="3.3" height="3.3" fill="#0f0f15"/><rect x="592.0" y="1002.0" width="3.3" height="3.3" fill="#121218"/><rect x="595.0" y="1002.0" width="3.3" height="3.3" fill="#15151b"/><rect x="598.0" y="1002.0" width="3.3" height="3.3" fill="#3052ae"/><rect x="601.0" y="1002.0" width="3.3" height="3.3" fill="#3759b5"/><rect x="604.0" y="1002.0" width="3.3" height="3.3" fill="#3c5eba"/><rect x="607.0" y="1002.0" width="3.3" height="3.3" fill="#08080e"/><rect x="610.0" y="1002.0" width="3.3" height="3.3" fill="#a18151"/><rect x="613.0" y="1002.0" width="3.3" height="3.3" fill="#977747"/><rect x="616.0" y="1002.0" width="3.3" height="3.3" fill="#a78757"/><rect x="619.0" y="1002.0" width="3.3" height="3.3" fill="#e6f0ff"/><rect x="622.0" y="1002.0" width="3.3" height="3.3" fill="#e9f3ff"/><rect x="625.0" y="1002.0" width="3.3" height="3.3" fill="#dfe9f8"/><rect x="628.0" y="1002.0" width="3.3" height="3.3" fill="#dee8f7"/><rect x="631.0" y="1002.0" width="3.3" height="3.3" fill="#131319"/><rect x="634.0" y="1002.0" width="3.3" height="3.3" fill="#0f0f15"/><rect x="637.0" y="1002.0" width="3.3" height="3.3" fill="#020208"/><rect x="640.0" y="1002.0" width="3.3" height="3.3" fill="#111117"/><rect x="643.0" y="1002.0" width="3.3" height="3.3" fill="#020208"/><rect x="586.0" y="1005.0" width="3.3" height="3.3" fill="#08080e"/><rect x="589.0" y="1005.0" width="3.3" height="3.3" fill="#14141a"/><rect x="592.0" y="1005.0" width="3.3" height="3.3" fill="#0e0e14"/><rect x="595.0" y="1005.0" width="3.3" height="3.3" fill="#08080e"/><rect x="598.0" y="1005.0" width="3.3" height="3.3" fill="#3759b5"/><rect x="601.0" y="1005.0" width="3.3" height="3.3" fill="#3759b5"/><rect x="604.0" y="1005.0" width="3.3" height="3.3" fill="#3254b0"/><rect x="607.0" y="1005.0" width="3.3" height="3.3" fill="#15151b"/><rect x="610.0" y="1005.0" width="3.3" height="3.3" fill="#977747"/><rect x="613.0" y="1005.0" width="3.3" height="3.3" fill="#9e7e4e"/><rect x="616.0" y="1005.0" width="3.3" height="3.3" fill="#a48454"/><rect x="619.0" y="1005.0" width="3.3" height="3.3" fill="#5775bd"/><rect x="622.0" y="1005.0" width="3.3" height="3.3" fill="#5472ba"/><rect x="625.0" y="1005.0" width="3.3" height="3.3" fill="#617fc7"/><rect x="628.0" y="1005.0" width="3.3" height="3.3" fill="#edf7ff"/><rect x="631.0" y="1005.0" width="3.3" height="3.3" fill="#121218"/><rect x="634.0" y="1005.0" width="3.3" height="3.3" fill="#111117"/><rect x="637.0" y="1005.0" width="3.3" height="3.3" fill="#0c0c12"/><rect x="640.0" y="1005.0" width="3.3" height="3.3" fill="#0b0b11"/><rect x="643.0" y="1005.0" width="3.3" height="3.3" fill="#101016"/><rect x="586.0" y="1008.0" width="3.3" height="3.3" fill="#0a0a10"/><rect x="589.0" y="1008.0" width="3.3" height="3.3" fill="#030309"/><rect x="592.0" y="1008.0" width="3.3" height="3.3" fill="#101016"/><rect x="595.0" y="1008.0" width="3.3" height="3.3" fill="#07070d"/><rect x="598.0" y="1008.0" width="3.3" height="3.3" fill="#395bb7"/><rect x="601.0" y="1008.0" width="3.3" height="3.3" fill="#3f61bd"/><rect x="604.0" y="1008.0" width="3.3" height="3.3" fill="#3355b1"/><rect x="607.0" y="1008.0" width="3.3" height="3.3" fill="#3052ae"/><rect x="610.0" y="1008.0" width="3.3" height="3.3" fill="#987848"/><rect x="613.0" y="1008.0" width="3.3" height="3.3" fill="#a18151"/><rect x="616.0" y="1008.0" width="3.3" height="3.3" fill="#9d7d4d"/><rect x="619.0" y="1008.0" width="3.3" height="3.3" fill="#e1ebfa"/><rect x="622.0" y="1008.0" width="3.3" height="3.3" fill="#eef8ff"/><rect x="625.0" y="1008.0" width="3.3" height="3.3" fill="#5876be"/><rect x="628.0" y="1008.0" width="3.3" height="3.3" fill="#e8f2ff"/><rect x="631.0" y="1008.0" width="3.3" height="3.3" fill="#0b0b11"/><rect x="634.0" y="1008.0" width="3.3" height="3.3" fill="#0b0b11"/><rect x="637.0" y="1008.0" width="3.3" height="3.3" fill="#04040a"/><rect x="640.0" y="1008.0" width="3.3" height="3.3" fill="#09090f"/><rect x="643.0" y="1008.0" width="3.3" height="3.3" fill="#08080e"/><rect x="586.0" y="1011.0" width="3.3" height="3.3" fill="#121218"/><rect x="589.0" y="1011.0" width="3.3" height="3.3" fill="#08080e"/><rect x="592.0" y="1011.0" width="3.3" height="3.3" fill="#0f0f15"/><rect x="595.0" y="1011.0" width="3.3" height="3.3" fill="#15151b"/><rect x="598.0" y="1011.0" width="3.3" height="3.3" fill="#4264c0"/><rect x="601.0" y="1011.0" width="3.3" height="3.3" fill="#3759b5"/><rect x="604.0" y="1011.0" width="3.3" height="3.3" fill="#3c5eba"/><rect x="607.0" y="1011.0" width="3.3" height="3.3" fill="#3658b4"/><rect x="610.0" y="1011.0" width="3.3" height="3.3" fill="#9d7d4d"/><rect x="613.0" y="1011.0" width="3.3" height="3.3" fill="#9f7f4f"/><rect x="616.0" y="1011.0" width="3.3" height="3.3" fill="#a58555"/><rect x="619.0" y="1011.0" width="3.3" height="3.3" fill="#eef8ff"/><rect x="622.0" y="1011.0" width="3.3" height="3.3" fill="#dce6f5"/><rect x="625.0" y="1011.0" width="3.3" height="3.3" fill="#dde7f6"/><rect x="628.0" y="1011.0" width="3.3" height="3.3" fill="#ebf5ff"/><rect x="631.0" y="1011.0" width="3.3" height="3.3" fill="#101016"/><rect x="634.0" y="1011.0" width="3.3" height="3.3" fill="#09090f"/><rect x="637.0" y="1011.0" width="3.3" height="3.3" fill="#14141a"/><rect x="640.0" y="1011.0" width="3.3" height="3.3" fill="#131319"/><rect x="643.0" y="1011.0" width="3.3" height="3.3" fill="#030309"/><rect x="586.0" y="1014.0" width="3.3" height="3.3" fill="#05050b"/><rect x="589.0" y="1014.0" width="3.3" height="3.3" fill="#14141a"/><rect x="592.0" y="1014.0" width="3.3" height="3.3" fill="#0e0e14"/><rect x="595.0" y="1014.0" width="3.3" height="3.3" fill="#0a0a10"/><rect x="598.0" y="1014.0" width="3.3" height="3.3" fill="#3f61bd"/><rect x="601.0" y="1014.0" width="3.3" height="3.3" fill="#4062be"/><rect x="604.0" y="1014.0" width="3.3" height="3.3" fill="#395bb7"/><rect x="607.0" y="1014.0" width="3.3" height="3.3" fill="#395bb7"/><rect x="610.0" y="1014.0" width="3.3" height="3.3" fill="#987848"/><rect x="613.0" y="1014.0" width="3.3" height="3.3" fill="#9d7d4d"/><rect x="616.0" y="1014.0" width="3.3" height="3.3" fill="#987848"/><rect x="619.0" y="1014.0" width="3.3" height="3.3" fill="#0e0e14"/><rect x="622.0" y="1014.0" width="3.3" height="3.3" fill="#0e0e14"/><rect x="625.0" y="1014.0" width="3.3" height="3.3" fill="#04040a"/><rect x="628.0" y="1014.0" width="3.3" height="3.3" fill="#0e0e14"/><rect x="631.0" y="1014.0" width="3.3" height="3.3" fill="#030309"/><rect x="634.0" y="1014.0" width="3.3" height="3.3" fill="#04040a"/><rect x="637.0" y="1014.0" width="3.3" height="3.3" fill="#0e0e14"/><rect x="640.0" y="1014.0" width="3.3" height="3.3" fill="#0b0b11"/><rect x="643.0" y="1014.0" width="3.3" height="3.3" fill="#131319"/><rect x="586.0" y="1017.0" width="3.3" height="3.3" fill="#0e0e14"/><rect x="589.0" y="1017.0" width="3.3" height="3.3" fill="#101016"/><rect x="592.0" y="1017.0" width="3.3" height="3.3" fill="#04040a"/><rect x="595.0" y="1017.0" width="3.3" height="3.3" fill="#121218"/><rect x="598.0" y="1017.0" width="3.3" height="3.3" fill="#030309"/><rect x="601.0" y="1017.0" width="3.3" height="3.3" fill="#3c5eba"/><rect x="604.0" y="1017.0" width="3.3" height="3.3" fill="#4264c0"/><rect x="607.0" y="1017.0" width="3.3" height="3.3" fill="#4264c0"/><rect x="610.0" y="1017.0" width="3.3" height="3.3" fill="#4163bf"/><rect x="613.0" y="1017.0" width="3.3" height="3.3" fill="#0b0b11"/><rect x="616.0" y="1017.0" width="3.3" height="3.3" fill="#0f0f15"/><rect x="619.0" y="1017.0" width="3.3" height="3.3" fill="#111117"/><rect x="622.0" y="1017.0" width="3.3" height="3.3" fill="#04040a"/><rect x="625.0" y="1017.0" width="3.3" height="3.3" fill="#14141a"/><rect x="628.0" y="1017.0" width="3.3" height="3.3" fill="#14141a"/><rect x="631.0" y="1017.0" width="3.3" height="3.3" fill="#0a0a10"/><rect x="634.0" y="1017.0" width="3.3" height="3.3" fill="#111117"/><rect x="637.0" y="1017.0" width="3.3" height="3.3" fill="#0a0a10"/><rect x="640.0" y="1017.0" width="3.3" height="3.3" fill="#07070d"/><rect x="643.0" y="1017.0" width="3.3" height="3.3" fill="#101016"/><rect x="586.0" y="1020.0" width="3.3" height="3.3" fill="#030309"/><rect x="589.0" y="1020.0" width="3.3" height="3.3" fill="#121218"/><rect x="592.0" y="1020.0" width="3.3" height="3.3" fill="#15151b"/><rect x="595.0" y="1020.0" width="3.3" height="3.3" fill="#07070d"/><rect x="598.0" y="1020.0" width="3.3" height="3.3" fill="#14141a"/><rect x="601.0" y="1020.0" width="3.3" height="3.3" fill="#030309"/><rect x="604.0" y="1020.0" width="3.3" height="3.3" fill="#131319"/><rect x="607.0" y="1020.0" width="3.3" height="3.3" fill="#5363b3"/><rect x="610.0" y="1020.0" width="3.3" height="3.3" fill="#5666b6"/><rect x="613.0" y="1020.0" width="3.3" height="3.3" fill="#b69e86"/><rect x="616.0" y="1020.0" width="3.3" height="3.3" fill="#5e6ebe"/><rect x="619.0" y="1020.0" width="3.3" height="3.3" fill="#0c0c12"/><rect x="622.0" y="1020.0" width="3.3" height="3.3" fill="#020208"/><rect x="625.0" y="1020.0" width="3.3" height="3.3" fill="#05050b"/><rect x="628.0" y="1020.0" width="3.3" height="3.3" fill="#09090f"/><rect x="631.0" y="1020.0" width="3.3" height="3.3" fill="#030309"/><rect x="634.0" y="1020.0" width="3.3" height="3.3" fill="#15151b"/><rect x="637.0" y="1020.0" width="3.3" height="3.3" fill="#111117"/><rect x="640.0" y="1020.0" width="3.3" height="3.3" fill="#14141a"/><rect x="643.0" y="1020.0" width="3.3" height="3.3" fill="#101016"/><rect x="586.0" y="1023.0" width="3.3" height="3.3" fill="#08080e"/><rect x="589.0" y="1023.0" width="3.3" height="3.3" fill="#030309"/><rect x="592.0" y="1023.0" width="3.3" height="3.3" fill="#101016"/><rect x="595.0" y="1023.0" width="3.3" height="3.3" fill="#04040a"/><rect x="598.0" y="1023.0" width="3.3" height="3.3" fill="#0c0c12"/><rect x="601.0" y="1023.0" width="3.3" height="3.3" fill="#0b0b11"/><rect x="604.0" y="1023.0" width="3.3" height="3.3" fill="#0b0b11"/><rect x="607.0" y="1023.0" width="3.3" height="3.3" fill="#b79f87"/><rect x="610.0" y="1023.0" width="3.3" height="3.3" fill="#c0a890"/><rect x="613.0" y="1023.0" width="3.3" height="3.3" fill="#c0a890"/><rect x="616.0" y="1023.0" width="3.3" height="3.3" fill="#bba38b"/><rect x="619.0" y="1023.0" width="3.3" height="3.3" fill="#0d0d13"/><rect x="622.0" y="1023.0" width="3.3" height="3.3" fill="#09090f"/><rect x="625.0" y="1023.0" width="3.3" height="3.3" fill="#06060c"/><rect x="628.0" y="1023.0" width="3.3" height="3.3" fill="#06060c"/><rect x="631.0" y="1023.0" width="3.3" height="3.3" fill="#0d0d13"/><rect x="634.0" y="1023.0" width="3.3" height="3.3" fill="#14141a"/><rect x="637.0" y="1023.0" width="3.3" height="3.3" fill="#0a0a10"/><rect x="640.0" y="1023.0" width="3.3" height="3.3" fill="#05050b"/><rect x="643.0" y="1023.0" width="3.3" height="3.3" fill="#08080e"/><rect x="586.0" y="1026.0" width="3.3" height="3.3" fill="#06060c"/><rect x="589.0" y="1026.0" width="3.3" height="3.3" fill="#0d0d13"/><rect x="592.0" y="1026.0" width="3.3" height="3.3" fill="#111117"/><rect x="595.0" y="1026.0" width="3.3" height="3.3" fill="#0d0d13"/><rect x="598.0" y="1026.0" width="3.3" height="3.3" fill="#05050b"/><rect x="601.0" y="1026.0" width="3.3" height="3.3" fill="#08080e"/><rect x="604.0" y="1026.0" width="3.3" height="3.3" fill="#09090f"/><rect x="607.0" y="1026.0" width="3.3" height="3.3" fill="#bea68e"/><rect x="610.0" y="1026.0" width="3.3" height="3.3" fill="#6171c1"/><rect x="613.0" y="1026.0" width="3.3" height="3.3" fill="#5b6bbb"/><rect x="616.0" y="1026.0" width="3.3" height="3.3" fill="#5a6aba"/><rect x="619.0" y="1026.0" width="3.3" height="3.3" fill="#09090f"/><rect x="622.0" y="1026.0" width="3.3" height="3.3" fill="#0f0f15"/><rect x="625.0" y="1026.0" width="3.3" height="3.3" fill="#15151b"/><rect x="628.0" y="1026.0" width="3.3" height="3.3" fill="#05050b"/><rect x="631.0" y="1026.0" width="3.3" height="3.3" fill="#0e0e14"/><rect x="634.0" y="1026.0" width="3.3" height="3.3" fill="#e3e3e3"/><rect x="637.0" y="1026.0" width="3.3" height="3.3" fill="#dddddd"/><rect x="640.0" y="1026.0" width="3.3" height="3.3" fill="#020208"/><rect x="643.0" y="1026.0" width="3.3" height="3.3" fill="#111117"/><rect x="586.0" y="1029.0" width="3.3" height="3.3" fill="#04040a"/><rect x="589.0" y="1029.0" width="3.3" height="3.3" fill="#101016"/><rect x="592.0" y="1029.0" width="3.3" height="3.3" fill="#04040a"/><rect x="595.0" y="1029.0" width="3.3" height="3.3" fill="#09090f"/><rect x="598.0" y="1029.0" width="3.3" height="3.3" fill="#607cce"/><rect x="601.0" y="1029.0" width="3.3" height="3.3" fill="#6f8bdd"/><rect x="604.0" y="1029.0" width="3.3" height="3.3" fill="#1f1f2e"/><rect x="607.0" y="1029.0" width="3.3" height="3.3" fill="#5363b3"/><rect x="610.0" y="1029.0" width="3.3" height="3.3" fill="#c7af97"/><rect x="613.0" y="1029.0" width="3.3" height="3.3" fill="#c3ab93"/><rect x="616.0" y="1029.0" width="3.3" height="3.3" fill="#5060b0"/><rect x="619.0" y="1029.0" width="3.3" height="3.3" fill="#030309"/><rect x="622.0" y="1029.0" width="3.3" height="3.3" fill="#14141a"/><rect x="625.0" y="1029.0" width="3.3" height="3.3" fill="#111117"/><rect x="628.0" y="1029.0" width="3.3" height="3.3" fill="#0f0f15"/><rect x="631.0" y="1029.0" width="3.3" height="3.3" fill="#101016"/><rect x="634.0" y="1029.0" width="3.3" height="3.3" fill="#e9e9e9"/><rect x="637.0" y="1029.0" width="3.3" height="3.3" fill="#e1e1e1"/><rect x="640.0" y="1029.0" width="3.3" height="3.3" fill="#0a0a10"/><rect x="643.0" y="1029.0" width="3.3" height="3.3" fill="#06060c"/><rect x="586.0" y="1032.0" width="3.3" height="3.3" fill="#131319"/><rect x="589.0" y="1032.0" width="3.3" height="3.3" fill="#111117"/><rect x="592.0" y="1032.0" width="3.3" height="3.3" fill="#111117"/><rect x="595.0" y="1032.0" width="3.3" height="3.3" fill="#06060c"/><rect x="598.0" y="1032.0" width="3.3" height="3.3" fill="#6b87d9"/><rect x="601.0" y="1032.0" width="3.3" height="3.3" fill="#232332"/><rect x="604.0" y="1032.0" width="3.3" height="3.3" fill="#272736"/><rect x="607.0" y="1032.0" width="3.3" height="3.3" fill="#212130"/><rect x="610.0" y="1032.0" width="3.3" height="3.3" fill="#030309"/><rect x="613.0" y="1032.0" width="3.3" height="3.3" fill="#0d0d13"/><rect x="616.0" y="1032.0" width="3.3" height="3.3" fill="#020208"/><rect x="619.0" y="1032.0" width="3.3" height="3.3" fill="#09090f"/><rect x="622.0" y="1032.0" width="3.3" height="3.3" fill="#04040a"/><rect x="625.0" y="1032.0" width="3.3" height="3.3" fill="#14141a"/><rect x="628.0" y="1032.0" width="3.3" height="3.3" fill="#020208"/><rect x="631.0" y="1032.0" width="3.3" height="3.3" fill="#14141a"/><rect x="634.0" y="1032.0" width="3.3" height="3.3" fill="#eeeeee"/><rect x="637.0" y="1032.0" width="3.3" height="3.3" fill="#e4e4e4"/><rect x="640.0" y="1032.0" width="3.3" height="3.3" fill="#121218"/><rect x="643.0" y="1032.0" width="3.3" height="3.3" fill="#030309"/><rect x="586.0" y="1035.0" width="3.3" height="3.3" fill="#04040a"/><rect x="589.0" y="1035.0" width="3.3" height="3.3" fill="#020208"/><rect x="592.0" y="1035.0" width="3.3" height="3.3" fill="#030309"/><rect x="595.0" y="1035.0" width="3.3" height="3.3" fill="#020208"/><rect x="598.0" y="1035.0" width="3.3" height="3.3" fill="#708cde"/><rect x="601.0" y="1035.0" width="3.3" height="3.3" fill="#6b87d9"/><rect x="604.0" y="1035.0" width="3.3" height="3.3" fill="#627ed0"/><rect x="607.0" y="1035.0" width="3.3" height="3.3" fill="#171726"/><rect x="610.0" y="1035.0" width="3.3" height="3.3" fill="#09090f"/><rect x="613.0" y="1035.0" width="3.3" height="3.3" fill="#0d0d13"/><rect x="616.0" y="1035.0" width="3.3" height="3.3" fill="#0d0d13"/><rect x="619.0" y="1035.0" width="3.3" height="3.3" fill="#0e0e14"/><rect x="622.0" y="1035.0" width="3.3" height="3.3" fill="#0b0b11"/><rect x="625.0" y="1035.0" width="3.3" height="3.3" fill="#07070d"/><rect x="628.0" y="1035.0" width="3.3" height="3.3" fill="#04040a"/><rect x="631.0" y="1035.0" width="3.3" height="3.3" fill="#131319"/><rect x="634.0" y="1035.0" width="3.3" height="3.3" fill="#05050b"/><rect x="637.0" y="1035.0" width="3.3" height="3.3" fill="#0a0a10"/><rect x="640.0" y="1035.0" width="3.3" height="3.3" fill="#121218"/><rect x="643.0" y="1035.0" width="3.3" height="3.3" fill="#0d0d13"/><rect x="586.0" y="1038.0" width="3.3" height="3.3" fill="#14141a"/><rect x="589.0" y="1038.0" width="3.3" height="3.3" fill="#121218"/><rect x="592.0" y="1038.0" width="3.3" height="3.3" fill="#0c0c12"/><rect x="595.0" y="1038.0" width="3.3" height="3.3" fill="#04040a"/><rect x="598.0" y="1038.0" width="3.3" height="3.3" fill="#6b87d9"/><rect x="601.0" y="1038.0" width="3.3" height="3.3" fill="#718ddf"/><rect x="604.0" y="1038.0" width="3.3" height="3.3" fill="#212130"/><rect x="607.0" y="1038.0" width="3.3" height="3.3" fill="#1d1d2c"/><rect x="610.0" y="1038.0" width="3.3" height="3.3" fill="#131319"/><rect x="613.0" y="1038.0" width="3.3" height="3.3" fill="#05050b"/><rect x="616.0" y="1038.0" width="3.3" height="3.3" fill="#14141a"/><rect x="619.0" y="1038.0" width="3.3" height="3.3" fill="#131319"/><rect x="622.0" y="1038.0" width="3.3" height="3.3" fill="#131319"/><rect x="625.0" y="1038.0" width="3.3" height="3.3" fill="#08080e"/><rect x="628.0" y="1038.0" width="3.3" height="3.3" fill="#07070d"/><rect x="631.0" y="1038.0" width="3.3" height="3.3" fill="#04040a"/><rect x="634.0" y="1038.0" width="3.3" height="3.3" fill="#09090f"/><rect x="637.0" y="1038.0" width="3.3" height="3.3" fill="#131319"/><rect x="640.0" y="1038.0" width="3.3" height="3.3" fill="#09090f"/><rect x="643.0" y="1038.0" width="3.3" height="3.3" fill="#020208"/><rect x="586.0" y="1041.0" width="3.3" height="3.3" fill="#08080e"/><rect x="589.0" y="1041.0" width="3.3" height="3.3" fill="#030309"/><rect x="592.0" y="1041.0" width="3.3" height="3.3" fill="#0e0e14"/><rect x="595.0" y="1041.0" width="3.3" height="3.3" fill="#111117"/><rect x="598.0" y="1041.0" width="3.3" height="3.3" fill="#728ee0"/><rect x="601.0" y="1041.0" width="3.3" height="3.3" fill="#6783d5"/><rect x="604.0" y="1041.0" width="3.3" height="3.3" fill="#262635"/><rect x="607.0" y="1041.0" width="3.3" height="3.3" fill="#1e1e2d"/><rect x="610.0" y="1041.0" width="3.3" height="3.3" fill="#0c0c12"/><rect x="613.0" y="1041.0" width="3.3" height="3.3" fill="#111117"/><rect x="616.0" y="1041.0" width="3.3" height="3.3" fill="#0b0b11"/><rect x="619.0" y="1041.0" width="3.3" height="3.3" fill="#09090f"/><rect x="622.0" y="1041.0" width="3.3" height="3.3" fill="#15151b"/><rect x="625.0" y="1041.0" width="3.3" height="3.3" fill="#121218"/><rect x="628.0" y="1041.0" width="3.3" height="3.3" fill="#0d0d13"/><rect x="631.0" y="1041.0" width="3.3" height="3.3" fill="#131319"/><rect x="634.0" y="1041.0" width="3.3" height="3.3" fill="#0e0e14"/><rect x="637.0" y="1041.0" width="3.3" height="3.3" fill="#111117"/><rect x="640.0" y="1041.0" width="3.3" height="3.3" fill="#030309"/><rect x="643.0" y="1041.0" width="3.3" height="3.3" fill="#04040a"/><rect x="586.0" y="1044.0" width="3.3" height="3.3" fill="#04040a"/><rect x="589.0" y="1044.0" width="3.3" height="3.3" fill="#0e0e14"/><rect x="592.0" y="1044.0" width="3.3" height="3.3" fill="#101016"/><rect x="595.0" y="1044.0" width="3.3" height="3.3" fill="#05050b"/><rect x="598.0" y="1044.0" width="3.3" height="3.3" fill="#6a86d8"/><rect x="601.0" y="1044.0" width="3.3" height="3.3" fill="#212130"/><rect x="604.0" y="1044.0" width="3.3" height="3.3" fill="#151524"/><rect x="607.0" y="1044.0" width="3.3" height="3.3" fill="#6d89db"/><rect x="610.0" y="1044.0" width="3.3" height="3.3" fill="#09090f"/><rect x="613.0" y="1044.0" width="3.3" height="3.3" fill="#05050b"/><rect x="616.0" y="1044.0" width="3.3" height="3.3" fill="#101016"/><rect x="619.0" y="1044.0" width="3.3" height="3.3" fill="#14141a"/><rect x="622.0" y="1044.0" width="3.3" height="3.3" fill="#05050b"/><rect x="625.0" y="1044.0" width="3.3" height="3.3" fill="#05050b"/><rect x="628.0" y="1044.0" width="3.3" height="3.3" fill="#0e0e14"/><rect x="631.0" y="1044.0" width="3.3" height="3.3" fill="#131319"/><rect x="634.0" y="1044.0" width="3.3" height="3.3" fill="#101016"/><rect x="637.0" y="1044.0" width="3.3" height="3.3" fill="#0b0b11"/><rect x="640.0" y="1044.0" width="3.3" height="3.3" fill="#04040a"/><rect x="643.0" y="1044.0" width="3.3" height="3.3" fill="#0e0e14"/><rect x="586.0" y="1047.0" width="3.3" height="3.3" fill="#0b0b11"/><rect x="589.0" y="1047.0" width="3.3" height="3.3" fill="#121218"/><rect x="592.0" y="1047.0" width="3.3" height="3.3" fill="#0d0d13"/><rect x="595.0" y="1047.0" width="3.3" height="3.3" fill="#101016"/><rect x="598.0" y="1047.0" width="3.3" height="3.3" fill="#272736"/><rect x="601.0" y="1047.0" width="3.3" height="3.3" fill="#728ee0"/><rect x="604.0" y="1047.0" width="3.3" height="3.3" fill="#141423"/><rect x="607.0" y="1047.0" width="3.3" height="3.3" fill="#141423"/><rect x="610.0" y="1047.0" width="3.3" height="3.3" fill="#0b0b11"/><rect x="613.0" y="1047.0" width="3.3" height="3.3" fill="#030309"/><rect x="616.0" y="1047.0" width="3.3" height="3.3" fill="#07070d"/><rect x="619.0" y="1047.0" width="3.3" height="3.3" fill="#101016"/><rect x="622.0" y="1047.0" width="3.3" height="3.3" fill="#09090f"/><rect x="625.0" y="1047.0" width="3.3" height="3.3" fill="#0e0e14"/><rect x="628.0" y="1047.0" width="3.3" height="3.3" fill="#04040a"/><rect x="631.0" y="1047.0" width="3.3" height="3.3" fill="#121218"/><rect x="634.0" y="1047.0" width="3.3" height="3.3" fill="#09090f"/><rect x="637.0" y="1047.0" width="3.3" height="3.3" fill="#121218"/><rect x="640.0" y="1047.0" width="3.3" height="3.3" fill="#04040a"/><rect x="643.0" y="1047.0" width="3.3" height="3.3" fill="#0f0f15"/><rect x="586.0" y="1050.0" width="3.3" height="3.3" fill="#0b0b11"/><rect x="589.0" y="1050.0" width="3.3" height="3.3" fill="#0a0a10"/><rect x="592.0" y="1050.0" width="3.3" height="3.3" fill="#020208"/><rect x="595.0" y="1050.0" width="3.3" height="3.3" fill="#0c0c12"/><rect x="598.0" y="1050.0" width="3.3" height="3.3" fill="#708cde"/><rect x="601.0" y="1050.0" width="3.3" height="3.3" fill="#6884d6"/><rect x="604.0" y="1050.0" width="3.3" height="3.3" fill="#272736"/><rect x="607.0" y="1050.0" width="3.3" height="3.3" fill="#6d89db"/><rect x="610.0" y="1050.0" width="3.3" height="3.3" fill="#030309"/><rect x="613.0" y="1050.0" width="3.3" height="3.3" fill="#04040a"/><rect x="616.0" y="1050.0" width="3.3" height="3.3" fill="#101016"/><rect x="619.0" y="1050.0" width="3.3" height="3.3" fill="#111117"/><rect x="622.0" y="1050.0" width="3.3" height="3.3" fill="#15151b"/><rect x="625.0" y="1050.0" width="3.3" height="3.3" fill="#131319"/><rect x="628.0" y="1050.0" width="3.3" height="3.3" fill="#0a0a10"/><rect x="631.0" y="1050.0" width="3.3" height="3.3" fill="#07070d"/><rect x="634.0" y="1050.0" width="3.3" height="3.3" fill="#0c0c12"/><rect x="637.0" y="1050.0" width="3.3" height="3.3" fill="#08080e"/><rect x="640.0" y="1050.0" width="3.3" height="3.3" fill="#0c0c12"/><rect x="643.0" y="1050.0" width="3.3" height="3.3" fill="#131319"/><rect x="586.0" y="1053.0" width="3.3" height="3.3" fill="#0b0b11"/><rect x="589.0" y="1053.0" width="3.3" height="3.3" fill="#15151b"/><rect x="592.0" y="1053.0" width="3.3" height="3.3" fill="#101016"/><rect x="595.0" y="1053.0" width="3.3" height="3.3" fill="#020208"/><rect x="598.0" y="1053.0" width="3.3" height="3.3" fill="#101016"/><rect x="601.0" y="1053.0" width="3.3" height="3.3" fill="#0f0f15"/><rect x="604.0" y="1053.0" width="3.3" height="3.3" fill="#0e0e14"/><rect x="607.0" y="1053.0" width="3.3" height="3.3" fill="#020208"/><rect x="610.0" y="1053.0" width="3.3" height="3.3" fill="#131319"/><rect x="613.0" y="1053.0" width="3.3" height="3.3" fill="#0b0b11"/><rect x="616.0" y="1053.0" width="3.3" height="3.3" fill="#0c0c12"/><rect x="619.0" y="1053.0" width="3.3" height="3.3" fill="#05050b"/><rect x="622.0" y="1053.0" width="3.3" height="3.3" fill="#020208"/><rect x="625.0" y="1053.0" width="3.3" height="3.3" fill="#020208"/><rect x="628.0" y="1053.0" width="3.3" height="3.3" fill="#06060c"/><rect x="631.0" y="1053.0" width="3.3" height="3.3" fill="#08080e"/><rect x="634.0" y="1053.0" width="3.3" height="3.3" fill="#05050b"/><rect x="637.0" y="1053.0" width="3.3" height="3.3" fill="#030309"/><rect x="640.0" y="1053.0" width="3.3" height="3.3" fill="#101016"/><rect x="643.0" y="1053.0" width="3.3" height="3.3" fill="#101016"/>
</g>
<text x="528.0" y="1072.6" font-size="12.5" fill="#e6e6e6" textLength="33.5" lengthAdjust="spacingAndGlyphs" >zellion</text>
<defs><filter id="vblur"><feGaussianBlur stdDeviation="1.6"/></filter></defs>
<g clip-path="url(#vid)"><g filter="url(#vblur)"><rect x="905" y="965" width="220" height="125" fill="#4a3c2e"/><rect x="905" y="965" width="70" height="125" fill="#3a2f25"/><path d="M916,998 L972,1000 M916,1019 L972,1021 M916,1041 L972,1042 M916,1062 L972,1063" stroke="#8a7658" stroke-width="2.2"/><rect x="918" y="972" width="55" height="24" fill="#574735"/><rect x="920" y="1045" width="45" height="15" fill="#2c2824"/><rect x="975" y="965" width="40" height="60" fill="#6a5841"/><rect x="990" y="972" width="18" height="10" fill="#d9c7a0"/><rect x="956" y="1013" width="15" height="21" fill="#cfc2ae"/><rect x="1046" y="965" width="18" height="125" fill="#8e7e68"/><rect x="1061" y="965" width="26" height="95" fill="#1d58a4"/><rect x="1085" y="972" width="28" height="86" fill="#3fa9ea"/><rect x="1061" y="1058" width="60" height="30" fill="#8b7f70"/><ellipse cx="1018" cy="1026" rx="28" ry="36" fill="#7b604c"/><ellipse cx="1020" cy="990" rx="32" ry="14" fill="#9d978c"/><ellipse cx="992" cy="1004" rx="8" ry="14" fill="#8f877a"/><ellipse cx="1046" cy="1002" rx="8" ry="16" fill="#948b7c"/><ellipse cx="1036" cy="1034" rx="10" ry="15" fill="#9a8774"/><rect x="994" y="1002" width="56" height="11" rx="5" fill="#2e2826"/><ellipse cx="1014" cy="1042" rx="13" ry="4" fill="#4e3c32"/><path d="M945,1090 Q952,1058 992,1048 L1046,1046 Q1084,1055 1092,1090 Z" fill="#8a9ab2"/><path d="M1004,1047 L1018,1080 L1034,1046 Z" fill="#4d5c78"/></g></g>
<rect x="1116" y="972" width="200" height="108" fill="#1c1b1d" />
<circle cx="1216" cy="1026" r="30" fill="#b3dcf7" />
<circle cx="1216" cy="1019.5" r="6" fill="#ffffff" />
<path d="M1204.5,1037 L1204.5,1031.5 Q1204.5,1027.5 1209,1027 L1223,1027 Q1227.5,1027.5 1227.5,1031.5 L1227.5,1037 Z" fill="#ffffff"/>
<text x="1128.2" y="1072.6" font-size="12.5" fill="#e6e6e6" textLength="107.6" lengthAdjust="spacingAndGlyphs" >live:fa5c849f649a0f12</text>
<rect x="1316" y="972" width="200" height="108" fill="#3a3944" />
<circle cx="1416" cy="1026" r="30" fill="#b3dcf7" />
<circle cx="1416" cy="1019.5" r="6" fill="#ffffff" />
<path d="M1404.5,1037 L1404.5,1031.5 Q1404.5,1027.5 1409,1027 L1423,1027 Q1427.5,1027.5 1427.5,1031.5 L1427.5,1037 Z" fill="#ffffff"/>
<text x="1328.3" y="1072.6" font-size="12.5" fill="#e6e6e6" textLength="50.9" lengthAdjust="spacingAndGlyphs" >Deng Yilin</text>
<rect x="1516" y="972" width="200" height="108" fill="#1c1b1d" />
<g clip-path="url(#av7)">
<rect x="1586.0" y="996.0" width="3.3" height="3.3" fill="#e4dfda"/><rect x="1589.0" y="996.0" width="3.3" height="3.3" fill="#dcd7d2"/><rect x="1592.0" y="996.0" width="3.3" height="3.3" fill="#f2ede8"/><rect x="1595.0" y="996.0" width="3.3" height="3.3" fill="#d9d4cf"/><rect x="1598.0" y="996.0" width="3.3" height="3.3" fill="#ede8e3"/><rect x="1601.0" y="996.0" width="3.3" height="3.3" fill="#e6e1dc"/><rect x="1604.0" y="996.0" width="3.3" height="3.3" fill="#d8d3ce"/><rect x="1607.0" y="996.0" width="3.3" height="3.3" fill="#ece7e2"/><rect x="1610.0" y="996.0" width="3.3" height="3.3" fill="#d7d2cd"/><rect x="1613.0" y="996.0" width="3.3" height="3.3" fill="#e9e4df"/><rect x="1616.0" y="996.0" width="3.3" height="3.3" fill="#b0b4ba"/><rect x="1619.0" y="996.0" width="3.3" height="3.3" fill="#b0b4ba"/><rect x="1622.0" y="996.0" width="3.3" height="3.3" fill="#bfc3c9"/><rect x="1625.0" y="996.0" width="3.3" height="3.3" fill="#d1d5db"/><rect x="1628.0" y="996.0" width="3.3" height="3.3" fill="#b2b6bc"/><rect x="1631.0" y="996.0" width="3.3" height="3.3" fill="#b6bac0"/><rect x="1634.0" y="996.0" width="3.3" height="3.3" fill="#c8ccd2"/><rect x="1637.0" y="996.0" width="3.3" height="3.3" fill="#d6dae0"/><rect x="1640.0" y="996.0" width="3.3" height="3.3" fill="#c6cad0"/><rect x="1643.0" y="996.0" width="3.3" height="3.3" fill="#bec2c8"/><rect x="1586.0" y="999.0" width="3.3" height="3.3" fill="#faf3ec"/><rect x="1589.0" y="999.0" width="3.3" height="3.3" fill="#d2cbc4"/><rect x="1592.0" y="999.0" width="3.3" height="3.3" fill="#f5eee7"/><rect x="1595.0" y="999.0" width="3.3" height="3.3" fill="#dcd5ce"/><rect x="1598.0" y="999.0" width="3.3" height="3.3" fill="#d6cfc8"/><rect x="1601.0" y="999.0" width="3.3" height="3.3" fill="#d5cec7"/><rect x="1604.0" y="999.0" width="3.3" height="3.3" fill="#ddd6cf"/><rect x="1607.0" y="999.0" width="3.3" height="3.3" fill="#f3ece5"/><rect x="1610.0" y="999.0" width="3.3" height="3.3" fill="#d7d0c9"/><rect x="1613.0" y="999.0" width="3.3" height="3.3" fill="#e9e2db"/><rect x="1616.0" y="999.0" width="3.3" height="3.3" fill="#c6c9ce"/><rect x="1619.0" y="999.0" width="3.3" height="3.3" fill="#babdc2"/><rect x="1622.0" y="999.0" width="3.3" height="3.3" fill="#c2c5ca"/><rect x="1625.0" y="999.0" width="3.3" height="3.3" fill="#acafb4"/><rect x="1628.0" y="999.0" width="3.3" height="3.3" fill="#acafb4"/><rect x="1631.0" y="999.0" width="3.3" height="3.3" fill="#b3b6bb"/><rect x="1634.0" y="999.0" width="3.3" height="3.3" fill="#c7cacf"/><rect x="1637.0" y="999.0" width="3.3" height="3.3" fill="#bcbfc4"/><rect x="1640.0" y="999.0" width="3.3" height="3.3" fill="#b7babf"/><rect x="1643.0" y="999.0" width="3.3" height="3.3" fill="#c3c6cb"/><rect x="1586.0" y="1002.0" width="3.3" height="3.3" fill="#dcd3ca"/><rect x="1589.0" y="1002.0" width="3.3" height="3.3" fill="#d6cdc4"/><rect x="1592.0" y="1002.0" width="3.3" height="3.3" fill="#ebe2d9"/><rect x="1595.0" y="1002.0" width="3.3" height="3.3" fill="#e7ded5"/><rect x="1598.0" y="1002.0" width="3.3" height="3.3" fill="#d3cac1"/><rect x="1601.0" y="1002.0" width="3.3" height="3.3" fill="#e2d9d0"/><rect x="1604.0" y="1002.0" width="3.3" height="3.3" fill="#e0d7ce"/><rect x="1607.0" y="1002.0" width="3.3" height="3.3" fill="#efe6dd"/><rect x="1610.0" y="1002.0" width="3.3" height="3.3" fill="#e9e0d7"/><rect x="1613.0" y="1002.0" width="3.3" height="3.3" fill="#d5ccc3"/><rect x="1616.0" y="1002.0" width="3.3" height="3.3" fill="#d1d4d7"/><rect x="1619.0" y="1002.0" width="3.3" height="3.3" fill="#789dc5"/><rect x="1622.0" y="1002.0" width="3.3" height="3.3" fill="#85aad2"/><rect x="1625.0" y="1002.0" width="3.3" height="3.3" fill="#94b9e1"/><rect x="1628.0" y="1002.0" width="3.3" height="3.3" fill="#799ec6"/><rect x="1631.0" y="1002.0" width="3.3" height="3.3" fill="#88add5"/><rect x="1634.0" y="1002.0" width="3.3" height="3.3" fill="#7499c1"/><rect x="1637.0" y="1002.0" width="3.3" height="3.3" fill="#c3c6c9"/><rect x="1640.0" y="1002.0" width="3.3" height="3.3" fill="#c7cacd"/><rect x="1643.0" y="1002.0" width="3.3" height="3.3" fill="#bfc2c5"/><rect x="1586.0" y="1005.0" width="3.3" height="3.3" fill="#e9ded2"/><rect x="1589.0" y="1005.0" width="3.3" height="3.3" fill="#d0c5b9"/><rect x="1592.0" y="1005.0" width="3.3" height="3.3" fill="#e1d6ca"/><rect x="1595.0" y="1005.0" width="3.3" height="3.3" fill="#ddd2c6"/><rect x="1598.0" y="1005.0" width="3.3" height="3.3" fill="#dcd1c5"/><rect x="1601.0" y="1005.0" width="3.3" height="3.3" fill="#d7ccc0"/><rect x="1604.0" y="1005.0" width="3.3" height="3.3" fill="#e7dcd0"/><rect x="1607.0" y="1005.0" width="3.3" height="3.3" fill="#ece1d5"/><rect x="1610.0" y="1005.0" width="3.3" height="3.3" fill="#d7ccc0"/><rect x="1613.0" y="1005.0" width="3.3" height="3.3" fill="#e0d5c9"/><rect x="1616.0" y="1005.0" width="3.3" height="3.3" fill="#a5a7a9"/><rect x="1619.0" y="1005.0" width="3.3" height="3.3" fill="#91b6de"/><rect x="1622.0" y="1005.0" width="3.3" height="3.3" fill="#8fb4dc"/><rect x="1625.0" y="1005.0" width="3.3" height="3.3" fill="#9ec3eb"/><rect x="1628.0" y="1005.0" width="3.3" height="3.3" fill="#97bce4"/><rect x="1631.0" y="1005.0" width="3.3" height="3.3" fill="#7fa4cc"/><rect x="1634.0" y="1005.0" width="3.3" height="3.3" fill="#83a8d0"/><rect x="1637.0" y="1005.0" width="3.3" height="3.3" fill="#c0c2c4"/><rect x="1640.0" y="1005.0" width="3.3" height="3.3" fill="#a3a5a7"/><rect x="1643.0" y="1005.0" width="3.3" height="3.3" fill="#b7b9bb"/><rect x="1586.0" y="1008.0" width="3.3" height="3.3" fill="#c3b6a9"/><rect x="1589.0" y="1008.0" width="3.3" height="3.3" fill="#c1b4a7"/><rect x="1592.0" y="1008.0" width="3.3" height="3.3" fill="#beb1a4"/><rect x="1595.0" y="1008.0" width="3.3" height="3.3" fill="#ddd0c3"/><rect x="1598.0" y="1008.0" width="3.3" height="3.3" fill="#c1b4a7"/><rect x="1601.0" y="1008.0" width="3.3" height="3.3" fill="#c6b9ac"/><rect x="1604.0" y="1008.0" width="3.3" height="3.3" fill="#cdc0b3"/><rect x="1607.0" y="1008.0" width="3.3" height="3.3" fill="#e2d5c8"/><rect x="1610.0" y="1008.0" width="3.3" height="3.3" fill="#bfb2a5"/><rect x="1613.0" y="1008.0" width="3.3" height="3.3" fill="#cfc2b5"/><rect x="1616.0" y="1008.0" width="3.3" height="3.3" fill="#b8b8ba"/><rect x="1619.0" y="1008.0" width="3.3" height="3.3" fill="#c6c6c8"/><rect x="1622.0" y="1008.0" width="3.3" height="3.3" fill="#c4c4c6"/><rect x="1625.0" y="1008.0" width="3.3" height="3.3" fill="#c6c6c8"/><rect x="1628.0" y="1008.0" width="3.3" height="3.3" fill="#acacae"/><rect x="1631.0" y="1008.0" width="3.3" height="3.3" fill="#b2b2b4"/><rect x="1634.0" y="1008.0" width="3.3" height="3.3" fill="#afafb1"/><rect x="1637.0" y="1008.0" width="3.3" height="3.3" fill="#c6c6c8"/><rect x="1640.0" y="1008.0" width="3.3" height="3.3" fill="#cacacc"/><rect x="1643.0" y="1008.0" width="3.3" height="3.3" fill="#a6a6a8"/><rect x="1586.0" y="1011.0" width="3.3" height="3.3" fill="#bdae9e"/><rect x="1589.0" y="1011.0" width="3.3" height="3.3" fill="#c0b1a1"/><rect x="1592.0" y="1011.0" width="3.3" height="3.3" fill="#c0b1a1"/><rect x="1595.0" y="1011.0" width="3.3" height="3.3" fill="#cbbcac"/><rect x="1598.0" y="1011.0" width="3.3" height="3.3" fill="#cfc0b0"/><rect x="1601.0" y="1011.0" width="3.3" height="3.3" fill="#c1b2a2"/><rect x="1604.0" y="1011.0" width="3.3" height="3.3" fill="#b6a797"/><rect x="1607.0" y="1011.0" width="3.3" height="3.3" fill="#c8b9a9"/><rect x="1610.0" y="1011.0" width="3.3" height="3.3" fill="#c6b7a7"/><rect x="1613.0" y="1011.0" width="3.3" height="3.3" fill="#cebfaf"/><rect x="1616.0" y="1011.0" width="3.3" height="3.3" fill="#c6c5c5"/><rect x="1619.0" y="1011.0" width="3.3" height="3.3" fill="#bbbaba"/><rect x="1622.0" y="1011.0" width="3.3" height="3.3" fill="#b3b2b2"/><rect x="1625.0" y="1011.0" width="3.3" height="3.3" fill="#b8b7b7"/><rect x="1628.0" y="1011.0" width="3.3" height="3.3" fill="#bab9b9"/><rect x="1631.0" y="1011.0" width="3.3" height="3.3" fill="#9f9e9e"/><rect x="1634.0" y="1011.0" width="3.3" height="3.3" fill="#c4c3c3"/><rect x="1637.0" y="1011.0" width="3.3" height="3.3" fill="#bfbebe"/><rect x="1640.0" y="1011.0" width="3.3" height="3.3" fill="#c3c2c2"/><rect x="1643.0" y="1011.0" width="3.3" height="3.3" fill="#c0bfbf"/><rect x="1586.0" y="1014.0" width="3.3" height="3.3" fill="#a3855b"/><rect x="1589.0" y="1014.0" width="3.3" height="3.3" fill="#a3855b"/><rect x="1592.0" y="1014.0" width="3.3" height="3.3" fill="#cea555"/><rect x="1595.0" y="1014.0" width="3.3" height="3.3" fill="#a77d3c"/><rect x="1598.0" y="1014.0" width="3.3" height="3.3" fill="#c69d4d"/><rect x="1601.0" y="1014.0" width="3.3" height="3.3" fill="#c19848"/><rect x="1604.0" y="1014.0" width="3.3" height="3.3" fill="#7b684e"/><rect x="1607.0" y="1014.0" width="3.3" height="3.3" fill="#b99040"/><rect x="1610.0" y="1014.0" width="3.3" height="3.3" fill="#a08d73"/><rect x="1613.0" y="1014.0" width="3.3" height="3.3" fill="#a07635"/><rect x="1616.0" y="1014.0" width="3.3" height="3.3" fill="#ba904f"/><rect x="1619.0" y="1014.0" width="3.3" height="3.3" fill="#ddb565"/><rect x="1622.0" y="1014.0" width="3.3" height="3.3" fill="#ac8e64"/><rect x="1625.0" y="1014.0" width="3.3" height="3.3" fill="#97794f"/><rect x="1628.0" y="1014.0" width="3.3" height="3.3" fill="#bd9f75"/><rect x="1631.0" y="1014.0" width="3.3" height="3.3" fill="#b79f72"/><rect x="1634.0" y="1014.0" width="3.3" height="3.3" fill="#9c8456"/><rect x="1637.0" y="1014.0" width="3.3" height="3.3" fill="#c2aa7d"/><rect x="1640.0" y="1014.0" width="3.3" height="3.3" fill="#a28965"/><rect x="1643.0" y="1014.0" width="3.3" height="3.3" fill="#a38a66"/><rect x="1586.0" y="1017.0" width="3.3" height="3.3" fill="#a08d73"/><rect x="1589.0" y="1017.0" width="3.3" height="3.3" fill="#867359"/><rect x="1592.0" y="1017.0" width="3.3" height="3.3" fill="#9f8c72"/><rect x="1595.0" y="1017.0" width="3.3" height="3.3" fill="#c09747"/><rect x="1598.0" y="1017.0" width="3.3" height="3.3" fill="#e0b868"/><rect x="1601.0" y="1017.0" width="3.3" height="3.3" fill="#b58b4a"/><rect x="1604.0" y="1017.0" width="3.3" height="3.3" fill="#ae8443"/><rect x="1607.0" y="1017.0" width="3.3" height="3.3" fill="#8e7b61"/><rect x="1610.0" y="1017.0" width="3.3" height="3.3" fill="#ad8342"/><rect x="1613.0" y="1017.0" width="3.3" height="3.3" fill="#b98f4e"/><rect x="1616.0" y="1017.0" width="3.3" height="3.3" fill="#b5976d"/><rect x="1619.0" y="1017.0" width="3.3" height="3.3" fill="#bf9554"/><rect x="1622.0" y="1017.0" width="3.3" height="3.3" fill="#9a7c52"/><rect x="1625.0" y="1017.0" width="3.3" height="3.3" fill="#c29949"/><rect x="1628.0" y="1017.0" width="3.3" height="3.3" fill="#edc575"/><rect x="1631.0" y="1017.0" width="3.3" height="3.3" fill="#a18864"/><rect x="1634.0" y="1017.0" width="3.3" height="3.3" fill="#c0a87b"/><rect x="1637.0" y="1017.0" width="3.3" height="3.3" fill="#b59d70"/><rect x="1640.0" y="1017.0" width="3.3" height="3.3" fill="#ccb487"/><rect x="1643.0" y="1017.0" width="3.3" height="3.3" fill="#9c8456"/><rect x="1586.0" y="1020.0" width="3.3" height="3.3" fill="#a87e3d"/><rect x="1589.0" y="1020.0" width="3.3" height="3.3" fill="#a08258"/><rect x="1592.0" y="1020.0" width="3.3" height="3.3" fill="#927f65"/><rect x="1595.0" y="1020.0" width="3.3" height="3.3" fill="#b6986e"/><rect x="1598.0" y="1020.0" width="3.3" height="3.3" fill="#eac272"/><rect x="1601.0" y="1020.0" width="3.3" height="3.3" fill="#d6ad5d"/><rect x="1604.0" y="1020.0" width="3.3" height="3.3" fill="#d7ae5e"/><rect x="1607.0" y="1020.0" width="3.3" height="3.3" fill="#c79d5c"/><rect x="1610.0" y="1020.0" width="3.3" height="3.3" fill="#b48a49"/><rect x="1613.0" y="1020.0" width="3.3" height="3.3" fill="#d5ad5d"/><rect x="1616.0" y="1020.0" width="3.3" height="3.3" fill="#95774d"/><rect x="1619.0" y="1020.0" width="3.3" height="3.3" fill="#c79e4e"/><rect x="1622.0" y="1020.0" width="3.3" height="3.3" fill="#be9453"/><rect x="1625.0" y="1020.0" width="3.3" height="3.3" fill="#deb565"/><rect x="1628.0" y="1020.0" width="3.3" height="3.3" fill="#987a50"/><rect x="1631.0" y="1020.0" width="3.3" height="3.3" fill="#b09773"/><rect x="1634.0" y="1020.0" width="3.3" height="3.3" fill="#8f8477"/><rect x="1637.0" y="1020.0" width="3.3" height="3.3" fill="#cdb588"/><rect x="1640.0" y="1020.0" width="3.3" height="3.3" fill="#7b7063"/><rect x="1643.0" y="1020.0" width="3.3" height="3.3" fill="#9e8658"/><rect x="1586.0" y="1023.0" width="3.3" height="3.3" fill="#d6ad5d"/><rect x="1589.0" y="1023.0" width="3.3" height="3.3" fill="#b68c4b"/><rect x="1592.0" y="1023.0" width="3.3" height="3.3" fill="#b28847"/><rect x="1595.0" y="1023.0" width="3.3" height="3.3" fill="#c39958"/><rect x="1598.0" y="1023.0" width="3.3" height="3.3" fill="#a07635"/><rect x="1601.0" y="1023.0" width="3.3" height="3.3" fill="#ab8140"/><rect x="1604.0" y="1023.0" width="3.3" height="3.3" fill="#e3bb6b"/><rect x="1607.0" y="1023.0" width="3.3" height="3.3" fill="#9d7f55"/><rect x="1610.0" y="1023.0" width="3.3" height="3.3" fill="#d7ae5e"/><rect x="1613.0" y="1023.0" width="3.3" height="3.3" fill="#eac272"/><rect x="1616.0" y="1023.0" width="3.3" height="3.3" fill="#9e8b71"/><rect x="1619.0" y="1023.0" width="3.3" height="3.3" fill="#9a876d"/><rect x="1622.0" y="1023.0" width="3.3" height="3.3" fill="#89765c"/><rect x="1625.0" y="1023.0" width="3.3" height="3.3" fill="#a47a39"/><rect x="1628.0" y="1023.0" width="3.3" height="3.3" fill="#caa151"/><rect x="1631.0" y="1023.0" width="3.3" height="3.3" fill="#b39a76"/><rect x="1634.0" y="1023.0" width="3.3" height="3.3" fill="#a78e6a"/><rect x="1637.0" y="1023.0" width="3.3" height="3.3" fill="#8d7b64"/><rect x="1640.0" y="1023.0" width="3.3" height="3.3" fill="#b49c6e"/><rect x="1643.0" y="1023.0" width="3.3" height="3.3" fill="#baa275"/><rect x="1586.0" y="1026.0" width="3.3" height="3.3" fill="#958268"/><rect x="1589.0" y="1026.0" width="3.3" height="3.3" fill="#cba252"/><rect x="1592.0" y="1026.0" width="3.3" height="3.3" fill="#d9b060"/><rect x="1595.0" y="1026.0" width="3.3" height="3.3" fill="#cca454"/><rect x="1598.0" y="1026.0" width="3.3" height="3.3" fill="#b48b3b"/><rect x="1601.0" y="1026.0" width="3.3" height="3.3" fill="#8d7a60"/><rect x="1604.0" y="1026.0" width="3.3" height="3.3" fill="#b48b3b"/><rect x="1607.0" y="1026.0" width="3.3" height="3.3" fill="#8a775d"/><rect x="1610.0" y="1026.0" width="3.3" height="3.3" fill="#a18e74"/><rect x="1613.0" y="1026.0" width="3.3" height="3.3" fill="#d8b060"/><rect x="1616.0" y="1026.0" width="3.3" height="3.3" fill="#8a775d"/><rect x="1619.0" y="1026.0" width="3.3" height="3.3" fill="#9a876d"/><rect x="1622.0" y="1026.0" width="3.3" height="3.3" fill="#a08d73"/><rect x="1625.0" y="1026.0" width="3.3" height="3.3" fill="#e8c070"/><rect x="1628.0" y="1026.0" width="3.3" height="3.3" fill="#c79d5c"/><rect x="1631.0" y="1026.0" width="3.3" height="3.3" fill="#b19874"/><rect x="1634.0" y="1026.0" width="3.3" height="3.3" fill="#98866f"/><rect x="1637.0" y="1026.0" width="3.3" height="3.3" fill="#ac9466"/><rect x="1640.0" y="1026.0" width="3.3" height="3.3" fill="#a3917a"/><rect x="1643.0" y="1026.0" width="3.3" height="3.3" fill="#a58d60"/><rect x="1586.0" y="1029.0" width="3.3" height="3.3" fill="#c7ae86"/><rect x="1589.0" y="1029.0" width="3.3" height="3.3" fill="#9d8873"/><rect x="1592.0" y="1029.0" width="3.3" height="3.3" fill="#ab926a"/><rect x="1595.0" y="1029.0" width="3.3" height="3.3" fill="#cfb68e"/><rect x="1598.0" y="1029.0" width="3.3" height="3.3" fill="#aa906a"/><rect x="1601.0" y="1029.0" width="3.3" height="3.3" fill="#c3a56b"/><rect x="1604.0" y="1029.0" width="3.3" height="3.3" fill="#ac936b"/><rect x="1607.0" y="1029.0" width="3.3" height="3.3" fill="#b99b61"/><rect x="1610.0" y="1029.0" width="3.3" height="3.3" fill="#ddbf85"/><rect x="1613.0" y="1029.0" width="3.3" height="3.3" fill="#b39a72"/><rect x="1616.0" y="1029.0" width="3.3" height="3.3" fill="#997f59"/><rect x="1619.0" y="1029.0" width="3.3" height="3.3" fill="#a98f69"/><rect x="1622.0" y="1029.0" width="3.3" height="3.3" fill="#c0a268"/><rect x="1625.0" y="1029.0" width="3.3" height="3.3" fill="#9d835d"/><rect x="1628.0" y="1029.0" width="3.3" height="3.3" fill="#746a5a"/><rect x="1631.0" y="1029.0" width="3.3" height="3.3" fill="#7f7565"/><rect x="1634.0" y="1029.0" width="3.3" height="3.3" fill="#b49a74"/><rect x="1637.0" y="1029.0" width="3.3" height="3.3" fill="#d0b78f"/><rect x="1640.0" y="1029.0" width="3.3" height="3.3" fill="#b49a74"/><rect x="1643.0" y="1029.0" width="3.3" height="3.3" fill="#77624d"/><rect x="1586.0" y="1032.0" width="3.3" height="3.3" fill="#a68d65"/><rect x="1589.0" y="1032.0" width="3.3" height="3.3" fill="#b0976f"/><rect x="1592.0" y="1032.0" width="3.3" height="3.3" fill="#98836e"/><rect x="1595.0" y="1032.0" width="3.3" height="3.3" fill="#756b5b"/><rect x="1598.0" y="1032.0" width="3.3" height="3.3" fill="#8c8272"/><rect x="1601.0" y="1032.0" width="3.3" height="3.3" fill="#89745f"/><rect x="1604.0" y="1032.0" width="3.3" height="3.3" fill="#8d734d"/><rect x="1607.0" y="1032.0" width="3.3" height="3.3" fill="#c8af87"/><rect x="1610.0" y="1032.0" width="3.3" height="3.3" fill="#9c825c"/><rect x="1613.0" y="1032.0" width="3.3" height="3.3" fill="#957b55"/><rect x="1616.0" y="1032.0" width="3.3" height="3.3" fill="#8f7a65"/><rect x="1619.0" y="1032.0" width="3.3" height="3.3" fill="#a88f67"/><rect x="1622.0" y="1032.0" width="3.3" height="3.3" fill="#8c724c"/><rect x="1625.0" y="1032.0" width="3.3" height="3.3" fill="#87725d"/><rect x="1628.0" y="1032.0" width="3.3" height="3.3" fill="#ddbf85"/><rect x="1631.0" y="1032.0" width="3.3" height="3.3" fill="#9c8772"/><rect x="1634.0" y="1032.0" width="3.3" height="3.3" fill="#a58b65"/><rect x="1637.0" y="1032.0" width="3.3" height="3.3" fill="#bca37b"/><rect x="1640.0" y="1032.0" width="3.3" height="3.3" fill="#ceb58d"/><rect x="1643.0" y="1032.0" width="3.3" height="3.3" fill="#b0976f"/><rect x="1586.0" y="1035.0" width="3.3" height="3.3" fill="#7c6752"/><rect x="1589.0" y="1035.0" width="3.3" height="3.3" fill="#7f7565"/><rect x="1592.0" y="1035.0" width="3.3" height="3.3" fill="#95806b"/><rect x="1595.0" y="1035.0" width="3.3" height="3.3" fill="#b89f77"/><rect x="1598.0" y="1035.0" width="3.3" height="3.3" fill="#957b55"/><rect x="1601.0" y="1035.0" width="3.3" height="3.3" fill="#b59b75"/><rect x="1604.0" y="1035.0" width="3.3" height="3.3" fill="#645a4a"/><rect x="1607.0" y="1035.0" width="3.3" height="3.3" fill="#bda47c"/><rect x="1610.0" y="1035.0" width="3.3" height="3.3" fill="#bba27a"/><rect x="1613.0" y="1035.0" width="3.3" height="3.3" fill="#b39973"/><rect x="1616.0" y="1035.0" width="3.3" height="3.3" fill="#ceb076"/><rect x="1619.0" y="1035.0" width="3.3" height="3.3" fill="#807666"/><rect x="1622.0" y="1035.0" width="3.3" height="3.3" fill="#d6b87e"/><rect x="1625.0" y="1035.0" width="3.3" height="3.3" fill="#9e8974"/><rect x="1628.0" y="1035.0" width="3.3" height="3.3" fill="#c3aa82"/><rect x="1631.0" y="1035.0" width="3.3" height="3.3" fill="#b49b73"/><rect x="1634.0" y="1035.0" width="3.3" height="3.3" fill="#85705b"/><rect x="1637.0" y="1035.0" width="3.3" height="3.3" fill="#d0b78f"/><rect x="1640.0" y="1035.0" width="3.3" height="3.3" fill="#745f4a"/><rect x="1643.0" y="1035.0" width="3.3" height="3.3" fill="#9c825c"/><rect x="1586.0" y="1038.0" width="3.3" height="3.3" fill="#676c75"/><rect x="1589.0" y="1038.0" width="3.3" height="3.3" fill="#8a8f98"/><rect x="1592.0" y="1038.0" width="3.3" height="3.3" fill="#7e838c"/><rect x="1595.0" y="1038.0" width="3.3" height="3.3" fill="#656a73"/><rect x="1598.0" y="1038.0" width="3.3" height="3.3" fill="#6a6f78"/><rect x="1601.0" y="1038.0" width="3.3" height="3.3" fill="#646972"/><rect x="1604.0" y="1038.0" width="3.3" height="3.3" fill="#8e8474"/><rect x="1607.0" y="1038.0" width="3.3" height="3.3" fill="#987e58"/><rect x="1610.0" y="1038.0" width="3.3" height="3.3" fill="#9e8974"/><rect x="1613.0" y="1038.0" width="3.3" height="3.3" fill="#ae956d"/><rect x="1616.0" y="1038.0" width="3.3" height="3.3" fill="#b2945a"/><rect x="1619.0" y="1038.0" width="3.3" height="3.3" fill="#77624d"/><rect x="1622.0" y="1038.0" width="3.3" height="3.3" fill="#bba27a"/><rect x="1625.0" y="1038.0" width="3.3" height="3.3" fill="#947a54"/><rect x="1628.0" y="1038.0" width="3.3" height="3.3" fill="#8d734d"/><rect x="1631.0" y="1038.0" width="3.3" height="3.3" fill="#6a6050"/><rect x="1634.0" y="1038.0" width="3.3" height="3.3" fill="#8b714b"/><rect x="1637.0" y="1038.0" width="3.3" height="3.3" fill="#b29971"/><rect x="1640.0" y="1038.0" width="3.3" height="3.3" fill="#675d4d"/><rect x="1643.0" y="1038.0" width="3.3" height="3.3" fill="#cab189"/><rect x="1586.0" y="1041.0" width="3.3" height="3.3" fill="#eece6e"/><rect x="1589.0" y="1041.0" width="3.3" height="3.3" fill="#c44434"/><rect x="1592.0" y="1041.0" width="3.3" height="3.3" fill="#bb3b2b"/><rect x="1595.0" y="1041.0" width="3.3" height="3.3" fill="#e1a949"/><rect x="1598.0" y="1041.0" width="3.3" height="3.3" fill="#d8b858"/><rect x="1601.0" y="1041.0" width="3.3" height="3.3" fill="#f5c545"/><rect x="1604.0" y="1041.0" width="3.3" height="3.3" fill="#d3b353"/><rect x="1607.0" y="1041.0" width="3.3" height="3.3" fill="#f9d979"/><rect x="1610.0" y="1041.0" width="3.3" height="3.3" fill="#e4c464"/><rect x="1613.0" y="1041.0" width="3.3" height="3.3" fill="#fdcd4d"/><rect x="1616.0" y="1041.0" width="3.3" height="3.3" fill="#ca4a3a"/><rect x="1619.0" y="1041.0" width="3.3" height="3.3" fill="#e3b333"/><rect x="1622.0" y="1041.0" width="3.3" height="3.3" fill="#c64636"/><rect x="1625.0" y="1041.0" width="3.3" height="3.3" fill="#f5d575"/><rect x="1628.0" y="1041.0" width="3.3" height="3.3" fill="#f0d070"/><rect x="1631.0" y="1041.0" width="3.3" height="3.3" fill="#e6b636"/><rect x="1634.0" y="1041.0" width="3.3" height="3.3" fill="#dbab2b"/><rect x="1637.0" y="1041.0" width="3.3" height="3.3" fill="#e6b636"/><rect x="1640.0" y="1041.0" width="3.3" height="3.3" fill="#d29a3a"/><rect x="1643.0" y="1041.0" width="3.3" height="3.3" fill="#eaca6a"/><rect x="1586.0" y="1044.0" width="3.3" height="3.3" fill="#a22212"/><rect x="1589.0" y="1044.0" width="3.3" height="3.3" fill="#dfa747"/><rect x="1592.0" y="1044.0" width="3.3" height="3.3" fill="#cd9535"/><rect x="1595.0" y="1044.0" width="3.3" height="3.3" fill="#f5d575"/><rect x="1598.0" y="1044.0" width="3.3" height="3.3" fill="#cb4b3b"/><rect x="1601.0" y="1044.0" width="3.3" height="3.3" fill="#a62616"/><rect x="1604.0" y="1044.0" width="3.3" height="3.3" fill="#d4b454"/><rect x="1607.0" y="1044.0" width="3.3" height="3.3" fill="#deae2e"/><rect x="1610.0" y="1044.0" width="3.3" height="3.3" fill="#ffcf4f"/><rect x="1613.0" y="1044.0" width="3.3" height="3.3" fill="#faca4a"/><rect x="1616.0" y="1044.0" width="3.3" height="3.3" fill="#dcbc5c"/><rect x="1619.0" y="1044.0" width="3.3" height="3.3" fill="#ecb454"/><rect x="1622.0" y="1044.0" width="3.3" height="3.3" fill="#efbf3f"/><rect x="1625.0" y="1044.0" width="3.3" height="3.3" fill="#e7c767"/><rect x="1628.0" y="1044.0" width="3.3" height="3.3" fill="#d6a626"/><rect x="1631.0" y="1044.0" width="3.3" height="3.3" fill="#edcd6d"/><rect x="1634.0" y="1044.0" width="3.3" height="3.3" fill="#aa2a1a"/><rect x="1637.0" y="1044.0" width="3.3" height="3.3" fill="#b03020"/><rect x="1640.0" y="1044.0" width="3.3" height="3.3" fill="#eece6e"/><rect x="1643.0" y="1044.0" width="3.3" height="3.3" fill="#af2f1f"/><rect x="1586.0" y="1047.0" width="3.3" height="3.3" fill="#c78f2f"/><rect x="1589.0" y="1047.0" width="3.3" height="3.3" fill="#ac2c1c"/><rect x="1592.0" y="1047.0" width="3.3" height="3.3" fill="#f4c444"/><rect x="1595.0" y="1047.0" width="3.3" height="3.3" fill="#f0d070"/><rect x="1598.0" y="1047.0" width="3.3" height="3.3" fill="#e7c767"/><rect x="1601.0" y="1047.0" width="3.3" height="3.3" fill="#d8a040"/><rect x="1604.0" y="1047.0" width="3.3" height="3.3" fill="#deae2e"/><rect x="1607.0" y="1047.0" width="3.3" height="3.3" fill="#cd4d3d"/><rect x="1610.0" y="1047.0" width="3.3" height="3.3" fill="#d2a222"/><rect x="1613.0" y="1047.0" width="3.3" height="3.3" fill="#f3c343"/><rect x="1616.0" y="1047.0" width="3.3" height="3.3" fill="#d6a626"/><rect x="1619.0" y="1047.0" width="3.3" height="3.3" fill="#e6ae4e"/><rect x="1622.0" y="1047.0" width="3.3" height="3.3" fill="#edb555"/><rect x="1625.0" y="1047.0" width="3.3" height="3.3" fill="#e3b333"/><rect x="1628.0" y="1047.0" width="3.3" height="3.3" fill="#cd9d1d"/><rect x="1631.0" y="1047.0" width="3.3" height="3.3" fill="#a82818"/><rect x="1634.0" y="1047.0" width="3.3" height="3.3" fill="#b53525"/><rect x="1637.0" y="1047.0" width="3.3" height="3.3" fill="#d7b757"/><rect x="1640.0" y="1047.0" width="3.3" height="3.3" fill="#e0b030"/><rect x="1643.0" y="1047.0" width="3.3" height="3.3" fill="#f8c848"/><rect x="1586.0" y="1050.0" width="3.3" height="3.3" fill="#d79f3f"/><rect x="1589.0" y="1050.0" width="3.3" height="3.3" fill="#ebbb3b"/><rect x="1592.0" y="1050.0" width="3.3" height="3.3" fill="#c28a2a"/><rect x="1595.0" y="1050.0" width="3.3" height="3.3" fill="#dfa747"/><rect x="1598.0" y="1050.0" width="3.3" height="3.3" fill="#e7b737"/><rect x="1601.0" y="1050.0" width="3.3" height="3.3" fill="#d49c3c"/><rect x="1604.0" y="1050.0" width="3.3" height="3.3" fill="#b73727"/><rect x="1607.0" y="1050.0" width="3.3" height="3.3" fill="#aa2a1a"/><rect x="1610.0" y="1050.0" width="3.3" height="3.3" fill="#eebe3e"/><rect x="1613.0" y="1050.0" width="3.3" height="3.3" fill="#ffd353"/><rect x="1616.0" y="1050.0" width="3.3" height="3.3" fill="#f1d171"/><rect x="1619.0" y="1050.0" width="3.3" height="3.3" fill="#b63626"/><rect x="1622.0" y="1050.0" width="3.3" height="3.3" fill="#c48c2c"/><rect x="1625.0" y="1050.0" width="3.3" height="3.3" fill="#cd4d3d"/><rect x="1628.0" y="1050.0" width="3.3" height="3.3" fill="#c58d2d"/><rect x="1631.0" y="1050.0" width="3.3" height="3.3" fill="#ebbb3b"/><rect x="1634.0" y="1050.0" width="3.3" height="3.3" fill="#d6a626"/><rect x="1637.0" y="1050.0" width="3.3" height="3.3" fill="#ce4e3e"/><rect x="1640.0" y="1050.0" width="3.3" height="3.3" fill="#f5c545"/><rect x="1643.0" y="1050.0" width="3.3" height="3.3" fill="#b43424"/><rect x="1586.0" y="1053.0" width="3.3" height="3.3" fill="#bd3d2d"/><rect x="1589.0" y="1053.0" width="3.3" height="3.3" fill="#b23222"/><rect x="1592.0" y="1053.0" width="3.3" height="3.3" fill="#e4ac4c"/><rect x="1595.0" y="1053.0" width="3.3" height="3.3" fill="#f8d878"/><rect x="1598.0" y="1053.0" width="3.3" height="3.3" fill="#b33323"/><rect x="1601.0" y="1053.0" width="3.3" height="3.3" fill="#eaca6a"/><rect x="1604.0" y="1053.0" width="3.3" height="3.3" fill="#d5b555"/><rect x="1607.0" y="1053.0" width="3.3" height="3.3" fill="#b43424"/><rect x="1610.0" y="1053.0" width="3.3" height="3.3" fill="#f3d373"/><rect x="1613.0" y="1053.0" width="3.3" height="3.3" fill="#e8b050"/><rect x="1616.0" y="1053.0" width="3.3" height="3.3" fill="#a42414"/><rect x="1619.0" y="1053.0" width="3.3" height="3.3" fill="#c78f2f"/><rect x="1622.0" y="1053.0" width="3.3" height="3.3" fill="#bc3c2c"/><rect x="1625.0" y="1053.0" width="3.3" height="3.3" fill="#dfbf5f"/><rect x="1628.0" y="1053.0" width="3.3" height="3.3" fill="#f2d272"/><rect x="1631.0" y="1053.0" width="3.3" height="3.3" fill="#ddbd5d"/><rect x="1634.0" y="1053.0" width="3.3" height="3.3" fill="#cc9434"/><rect x="1637.0" y="1053.0" width="3.3" height="3.3" fill="#daa242"/><rect x="1640.0" y="1053.0" width="3.3" height="3.3" fill="#d7b757"/><rect x="1643.0" y="1053.0" width="3.3" height="3.3" fill="#e1b131"/>
</g>
<text x="1528.0" y="1072.6" font-size="12.5" fill="#e6e6e6" textLength="66.3" lengthAdjust="spacingAndGlyphs" >supeng wang</text>
<rect x="1716" y="972" width="200" height="108" fill="#3a3944" />
<circle cx="1816" cy="1026" r="30" fill="#b3dcf7" />
<circle cx="1816" cy="1019.5" r="6" fill="#ffffff" />
<path d="M1804.5,1037 L1804.5,1031.5 Q1804.5,1027.5 1809,1027 L1823,1027 Q1827.5,1027.5 1827.5,1031.5 L1827.5,1037 Z" fill="#ffffff"/>
<path d="M1734.5,1062 v1.5 M1729,1066 v-2.5 h12 v2.5 M1735,1066.5 q-2,4 -5.5,6.5 M1729,1068.5 h12.5 M1738,1068 q-1,4 -9,5.5 M1733,1070 q5,1.5 8.5,3.5" stroke="#e6e6e6" stroke-width="1.1" fill="none" />
<path d="M1746,1063.5 h12 M1751,1063.5 q0,6 -4.5,9.5 M1750.5,1067 h6.5 q0,5.5 -2.5,6 l-1.5,-0.5" stroke="#e6e6e6" stroke-width="1.1" fill="none" />
</svg></body></html>
